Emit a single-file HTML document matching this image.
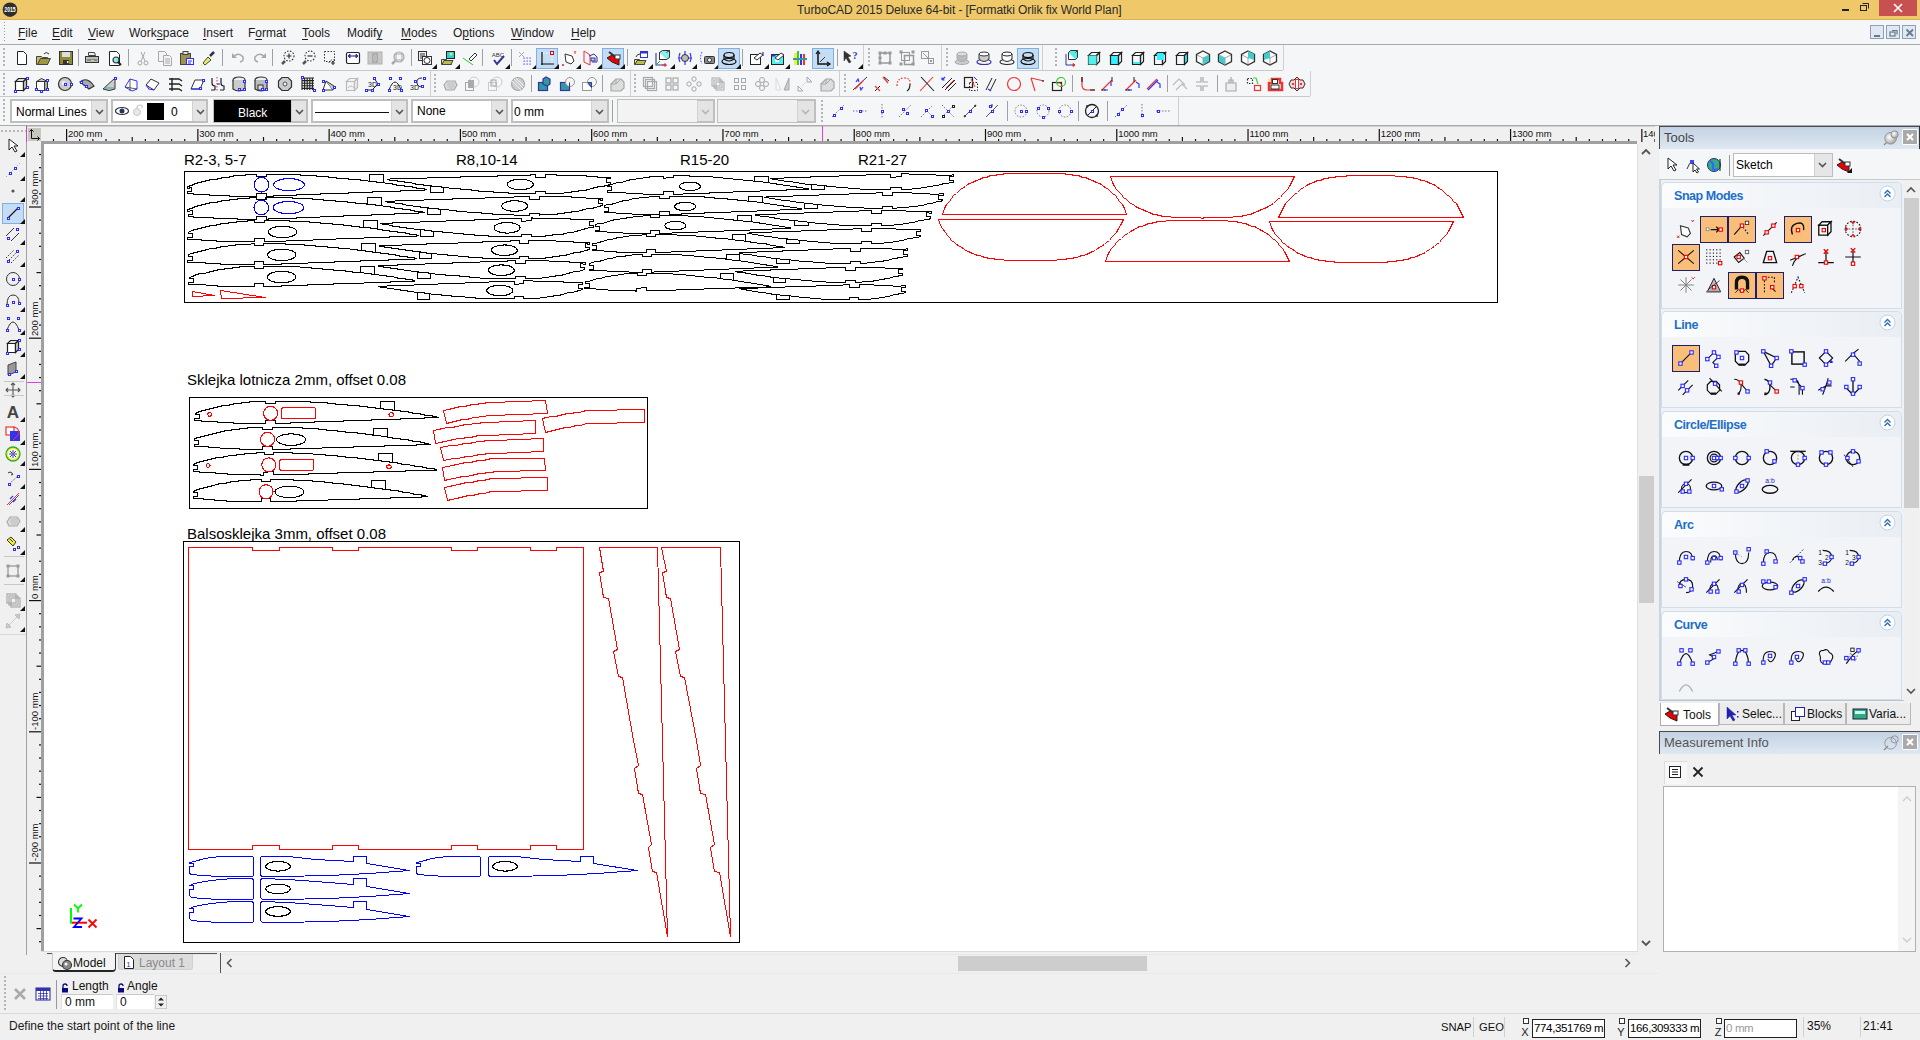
<!DOCTYPE html><html><head><meta charset="utf-8"><style>
html,body{margin:0;padding:0;width:1920px;height:1040px;overflow:hidden;background:#f0f0f0;font-family:"Liberation Sans",sans-serif;position:relative}
svg{overflow:visible}
</style></head><body><div style="position:absolute;left:0px;top:0px;width:1920px;height:19px;background:#efc86a"></div>
<div style="position:absolute;left:0px;top:19px;width:1920px;height:1px;background:#d9b25a"></div>
<svg style="position:absolute;left:2px;top:1px;" width="17" height="17" viewBox="0 0 17 17"><circle cx="8" cy="8.7" r="7.3" fill="#2d2d2d"/><text x="0" y="0" font-size="6.3" font-family="Liberation Sans" font-weight="bold" fill="#fff" text-anchor="middle" transform="translate(8 11) scale(0.82 1)">2015</text></svg>
<div style="position:absolute;left:797px;top:3.84px;font-size:12px;line-height:12px;color:#2a2a2a;white-space:nowrap;letter-spacing:-0.08px">TurboCAD 2015 Deluxe 64-bit - [Formatki Orlik fix World Plan]</div>
<div style="position:absolute;left:1842px;top:9px;width:7px;height:2px;background:#222"></div>
<svg style="position:absolute;left:1860px;top:2px;" width="10" height="10" viewBox="0 0 10 10"><rect x="0.5" y="3.5" width="6" height="5" fill="none" stroke="#222" stroke-width="1"/><path d="M2.5 1.5h6v5" fill="none" stroke="#222"/></svg>
<div style="position:absolute;left:1879px;top:0px;width:38px;height:16px;background:#c75050"></div>
<svg style="position:absolute;left:1891px;top:3px;" width="14" height="10" viewBox="0 0 14 10"><path d="M3 1 L11 9 M11 1 L3 9" stroke="#fff" stroke-width="1.6"/></svg>
<div style="position:absolute;left:0px;top:20px;width:1920px;height:24px;background:#f5f6f7"></div>
<div style="position:absolute;left:0px;top:44px;width:1920px;height:1px;background:#a9a9a9"></div>
<div style="position:absolute;left:4px;top:22px;width:1px;height:1px;background:#999"></div>
<div style="position:absolute;left:4px;top:25px;width:1px;height:1px;background:#999"></div>
<div style="position:absolute;left:4px;top:28px;width:1px;height:1px;background:#999"></div>
<div style="position:absolute;left:4px;top:31px;width:1px;height:1px;background:#999"></div>
<div style="position:absolute;left:4px;top:34px;width:1px;height:1px;background:#999"></div>
<div style="position:absolute;left:4px;top:37px;width:1px;height:1px;background:#999"></div>
<div style="position:absolute;left:4px;top:40px;width:1px;height:1px;background:#999"></div>
<div style="position:absolute;left:18px;top:26.84px;font-size:12px;line-height:12px;color:#1a1a1a;white-space:nowrap;text-decoration-thickness:1px;text-underline-offset:2px"><u>F</u>ile</div>
<div style="position:absolute;left:52px;top:26.84px;font-size:12px;line-height:12px;color:#1a1a1a;white-space:nowrap;text-decoration-thickness:1px;text-underline-offset:2px"><u>E</u>dit</div>
<div style="position:absolute;left:88px;top:26.84px;font-size:12px;line-height:12px;color:#1a1a1a;white-space:nowrap;text-decoration-thickness:1px;text-underline-offset:2px"><u>V</u>iew</div>
<div style="position:absolute;left:129px;top:26.84px;font-size:12px;line-height:12px;color:#1a1a1a;white-space:nowrap;text-decoration-thickness:1px;text-underline-offset:2px">Work<u>s</u>pace</div>
<div style="position:absolute;left:203px;top:26.84px;font-size:12px;line-height:12px;color:#1a1a1a;white-space:nowrap;text-decoration-thickness:1px;text-underline-offset:2px"><u>I</u>nsert</div>
<div style="position:absolute;left:248px;top:26.84px;font-size:12px;line-height:12px;color:#1a1a1a;white-space:nowrap;text-decoration-thickness:1px;text-underline-offset:2px">F<u>o</u>rmat</div>
<div style="position:absolute;left:302px;top:26.84px;font-size:12px;line-height:12px;color:#1a1a1a;white-space:nowrap;text-decoration-thickness:1px;text-underline-offset:2px"><u>T</u>ools</div>
<div style="position:absolute;left:347px;top:26.84px;font-size:12px;line-height:12px;color:#1a1a1a;white-space:nowrap;text-decoration-thickness:1px;text-underline-offset:2px">Modif<u>y</u></div>
<div style="position:absolute;left:401px;top:26.84px;font-size:12px;line-height:12px;color:#1a1a1a;white-space:nowrap;text-decoration-thickness:1px;text-underline-offset:2px"><u>M</u>odes</div>
<div style="position:absolute;left:453px;top:26.84px;font-size:12px;line-height:12px;color:#1a1a1a;white-space:nowrap;text-decoration-thickness:1px;text-underline-offset:2px">O<u>p</u>tions</div>
<div style="position:absolute;left:511px;top:26.84px;font-size:12px;line-height:12px;color:#1a1a1a;white-space:nowrap;text-decoration-thickness:1px;text-underline-offset:2px"><u>W</u>indow</div>
<div style="position:absolute;left:571px;top:26.84px;font-size:12px;line-height:12px;color:#1a1a1a;white-space:nowrap;text-decoration-thickness:1px;text-underline-offset:2px"><u>H</u>elp</div>
<div style="position:absolute;left:1870px;top:25px;width:14px;height:14px;background:#dde9f5;border:1px solid #8fa0b0;box-sizing:border-box"></div>
<div style="position:absolute;left:1886px;top:25px;width:14px;height:14px;background:#dde9f5;border:1px solid #8fa0b0;box-sizing:border-box"></div>
<div style="position:absolute;left:1902px;top:25px;width:14px;height:14px;background:#dde9f5;border:1px solid #8fa0b0;box-sizing:border-box"></div>
<div style="position:absolute;left:1874px;top:35px;width:6px;height:2px;background:#6b7a88"></div>
<svg style="position:absolute;left:1889px;top:28px;" width="10" height="10" viewBox="0 0 10 10"><rect x="1" y="4" width="5" height="4" fill="none" stroke="#6b7a88" stroke-width="1.2"/><path d="M3 2.5h5v4" fill="none" stroke="#6b7a88" stroke-width="1.2"/></svg>
<svg style="position:absolute;left:1905px;top:28px;" width="10" height="10" viewBox="0 0 10 10"><path d="M1.5 1.5 L8 8 M8 1.5 L1.5 8" stroke="#6b7a88" stroke-width="1.8"/></svg>
<div style="position:absolute;left:0px;top:45px;width:1920px;height:81px;background:#f5f6f7"></div>
<div style="position:absolute;left:0px;top:70px;width:1283px;height:1px;background:#c9c9c9"></div>
<div style="position:absolute;left:0px;top:96px;width:1310px;height:1px;background:#c9c9c9"></div>
<div style="position:absolute;left:0px;top:125px;width:1920px;height:1px;background:#a9a9a9"></div>
<div style="position:absolute;left:3px;top:48px;width:2px;height:2px;background:#b4b4b4"></div>
<div style="position:absolute;left:3px;top:52px;width:2px;height:2px;background:#b4b4b4"></div>
<div style="position:absolute;left:3px;top:56px;width:2px;height:2px;background:#b4b4b4"></div>
<div style="position:absolute;left:3px;top:60px;width:2px;height:2px;background:#b4b4b4"></div>
<div style="position:absolute;left:3px;top:64px;width:2px;height:2px;background:#b4b4b4"></div>
<div style="position:absolute;left:3px;top:73px;width:2px;height:2px;background:#b4b4b4"></div>
<div style="position:absolute;left:3px;top:77px;width:2px;height:2px;background:#b4b4b4"></div>
<div style="position:absolute;left:3px;top:81px;width:2px;height:2px;background:#b4b4b4"></div>
<div style="position:absolute;left:3px;top:85px;width:2px;height:2px;background:#b4b4b4"></div>
<div style="position:absolute;left:3px;top:89px;width:2px;height:2px;background:#b4b4b4"></div>
<div style="position:absolute;left:3px;top:93px;width:2px;height:2px;background:#b4b4b4"></div>
<div style="position:absolute;left:3px;top:99px;width:2px;height:2px;background:#b4b4b4"></div>
<div style="position:absolute;left:3px;top:103px;width:2px;height:2px;background:#b4b4b4"></div>
<div style="position:absolute;left:3px;top:107px;width:2px;height:2px;background:#b4b4b4"></div>
<div style="position:absolute;left:3px;top:111px;width:2px;height:2px;background:#b4b4b4"></div>
<div style="position:absolute;left:3px;top:115px;width:2px;height:2px;background:#b4b4b4"></div>
<div style="position:absolute;left:3px;top:119px;width:2px;height:2px;background:#b4b4b4"></div>
<svg style="position:absolute;left:14px;top:50px;" width="16" height="16" viewBox="0 0 16 16"><path d="M3.5 1.5h6l3 3v10h-9z" stroke="#222" stroke-width="1" fill="#fff" /></svg>
<svg style="position:absolute;left:35px;top:50px;" width="16" height="16" viewBox="0 0 16 16"><path d="M1.5 6.5h5l1 1h5v7h-11z" stroke="#444" stroke-width="1" fill="#c8c060" /><path d="M2.5 14.5l3-6h10l-3 6z" stroke="#444" stroke-width="1" fill="#9c9840" /><path d="M9 4q2-3 5 0" stroke="#333" stroke-width="1" fill="none" /></svg>
<svg style="position:absolute;left:58px;top:50px;" width="16" height="16" viewBox="0 0 16 16"><rect x="1.5" y="1.5" width="13" height="13" fill="#8e8a36" stroke="#333" stroke-width="1" /><rect x="4" y="2" width="8" height="5" fill="#ddd" stroke="none" stroke-width="0" /><rect x="5" y="10" width="6" height="4" fill="#333" stroke="none" stroke-width="0" /><rect x="9" y="11" width="1.5" height="2" fill="#eee" stroke="none" stroke-width="0" /></svg>
<div style="position:absolute;left:78px;top:49px;width:1px;height:17px;background:#a0a0a0"></div>
<svg style="position:absolute;left:84px;top:50px;" width="16" height="16" viewBox="0 0 16 16"><path d="M4.5 2.5h6l1 3h-7z" stroke="#444" stroke-width="1" fill="#eee" /><rect x="1.5" y="6.5" width="13" height="6" fill="#bbb" stroke="#333" stroke-width="1" /><rect x="3" y="9" width="10" height="2" fill="#888" stroke="none" stroke-width="0" /><rect x="7" y="10" width="3" height="1" fill="#dd3" stroke="none" stroke-width="0" /></svg>
<svg style="position:absolute;left:107px;top:50px;" width="16" height="16" viewBox="0 0 16 16"><path d="M2.5 1.5h7l3 3v11h-10z" stroke="#222" stroke-width="1" fill="#fff" /><circle cx="9" cy="10" r="3" fill="#8ee" stroke="#333" stroke-width="1.2" /><path d="M11 12l3 3" stroke="#222" stroke-width="2" fill="none" /></svg>
<div style="position:absolute;left:128px;top:49px;width:1px;height:17px;background:#a0a0a0"></div>
<svg style="position:absolute;left:135px;top:50px;" width="16" height="16" viewBox="0 0 16 16"><circle cx="5" cy="13" r="2" fill="none" stroke="#a8a8a8" stroke-width="1" /><circle cx="11" cy="13" r="2" fill="none" stroke="#a8a8a8" stroke-width="1" /><path d="M6 11L10 2M10 11L6 2" stroke="#a8a8a8" stroke-width="1" fill="none" /></svg>
<svg style="position:absolute;left:157px;top:50px;" width="16" height="16" viewBox="0 0 16 16"><path d="M1.5 1.5h6l2 2v8h-8z" stroke="#a8a8a8" stroke-width="1" fill="#f4f4f4" /><path d="M6.5 5.5h6l2 2v8h-8z" stroke="#a8a8a8" stroke-width="1" fill="#f4f4f4" /><path d="M8 9h5M8 11h5M8 13h5" stroke="#a8a8a8" stroke-width="1" fill="none" /></svg>
<svg style="position:absolute;left:179px;top:50px;" width="16" height="16" viewBox="0 0 16 16"><rect x="1.5" y="3.5" width="10" height="11" fill="#9a9450" stroke="#444" stroke-width="1" /><rect x="4" y="1.5" width="5" height="3" fill="#ddd" stroke="#444" stroke-width="1" /><rect x="7.5" y="8.5" width="7" height="6" fill="#fff" stroke="#2b2bff" stroke-width="1" /><path d="M9 11h4M9 13h3" stroke="#2b2bff" stroke-width="1" fill="none" /></svg>
<svg style="position:absolute;left:200px;top:50px;" width="16" height="16" viewBox="0 0 16 16"><path d="M3 13l5-6 3 3-6 5z" stroke="#444" stroke-width="1" fill="#ee6" /><path d="M10 6l4-4" stroke="#334" stroke-width="2.5" fill="none" /><path d="M1 15h3" stroke="#ee0" stroke-width="1" fill="none" stroke-dasharray="1.5 1.5"/></svg>
<div style="position:absolute;left:222px;top:49px;width:1px;height:17px;background:#a0a0a0"></div>
<svg style="position:absolute;left:230px;top:50px;" width="16" height="16" viewBox="0 0 16 16"><path d="M4 6q5-4 9 1q1 4-3 5" stroke="#a8a8a8" stroke-width="1.5" fill="none" /><path d="M2 3v5h5z" stroke="#a8a8a8" stroke-width="0" fill="#a8a8a8" /></svg>
<svg style="position:absolute;left:252px;top:50px;" width="16" height="16" viewBox="0 0 16 16"><path d="M12 6q-5-4-9 1q-1 4 3 5" stroke="#a8a8a8" stroke-width="1.5" fill="none" /><path d="M14 3v5h-5z" stroke="#a8a8a8" stroke-width="0" fill="#a8a8a8" /></svg>
<div style="position:absolute;left:272px;top:49px;width:1px;height:17px;background:#a0a0a0"></div>
<svg style="position:absolute;left:280px;top:50px;" width="16" height="16" viewBox="0 0 16 16"><circle cx="9" cy="6" r="5" fill="none" stroke="#333" stroke-width="1.1" stroke-dasharray="1.5 1.5"/><path d="M9 3.5v5M6.5 6h5" stroke="#333" stroke-width="1.2" fill="none" /><path d="M2 14l3-3" stroke="#555" stroke-width="2.5" fill="none" /></svg>
<svg style="position:absolute;left:301px;top:50px;" width="16" height="16" viewBox="0 0 16 16"><circle cx="9" cy="6" r="5" fill="none" stroke="#333" stroke-width="1.1" stroke-dasharray="1.5 1.5"/><path d="M6.5 6h5" stroke="#333" stroke-width="1.2" fill="none" /><path d="M2 14l3-3" stroke="#555" stroke-width="2.5" fill="none" /></svg>
<svg style="position:absolute;left:323px;top:50px;" width="16" height="16" viewBox="0 0 16 16"><rect x="1.5" y="1.5" width="10" height="10" fill="none" stroke="#333" stroke-width="1" stroke-dasharray="1.5 1.5"/><path d="M6 13q1-4 6-3" stroke="#333" stroke-width="1" fill="none" stroke-dasharray="1.5 1.5"/><path d="M10 11v4M8 13h4" stroke="#333" stroke-width="1.2" fill="none" /></svg>
<svg style="position:absolute;left:345px;top:50px;" width="16" height="16" viewBox="0 0 16 16"><rect x="1.5" y="2.5" width="13" height="11" fill="#fff" stroke="#222" stroke-width="1.2" rx="1.5"/><path d="M3 6h10" stroke="#33a" stroke-width="1.2" fill="none" /><path d="M3 6l2-2v4zM13 6l-2-2v4z" stroke="#33a" stroke-width="1" fill="#33a" /></svg>
<svg style="position:absolute;left:367px;top:50px;" width="16" height="16" viewBox="0 0 16 16"><rect x="1" y="2" width="14" height="12" fill="#c8c8c8" stroke="#b0b0b0" stroke-width="1" /><rect x="6" y="4" width="4" height="8" fill="#eee" stroke="#888" stroke-width="1" /><path d="M7 6h2M7 8h2M7 10h2" stroke="#888" stroke-width="1" fill="none" /></svg>
<svg style="position:absolute;left:390px;top:50px;" width="16" height="16" viewBox="0 0 16 16"><circle cx="9" cy="7" r="5" fill="none" stroke="#a8a8a8" stroke-width="1.2" /><rect x="6" y="4" width="6" height="6" fill="none" stroke="#a8a8a8" stroke-width="1" /><path d="M2 14l3-3" stroke="#a8a8a8" stroke-width="2.5" fill="none" /></svg>
<div style="position:absolute;left:411px;top:49px;width:1px;height:17px;background:#a0a0a0"></div>
<svg style="position:absolute;left:417px;top:50px;" width="16" height="16" viewBox="0 0 16 16"><rect x="1.5" y="1.5" width="8" height="9" fill="#eee" stroke="#333" stroke-width="1" /><path d="M3 4h5M3 6h5M3 8h5" stroke="#333" stroke-width="1" fill="none" /><rect x="5.5" y="6.5" width="9" height="8" fill="#fff" stroke="#333" stroke-width="1" /><circle cx="10" cy="10.5" r="3" fill="none" stroke="#333" stroke-width="1" /></svg>
<svg style="position:absolute;left:432px;top:64px;" width="5" height="5" viewBox="0 0 5 5"><path d="M5 0V5H0z" fill="#111"/></svg>
<svg style="position:absolute;left:440px;top:50px;" width="16" height="16" viewBox="0 0 16 16"><rect x="6.5" y="1.5" width="8" height="7" fill="#3cd" stroke="#222" stroke-width="1" /><circle cx="11" cy="4" r="1.5" fill="#ee3" stroke="none" stroke-width="0" /><path d="M1.5 9.5h5l1 1h4v4h-10z" stroke="#444" stroke-width="1" fill="#ee7" /><path d="M2 14.5l2-4h9l-2 4z" stroke="#444" stroke-width="1" fill="#bb5" /></svg>
<svg style="position:absolute;left:454.5px;top:64px;" width="5" height="5" viewBox="0 0 5 5"><path d="M5 0V5H0z" fill="#111"/></svg>
<svg style="position:absolute;left:461px;top:50px;" width="16" height="16" viewBox="0 0 16 16"><path d="M2 8l10 7" stroke="#2c2" stroke-width="1" fill="none" /><path d="M8 9l6-6 2 2-6 6z" stroke="#333" stroke-width="1" fill="#fff" /></svg>
<div style="position:absolute;left:482px;top:49px;width:1px;height:17px;background:#a0a0a0"></div>
<svg style="position:absolute;left:490px;top:50px;" width="16" height="16" viewBox="0 0 16 16"><text x="8" y="7" font-size="6" font-family="Liberation Sans" text-anchor="middle" fill="#333">ABC</text><path d="M4 10l3 4 7-8" stroke="#339" stroke-width="2" fill="none" /></svg>
<svg style="position:absolute;left:504.5px;top:64px;" width="5" height="5" viewBox="0 0 5 5"><path d="M5 0V5H0z" fill="#111"/></svg>
<div style="position:absolute;left:511px;top:49px;width:1px;height:17px;background:#a0a0a0"></div>
<svg style="position:absolute;left:517px;top:50px;" width="16" height="16" viewBox="0 0 16 16"><path d="M2 2l5 5M7 2L2 7" stroke="#aaa" stroke-width="1" fill="none" /><rect x="6.5" y="7.5" width="1.2" height="1.2" fill="#44f" stroke="none" stroke-width="0" /><rect x="6.5" y="10.5" width="1.2" height="1.2" fill="#44f" stroke="none" stroke-width="0" /><rect x="6.5" y="13.5" width="1.2" height="1.2" fill="#44f" stroke="none" stroke-width="0" /><rect x="9.5" y="7.5" width="1.2" height="1.2" fill="#44f" stroke="none" stroke-width="0" /><rect x="9.5" y="10.5" width="1.2" height="1.2" fill="#44f" stroke="none" stroke-width="0" /><rect x="9.5" y="13.5" width="1.2" height="1.2" fill="#44f" stroke="none" stroke-width="0" /><rect x="12.5" y="7.5" width="1.2" height="1.2" fill="#44f" stroke="none" stroke-width="0" /><rect x="12.5" y="10.5" width="1.2" height="1.2" fill="#44f" stroke="none" stroke-width="0" /><rect x="12.5" y="13.5" width="1.2" height="1.2" fill="#44f" stroke="none" stroke-width="0" /></svg>
<svg style="position:absolute;left:532px;top:64px;" width="5" height="5" viewBox="0 0 5 5"><path d="M5 0V5H0z" fill="#111"/></svg>
<div style="position:absolute;left:536px;top:47.5px;width:22px;height:21px;background:#c4dcf4;border:1px solid #7db1e6;box-sizing:border-box"></div>
<svg style="position:absolute;left:539px;top:50px;" width="16" height="16" viewBox="0 0 16 16"><path d="M3 2v13M2 14h13" stroke="#111" stroke-width="1.2" fill="none" /><path d="M4 3h9v10" stroke="#fff" stroke-width="1" fill="none" stroke-dasharray="1.5 1.5"/><rect x="11.5" y="1.5" width="3" height="3" fill="#fff" stroke="#e00" stroke-width="1" /></svg>
<svg style="position:absolute;left:554px;top:64px;" width="5" height="5" viewBox="0 0 5 5"><path d="M5 0V5H0z" fill="#111"/></svg>
<svg style="position:absolute;left:561px;top:50px;" width="16" height="16" viewBox="0 0 16 16"><path d="M4 4l7 2 2 5-3 3-5-2z" stroke="#333" stroke-width="1" fill="#fff" /><path d="M1 14l2 2M3 14l-2 2" stroke="#e22" stroke-width="0.8" fill="none" /><path d="M13 1l1 1.5 1-1.5M14 2.5v1.5" stroke="#e22" stroke-width="0.8" fill="none" /></svg>
<svg style="position:absolute;left:576px;top:64px;" width="5" height="5" viewBox="0 0 5 5"><path d="M5 0V5H0z" fill="#111"/></svg>
<svg style="position:absolute;left:582px;top:50px;" width="16" height="16" viewBox="0 0 16 16"><path d="M2 1v11l6 3V5z" stroke="#e33" stroke-width="1" fill="none" /><path d="M7 6l5-2 3 3v5h-5" stroke="#33a" stroke-width="1" fill="none" /><rect x="9" y="8" width="4" height="3" fill="#ccc" stroke="#33a" stroke-width="1" /></svg>
<svg style="position:absolute;left:597px;top:64px;" width="5" height="5" viewBox="0 0 5 5"><path d="M5 0V5H0z" fill="#111"/></svg>
<div style="position:absolute;left:602px;top:47.5px;width:22px;height:21px;background:#c4dcf4;border:1px solid #7db1e6;box-sizing:border-box"></div>
<svg style="position:absolute;left:605px;top:50px;" width="16" height="16" viewBox="0 0 16 16"><path d="M2 8l5-3 7 3v7l-7-3z" stroke="#222" stroke-width="1" fill="#e00" /><path d="M4 2l8 6" stroke="#333" stroke-width="2" fill="none" /><rect x="10" y="5" width="5" height="4" fill="#fff" stroke="#333" stroke-width="1" /></svg>
<svg style="position:absolute;left:620px;top:64px;" width="5" height="5" viewBox="0 0 5 5"><path d="M5 0V5H0z" fill="#111"/></svg>
<div style="position:absolute;left:627px;top:49px;width:1px;height:17px;background:#a0a0a0"></div>
<svg style="position:absolute;left:633px;top:50px;" width="16" height="16" viewBox="0 0 16 16"><path d="M1.5 9.5h5l1 1h4v4h-10z" stroke="#444" stroke-width="1" fill="#ee7" /><path d="M2 14.5l2-4h9l-2 4z" stroke="#444" stroke-width="1" fill="#bb5" /><rect x="7.5" y="1.5" width="7" height="6" fill="#fff" stroke="#33c" stroke-width="1" /><rect x="8" y="2" width="6" height="1.5" fill="#33c" stroke="none" stroke-width="0" /><path d="M3 7q1-3 4-3" stroke="#333" stroke-width="1" fill="none" /></svg>
<svg style="position:absolute;left:648px;top:64px;" width="5" height="5" viewBox="0 0 5 5"><path d="M5 0V5H0z" fill="#111"/></svg>
<svg style="position:absolute;left:654px;top:50px;" width="16" height="16" viewBox="0 0 16 16"><path d="M2 3v12h9" stroke="#33a" stroke-width="1.1" fill="none" /><path d="M2 15l4-4" stroke="#2a2" stroke-width="1" fill="none" /><rect x="5.5" y="2.5" width="7" height="7" fill="#fff" stroke="#333" stroke-width="1" /><path d="M5.5 2.5l3-2h7v7l-3 2M12.5 2.5l3-2" stroke="#333" stroke-width="1" fill="#8ee" /><path d="M8 15h4l-1.5-1.5M12 15l-1.5 1.5" stroke="#d33" stroke-width="1.2" fill="none" /></svg>
<svg style="position:absolute;left:669.5px;top:64px;" width="5" height="5" viewBox="0 0 5 5"><path d="M5 0V5H0z" fill="#111"/></svg>
<svg style="position:absolute;left:677px;top:50px;" width="16" height="16" viewBox="0 0 16 16"><path d="M8 1v4M8 11v4M1 8h4M11 8h4" stroke="#33f" stroke-width="1.2" fill="none" /><circle cx="8" cy="8" r="3.5" fill="#bbb" stroke="#333" stroke-width="1" /><path d="M3 3q-2 5 0 9M13 3q2 5 0 9" stroke="#33f" stroke-width="1.2" fill="none" /></svg>
<svg style="position:absolute;left:692px;top:64px;" width="5" height="5" viewBox="0 0 5 5"><path d="M5 0V5H0z" fill="#111"/></svg>
<svg style="position:absolute;left:699px;top:50px;" width="16" height="16" viewBox="0 0 16 16"><rect x="5.5" y="6.5" width="10" height="7" fill="#888" stroke="#333" stroke-width="1" rx="1"/><circle cx="10.5" cy="10" r="2" fill="#fff" stroke="#333" stroke-width="1" /><path d="M3 2q-3 6 0 12" stroke="#33f" stroke-width="1" fill="none" stroke-dasharray="1.5 1.5"/></svg>
<svg style="position:absolute;left:713.7px;top:64px;" width="5" height="5" viewBox="0 0 5 5"><path d="M5 0V5H0z" fill="#111"/></svg>
<div style="position:absolute;left:718px;top:47.5px;width:22px;height:21px;background:#c4dcf4;border:1px solid #7db1e6;box-sizing:border-box"></div>
<svg style="position:absolute;left:721px;top:50px;" width="16" height="16" viewBox="0 0 16 16"><ellipse cx="8" cy="11.5" rx="7" ry="3" fill="none" stroke="#111" stroke-width="1.2" /><ellipse cx="8" cy="5" rx="5" ry="2.5" fill="none" stroke="#111" stroke-width="1.2" /><path d="M3 5v4q5 4 10 0V5" stroke="#111" stroke-width="1.2" fill="none" /><path d="M4 8h8" stroke="#111" stroke-width="1" fill="none" /></svg>
<svg style="position:absolute;left:736px;top:64px;" width="5" height="5" viewBox="0 0 5 5"><path d="M5 0V5H0z" fill="#111"/></svg>
<div style="position:absolute;left:742px;top:49px;width:1px;height:17px;background:#a0a0a0"></div>
<svg style="position:absolute;left:749px;top:50px;" width="16" height="16" viewBox="0 0 16 16"><rect x="1.5" y="4.5" width="10" height="10" fill="#fff" stroke="#222" stroke-width="1" /><path d="M5 8l6-5 3 2-6 5z" stroke="#333" stroke-width="1" fill="#fff" /><path d="M14 2v4" stroke="#33a" stroke-width="1.2" fill="none" /></svg>
<svg style="position:absolute;left:763.7px;top:64px;" width="5" height="5" viewBox="0 0 5 5"><path d="M5 0V5H0z" fill="#111"/></svg>
<svg style="position:absolute;left:770px;top:50px;" width="16" height="16" viewBox="0 0 16 16"><rect x="1.5" y="4.5" width="12" height="10" fill="#5ee" stroke="#222" stroke-width="1" /><rect x="1.5" y="4.5" width="4" height="2" fill="#33c" stroke="none" stroke-width="0" /><rect x="5" y="8" width="4" height="4" fill="#fff" stroke="none" stroke-width="0" /><path d="M5 8l6-5 3 2-6 5z" stroke="#333" stroke-width="1" fill="#fff" /></svg>
<svg style="position:absolute;left:785px;top:64px;" width="5" height="5" viewBox="0 0 5 5"><path d="M5 0V5H0z" fill="#111"/></svg>
<svg style="position:absolute;left:792px;top:50px;" width="16" height="16" viewBox="0 0 16 16"><rect x="2" y="3" width="3" height="12" fill="#ee4" stroke="none" stroke-width="0" /><rect x="5" y="1" width="2" height="14" fill="#3c3" stroke="none" stroke-width="0" /><rect x="8" y="4" width="2" height="11" fill="#33e" stroke="none" stroke-width="0" /><rect x="11" y="4" width="2" height="11" fill="#e33" stroke="none" stroke-width="0" /><rect x="1" y="8" width="14" height="2" fill="#399" stroke="none" stroke-width="0" /></svg>
<div style="position:absolute;left:812px;top:47.5px;width:22px;height:21px;background:#c4dcf4;border:1px solid #7db1e6;box-sizing:border-box"></div>
<svg style="position:absolute;left:815px;top:50px;" width="16" height="16" viewBox="0 0 16 16"><path d="M3 2v12h11" stroke="#111" stroke-width="1.5" fill="none" /><path d="M1 4l2-3 2 3M12 12l3 2-3 2" stroke="#111" stroke-width="1.2" fill="none" /><path d="M5 12l5-5" stroke="#111" stroke-width="0.8" fill="none" /></svg>
<div style="position:absolute;left:837px;top:49px;width:1px;height:17px;background:#a0a0a0"></div>
<svg style="position:absolute;left:843px;top:50px;" width="16" height="16" viewBox="0 0 16 16"><path d="M1 1l7 5-3 1 3 5-2 1-3-5-2 3z" stroke="#333" stroke-width="0.5" fill="#333" /><text x="12" y="9" font-size="10" font-weight="bold" font-family="Liberation Serif" text-anchor="middle" fill="#33a">?</text></svg>
<svg style="position:absolute;left:858px;top:64px;" width="5" height="5" viewBox="0 0 5 5"><path d="M5 0V5H0z" fill="#111"/></svg>
<div style="position:absolute;left:863px;top:45px;width:1px;height:25px;background:#cfcfcf"></div>
<div style="position:absolute;left:868px;top:48px;width:2px;height:2px;background:#b4b4b4"></div>
<div style="position:absolute;left:868px;top:52px;width:2px;height:2px;background:#b4b4b4"></div>
<div style="position:absolute;left:868px;top:56px;width:2px;height:2px;background:#b4b4b4"></div>
<div style="position:absolute;left:868px;top:60px;width:2px;height:2px;background:#b4b4b4"></div>
<div style="position:absolute;left:868px;top:64px;width:2px;height:2px;background:#b4b4b4"></div>
<svg style="position:absolute;left:877px;top:50px;" width="16" height="16" viewBox="0 0 16 16"><rect x="3" y="3" width="10" height="10" fill="none" stroke="#999" stroke-width="1.5" /><rect x="1.5" y="1.5" width="3" height="3" fill="#999" stroke="none" stroke-width="0" /><rect x="11.5" y="1.5" width="3" height="3" fill="#999" stroke="none" stroke-width="0" /><rect x="1.5" y="11.5" width="3" height="3" fill="#999" stroke="none" stroke-width="0" /><rect x="11.5" y="11.5" width="3" height="3" fill="#999" stroke="none" stroke-width="0" /><rect x="6.5" y="1.5" width="3" height="3" fill="#999" stroke="none" stroke-width="0" /><rect x="1.5" y="6.5" width="3" height="3" fill="#999" stroke="none" stroke-width="0" /></svg>
<svg style="position:absolute;left:899px;top:50px;" width="16" height="16" viewBox="0 0 16 16"><rect x="2.5" y="2.5" width="8" height="8" fill="none" stroke="#999" stroke-width="1" /><rect x="5.5" y="5.5" width="9" height="9" fill="none" stroke="#999" stroke-width="1.5" /><rect x="0.5" y="0.5" width="3" height="3" fill="#999" stroke="none" stroke-width="0" /><rect x="12.5" y="0.5" width="3" height="3" fill="#999" stroke="none" stroke-width="0" /><rect x="0.5" y="12.5" width="3" height="3" fill="#999" stroke="none" stroke-width="0" /><rect x="12.5" y="12.5" width="3" height="3" fill="#999" stroke="none" stroke-width="0" /></svg>
<svg style="position:absolute;left:920px;top:50px;" width="16" height="16" viewBox="0 0 16 16"><rect x="1.5" y="1.5" width="7" height="7" fill="none" stroke="#999" stroke-width="1" /><rect x="8.5" y="8.5" width="5" height="5" fill="none" stroke="#999" stroke-width="1" /><path d="M3 3l5 5" stroke="#999" stroke-width="1" fill="none" /><rect x="10" y="10" width="2" height="2" fill="#999" stroke="none" stroke-width="0" /></svg>
<div style="position:absolute;left:941px;top:45px;width:1px;height:25px;background:#cfcfcf"></div>
<div style="position:absolute;left:946px;top:48px;width:2px;height:2px;background:#b4b4b4"></div>
<div style="position:absolute;left:946px;top:52px;width:2px;height:2px;background:#b4b4b4"></div>
<div style="position:absolute;left:946px;top:56px;width:2px;height:2px;background:#b4b4b4"></div>
<div style="position:absolute;left:946px;top:60px;width:2px;height:2px;background:#b4b4b4"></div>
<div style="position:absolute;left:946px;top:64px;width:2px;height:2px;background:#b4b4b4"></div>
<svg style="position:absolute;left:954px;top:50px;" width="16" height="16" viewBox="0 0 16 16"><ellipse cx="8" cy="12" rx="7" ry="2.5" fill="#ccc" stroke="#aaa" stroke-width="1" /><path d="M3 4q5 3 10 0v5q-5 5-10 0z" stroke="#aaa" stroke-width="1" fill="#bbb" /><ellipse cx="8" cy="4" rx="5" ry="2" fill="#ddd" stroke="#aaa" stroke-width="1" /></svg>
<svg style="position:absolute;left:976px;top:50px;" width="16" height="16" viewBox="0 0 16 16"><ellipse cx="8" cy="12" rx="7" ry="2.5" fill="none" stroke="#33a" stroke-width="1.2" /><path d="M3 4q5 3 10 0v5q-5 5-10 0z" stroke="#333" stroke-width="1" fill="#ccc" /><ellipse cx="8" cy="4" rx="5" ry="2" fill="#fff" stroke="#333" stroke-width="1" /></svg>
<svg style="position:absolute;left:999px;top:50px;" width="16" height="16" viewBox="0 0 16 16"><ellipse cx="8" cy="12" rx="7" ry="2.5" fill="none" stroke="#222" stroke-width="1.1" /><path d="M3 4q5 3 10 0v5q-5 5-10 0z" stroke="#222" stroke-width="1" fill="#fff" /><ellipse cx="8" cy="4" rx="5" ry="2" fill="#fff" stroke="#222" stroke-width="1" /></svg>
<div style="position:absolute;left:1017px;top:47.5px;width:22px;height:21px;background:#c4dcf4;border:1px solid #7db1e6;box-sizing:border-box"></div>
<svg style="position:absolute;left:1020px;top:50px;" width="16" height="16" viewBox="0 0 16 16"><ellipse cx="8" cy="11.5" rx="7" ry="3" fill="none" stroke="#111" stroke-width="1.2" /><ellipse cx="8" cy="5" rx="5" ry="2.5" fill="none" stroke="#111" stroke-width="1.2" /><path d="M3 5v4q5 4 10 0V5" stroke="#111" stroke-width="1.2" fill="none" /><path d="M4 8h8" stroke="#111" stroke-width="1" fill="none" /></svg>
<div style="position:absolute;left:1042px;top:45px;width:1px;height:25px;background:#cfcfcf"></div>
<div style="position:absolute;left:1055px;top:48px;width:2px;height:2px;background:#b4b4b4"></div>
<div style="position:absolute;left:1055px;top:52px;width:2px;height:2px;background:#b4b4b4"></div>
<div style="position:absolute;left:1055px;top:56px;width:2px;height:2px;background:#b4b4b4"></div>
<div style="position:absolute;left:1055px;top:60px;width:2px;height:2px;background:#b4b4b4"></div>
<div style="position:absolute;left:1055px;top:64px;width:2px;height:2px;background:#b4b4b4"></div>
<svg style="position:absolute;left:1063px;top:50px;" width="16" height="16" viewBox="0 0 16 16"><path d="M3 4v11h9" stroke="#33a" stroke-width="1" fill="none" /><path d="M12 15l-2-1.5v3z" stroke="#d33" stroke-width="1" fill="#d33" /><path d="M5.5 2.5h7v7h-7z" stroke="#333" stroke-width="1" fill="#fff" /><path d="M5.5 2.5l2-2h7v7l-2 2M12.5 2.5l2-2" stroke="#333" stroke-width="1" fill="#5ee" /></svg>
<svg style="position:absolute;left:1086px;top:50px;" width="16" height="16" viewBox="0 0 16 16"><path d="M2.5 5.5h8v9h-8z" stroke="#222" stroke-width="1.2" fill="none" /><path d="M2.5 5.5l3-3h8l-3 3z" stroke="#222" stroke-width="1.2" fill="none" /><path d="M10.5 5.5l3-3v9l-3 3z" stroke="#222" stroke-width="1.2" fill="none" /><path d="M2.5 5.5h8v9h-8z" stroke="#5ee" stroke-width="0" fill="#5ee" /></svg>
<svg style="position:absolute;left:1108px;top:50px;" width="16" height="16" viewBox="0 0 16 16"><path d="M2.5 5.5h8v9h-8z" stroke="#222" stroke-width="1.2" fill="#3ef" /><path d="M2.5 5.5l3-3h8l-3 3z" stroke="#222" stroke-width="1.2" fill="none" /><path d="M10.5 5.5l3-3v9l-3 3z" stroke="#222" stroke-width="1.2" fill="none" /></svg>
<svg style="position:absolute;left:1130px;top:50px;" width="16" height="16" viewBox="0 0 16 16"><path d="M2.5 5.5h8v9h-8z" stroke="#222" stroke-width="1.2" fill="none" /><path d="M2.5 5.5l3-3h8l-3 3z" stroke="#222" stroke-width="1.2" fill="none" /><path d="M10.5 5.5l3-3v9l-3 3z" stroke="#222" stroke-width="1.2" fill="none" /><path d="M3 12h7v2h-7z" stroke="#3ef" stroke-width="0" fill="#3ef" /></svg>
<svg style="position:absolute;left:1152px;top:50px;" width="16" height="16" viewBox="0 0 16 16"><path d="M2.5 5.5h8v9h-8z" stroke="#222" stroke-width="1.2" fill="none" /><path d="M2.5 5.5l3-3h8l-3 3z" stroke="#222" stroke-width="1.2" fill="#3ef" /><path d="M10.5 5.5l3-3v9l-3 3z" stroke="#222" stroke-width="1.2" fill="none" /><path d="M5 4h7v6H5z" stroke="#3ef" stroke-width="0" fill="#3ef" /></svg>
<svg style="position:absolute;left:1174px;top:50px;" width="16" height="16" viewBox="0 0 16 16"><path d="M2.5 5.5h8v9h-8z" stroke="#222" stroke-width="1.2" fill="none" /><path d="M2.5 5.5l3-3h8l-3 3z" stroke="#222" stroke-width="1.2" fill="none" /><path d="M10.5 5.5l3-3v9l-3 3z" stroke="#222" stroke-width="1.2" fill="#3ef" /></svg>
<svg style="position:absolute;left:1195px;top:50px;" width="16" height="16" viewBox="0 0 16 16"><path d="M8 1l6.5 3.5v7L8 15l-6.5-3.5v-7z" stroke="#333" stroke-width="1.3" fill="#fff" /><path d="M8 8v7M8 8l6-3M8 8L2 5" stroke="#666" stroke-width="0.6" fill="none" /><path d="M8 8l6-3v6l-6 4z" stroke="#333" stroke-width="0" fill="#4cc" /></svg>
<svg style="position:absolute;left:1217px;top:50px;" width="16" height="16" viewBox="0 0 16 16"><path d="M8 1l6.5 3.5v7L8 15l-6.5-3.5v-7z" stroke="#333" stroke-width="1.3" fill="#fff" /><path d="M8 8v7M8 8l6-3M8 8L2 5" stroke="#666" stroke-width="0.6" fill="none" /><path d="M8 8L2 5v6l6 4z" stroke="#333" stroke-width="0" fill="#4cc" /></svg>
<svg style="position:absolute;left:1240px;top:50px;" width="16" height="16" viewBox="0 0 16 16"><path d="M8 1l6.5 3.5v7L8 15l-6.5-3.5v-7z" stroke="#333" stroke-width="1.3" fill="#fff" /><path d="M8 8v7M8 8l6-3M8 8L2 5" stroke="#666" stroke-width="0.6" fill="none" /><path d="M8 1l6 3v6L8 8z" stroke="#333" stroke-width="0" fill="#4cc" /></svg>
<svg style="position:absolute;left:1262px;top:50px;" width="16" height="16" viewBox="0 0 16 16"><path d="M8 1l6.5 3.5v7L8 15l-6.5-3.5v-7z" stroke="#333" stroke-width="1.3" fill="#fff" /><path d="M8 8v7M8 8l6-3M8 8L2 5" stroke="#666" stroke-width="0.6" fill="none" /><path d="M8 1L2 4v6l6-2z" stroke="#333" stroke-width="0" fill="#4cc" /></svg>
<div style="position:absolute;left:1283px;top:45px;width:1px;height:25px;background:#cfcfcf"></div>
<svg style="position:absolute;left:13px;top:76px;" width="16" height="16" viewBox="0 0 16 16"><path d="M2.5 5.5h8v9h-8z" stroke="#222" stroke-width="1.2" fill="#fff" /><path d="M2.5 5.5l3-3h8l-3 3z" stroke="#222" stroke-width="1.2" fill="#ddd" /><path d="M10.5 5.5l3-3v9l-3 3z" stroke="#222" stroke-width="1.2" fill="#ccc" /><rect x="1.5" y="14.5" width="2" height="2" fill="#fff" stroke="#2b2bff" stroke-width="1"/><rect x="13.5" y="1.5" width="2" height="2" fill="#fff" stroke="#2b2bff" stroke-width="1"/><rect x="13.5" y="10.5" width="2" height="2" fill="#fff" stroke="#2b2bff" stroke-width="1"/></svg>
<svg style="position:absolute;left:34px;top:76px;" width="16" height="16" viewBox="0 0 16 16"><path d="M2.5 5.5h8v9h-8z" stroke="#333" stroke-width="1" fill="#fff" /><path d="M2.5 5.5l5-3 6 3-3 0z" stroke="#333" stroke-width="1" fill="#ccc" /><path d="M10.5 5.5l3 0v8l-3 1z" stroke="#333" stroke-width="1" fill="#aaa" /><rect x="1.5" y="12.5" width="2" height="2" fill="#fff" stroke="#2b2bff" stroke-width="1"/><rect x="6.5" y="14.5" width="2" height="2" fill="#fff" stroke="#2b2bff" stroke-width="1"/><rect x="12.5" y="12.5" width="2" height="2" fill="#fff" stroke="#2b2bff" stroke-width="1"/><rect x="12.5" y="3.5" width="2" height="2" fill="#fff" stroke="#2b2bff" stroke-width="1"/></svg>
<svg style="position:absolute;left:57px;top:76px;" width="16" height="16" viewBox="0 0 16 16"><circle cx="8" cy="8" r="6.5" fill="#ccc" stroke="#333" stroke-width="1.2" /><circle cx="6.5" cy="7" r="2" fill="#eee" stroke="none" stroke-width="0" /><rect x="7.5" y="7.5" width="2" height="2" fill="#fff" stroke="#2b2bff" stroke-width="1"/><rect x="13.5" y="7.5" width="2" height="2" fill="#fff" stroke="#2b2bff" stroke-width="1"/></svg>
<svg style="position:absolute;left:79px;top:76px;" width="16" height="16" viewBox="0 0 16 16"><path d="M1 6q7-6 14 4l-5 3z" stroke="#333" stroke-width="1.2" fill="#aaa" /><rect x="1.5" y="5.5" width="2" height="2" fill="#fff" stroke="#2b2bff" stroke-width="1"/><rect x="6.5" y="9.5" width="2" height="2" fill="#fff" stroke="#2b2bff" stroke-width="1"/></svg>
<svg style="position:absolute;left:101px;top:76px;" width="16" height="16" viewBox="0 0 16 16"><path d="M14 2L2 13q6 3 12 0z" stroke="#333" stroke-width="1" fill="#ccc" /><path d="M3 12h10" stroke="#3aa" stroke-width="1" fill="none" /><rect x="13.5" y="1.5" width="2" height="2" fill="#fff" stroke="#2b2bff" stroke-width="1"/></svg>
<svg style="position:absolute;left:123px;top:76px;" width="16" height="16" viewBox="0 0 16 16"><path d="M2 11l5-8 7 2v8l-5 2z" stroke="#33f" stroke-width="1" fill="#fff" /><path d="M7 3v12M2 11l12 2" stroke="#333" stroke-width="0.8" fill="none" /></svg>
<svg style="position:absolute;left:144px;top:76px;" width="16" height="16" viewBox="0 0 16 16"><path d="M2 9l5-6 8 4-5 7z" stroke="#333" stroke-width="1" fill="#fff" /><path d="M2 9l3 4 5 1" stroke="#33f" stroke-width="1.2" fill="none" /></svg>
<svg style="position:absolute;left:167px;top:76px;" width="16" height="16" viewBox="0 0 16 16"><path d="M2 3h10l3 2M2 8h10l3 2M2 13h10l3 2M5 2v13" stroke="#222" stroke-width="1.4" fill="none" /></svg>
<svg style="position:absolute;left:189px;top:76px;" width="16" height="16" viewBox="0 0 16 16"><path d="M2 13l4-9h9l-4 9z" stroke="#333" stroke-width="1" fill="#fff" /><path d="M2 13h9" stroke="#33f" stroke-width="1.2" fill="none" /><rect x="13.5" y="3.5" width="2" height="2" fill="#fff" stroke="#2b2bff" stroke-width="1"/><rect x="10.5" y="11.5" width="2" height="2" fill="#fff" stroke="#2b2bff" stroke-width="1"/></svg>
<svg style="position:absolute;left:210px;top:76px;" width="16" height="16" viewBox="0 0 16 16"><path d="M2 2v5q0 3 3 3v4M1 14h4M11 2v5q0 3 3 3v4M10 14h4" stroke="#222" stroke-width="1.2" fill="none" /><path d="M7 1v15" stroke="#e33" stroke-width="1" fill="none" stroke-dasharray="1.5 1.5"/><path d="M7 8h3" stroke="#33f" stroke-width="1.2" fill="none" /></svg>
<svg style="position:absolute;left:232px;top:76px;" width="16" height="16" viewBox="0 0 16 16"><ellipse cx="7" cy="4" rx="6" ry="3" fill="#eee" stroke="#333" stroke-width="1.2" /><path d="M1 4v9q6 4 12 0V4" stroke="#333" stroke-width="1.2" fill="#ccc" /><rect x="11.5" y="4.5" width="2" height="2" fill="#fff" stroke="#2b2bff" stroke-width="1"/><rect x="6.5" y="12.5" width="2" height="2" fill="#fff" stroke="#2b2bff" stroke-width="1"/><rect x="11.5" y="12.5" width="2" height="2" fill="#fff" stroke="#2b2bff" stroke-width="1"/></svg>
<svg style="position:absolute;left:254px;top:76px;" width="16" height="16" viewBox="0 0 16 16"><ellipse cx="7" cy="4" rx="6" ry="3" fill="#eee" stroke="#333" stroke-width="1.2" /><path d="M1 4v9q6 4 12 0V4" stroke="#333" stroke-width="1.2" fill="#bbb" /><rect x="4" y="9" width="5" height="5" fill="#ddd" stroke="#333" stroke-width="1" /><rect x="7.5" y="12.5" width="2" height="2" fill="#fff" stroke="#2b2bff" stroke-width="1"/><rect x="11.5" y="12.5" width="2" height="2" fill="#fff" stroke="#2b2bff" stroke-width="1"/><rect x="11.5" y="4.5" width="2" height="2" fill="#fff" stroke="#2b2bff" stroke-width="1"/></svg>
<svg style="position:absolute;left:277px;top:76px;" width="16" height="16" viewBox="0 0 16 16"><path d="M5 1.5h6l3.5 3.5v6l-3.5 3.5h-6l-3.5-3.5v-6z" stroke="#333" stroke-width="1.2" fill="#ccc" /><circle cx="8" cy="8" r="2" fill="#eee" stroke="#555" stroke-width="1" /></svg>
<svg style="position:absolute;left:300px;top:76px;" width="16" height="16" viewBox="0 0 16 16"><path d="M2.0 2v12M2 2.0h12" stroke="#222" stroke-width="1.1" fill="none" /><path d="M4.6 2v12M2 4.6h12" stroke="#222" stroke-width="1.1" fill="none" /><path d="M7.2 2v12M2 7.2h12" stroke="#222" stroke-width="1.1" fill="none" /><path d="M9.8 2v12M2 9.8h12" stroke="#222" stroke-width="1.1" fill="none" /><path d="M12.4 2v12M2 12.4h12" stroke="#222" stroke-width="1.1" fill="none" /><rect x="1.5" y="0.5" width="2" height="2" fill="#fff" stroke="#2b2bff" stroke-width="1"/><rect x="13.5" y="13.5" width="2" height="2" fill="#fff" stroke="#2b2bff" stroke-width="1"/></svg>
<svg style="position:absolute;left:321px;top:76px;" width="16" height="16" viewBox="0 0 16 16"><path d="M2 14h10L5 5z" stroke="#333" stroke-width="1" fill="#fff" /><path d="M5 5l8 5-1 4" stroke="#333" stroke-width="1" fill="#ccc" /><rect x="1.5" y="13.5" width="2" height="2" fill="#fff" stroke="#2b2bff" stroke-width="1"/><rect x="1.5" y="4.5" width="2" height="2" fill="#fff" stroke="#2b2bff" stroke-width="1"/><rect x="12.5" y="10.5" width="2" height="2" fill="#fff" stroke="#2b2bff" stroke-width="1"/></svg>
<svg style="position:absolute;left:344px;top:76px;" width="16" height="16" viewBox="0 0 16 16"><path d="M2.5 5.5h8v9h-8z" stroke="#bbb" stroke-width="1.2" fill="#f4f4f4" /><path d="M2.5 5.5l3-3h8l-3 3z" stroke="#bbb" stroke-width="1.2" fill="#f4f4f4" /><path d="M10.5 5.5l3-3v9l-3 3z" stroke="#bbb" stroke-width="1.2" fill="#eee" /><path d="M4 12q3-4 6 0" stroke="#bbb" stroke-width="1" fill="none" /></svg>
<svg style="position:absolute;left:364px;top:76px;" width="16" height="16" viewBox="0 0 16 16"><text x="4" y="11" font-size="7" font-family="Liberation Sans" fill="#222">3D</text><path d="M2 14h6l6-6-4-6" stroke="#222" stroke-width="1" fill="none" /><rect x="1.5" y="13.5" width="2" height="2" fill="#fff" stroke="#2b2bff" stroke-width="1"/><rect x="7.5" y="13.5" width="2" height="2" fill="#fff" stroke="#2b2bff" stroke-width="1"/><rect x="13.5" y="7.5" width="2" height="2" fill="#fff" stroke="#2b2bff" stroke-width="1"/><rect x="9.5" y="1.5" width="2" height="2" fill="#fff" stroke="#2b2bff" stroke-width="1"/></svg>
<svg style="position:absolute;left:387px;top:76px;" width="16" height="16" viewBox="0 0 16 16"><path d="M2 14q6-16 12 0" stroke="#222" stroke-width="1" fill="none" /><text x="6" y="14" font-size="7" font-family="Liberation Sans" fill="#222">3D</text><rect x="1.5" y="13.5" width="2" height="2" fill="#fff" stroke="#2b2bff" stroke-width="1"/><rect x="13.5" y="13.5" width="2" height="2" fill="#fff" stroke="#2b2bff" stroke-width="1"/><rect x="2.5" y="1.5" width="2" height="2" fill="#fff" stroke="#2b2bff" stroke-width="1"/><rect x="12.5" y="1.5" width="2" height="2" fill="#fff" stroke="#2b2bff" stroke-width="1"/></svg>
<svg style="position:absolute;left:410px;top:76px;" width="16" height="16" viewBox="0 0 16 16"><path d="M12 2q-6 0-5 5t6 3" stroke="#222" stroke-width="1" fill="none" /><text x="0" y="14" font-size="7" font-family="Liberation Sans" fill="#222">3D</text><rect x="13.5" y="1.5" width="2" height="2" fill="#fff" stroke="#2b2bff" stroke-width="1"/><rect x="4.5" y="4.5" width="2" height="2" fill="#fff" stroke="#2b2bff" stroke-width="1"/><rect x="11.5" y="9.5" width="2" height="2" fill="#fff" stroke="#2b2bff" stroke-width="1"/></svg>
<div style="position:absolute;left:430px;top:71px;width:1px;height:25px;background:#cfcfcf"></div>
<div style="position:absolute;left:434px;top:74px;width:2px;height:2px;background:#b4b4b4"></div>
<div style="position:absolute;left:434px;top:78px;width:2px;height:2px;background:#b4b4b4"></div>
<div style="position:absolute;left:434px;top:82px;width:2px;height:2px;background:#b4b4b4"></div>
<div style="position:absolute;left:434px;top:86px;width:2px;height:2px;background:#b4b4b4"></div>
<div style="position:absolute;left:434px;top:90px;width:2px;height:2px;background:#b4b4b4"></div>
<svg style="position:absolute;left:442px;top:76px;" width="16" height="16" viewBox="0 0 16 16"><path d="M2 9l3-4h8l2 4-3 5H4z" stroke="#a8a8a8" stroke-width="1.2" fill="#ddd" /><circle cx="9" cy="9" r="4" fill="#ccc" stroke="none" stroke-width="0" /></svg>
<svg style="position:absolute;left:464px;top:76px;" width="16" height="16" viewBox="0 0 16 16"><rect x="1.5" y="6.5" width="8" height="8" fill="none" stroke="#a8a8a8" stroke-width="1" /><circle cx="10" cy="6" r="5" fill="none" stroke="#ccc" stroke-width="1" /><rect x="4" y="4" width="6" height="8" fill="#aaa" stroke="none" stroke-width="0" /></svg>
<svg style="position:absolute;left:487px;top:76px;" width="16" height="16" viewBox="0 0 16 16"><rect x="1.5" y="6.5" width="8" height="8" fill="none" stroke="#c8c8c8" stroke-width="1" /><circle cx="10" cy="6" r="5" fill="none" stroke="#ccc" stroke-width="1" /><rect x="4" y="4" width="5" height="6" fill="none" stroke="#a8a8a8" stroke-width="1" /></svg>
<svg style="position:absolute;left:510px;top:76px;" width="16" height="16" viewBox="0 0 16 16"><circle cx="8" cy="8" r="6.5" fill="#ccc" stroke="#a8a8a8" stroke-width="1.2" /><path d="M4 3l10 10M2 5l9 9M6 2l8 8" stroke="#eee" stroke-width="1" fill="none" /></svg>
<div style="position:absolute;left:531px;top:75px;width:1px;height:17px;background:#a0a0a0"></div>
<svg style="position:absolute;left:537px;top:76px;" width="16" height="16" viewBox="0 0 16 16"><rect x="1.5" y="6.5" width="9" height="8" fill="#399" stroke="#33a" stroke-width="1.2" /><path d="M6 3l3-2 4 2v5l-3 2-4-2z" stroke="#33a" stroke-width="1.2" fill="#399" /></svg>
<svg style="position:absolute;left:559px;top:76px;" width="16" height="16" viewBox="0 0 16 16"><rect x="1.5" y="6.5" width="9" height="8" fill="#399" stroke="#33a" stroke-width="1.2" /><circle cx="11" cy="6" r="4.5" fill="#f4f4f4" stroke="#999" stroke-width="1" /><path d="M10.5 6.5v8" stroke="#33a" stroke-width="1" fill="none" /></svg>
<svg style="position:absolute;left:581px;top:76px;" width="16" height="16" viewBox="0 0 16 16"><rect x="1.5" y="6.5" width="9" height="8" fill="#fff" stroke="#999" stroke-width="1" /><circle cx="11" cy="6" r="4.5" fill="none" stroke="#999" stroke-width="1" /><path d="M7 6.5h3.5v5z" stroke="#33a" stroke-width="1" fill="#399" /></svg>
<div style="position:absolute;left:602px;top:75px;width:1px;height:17px;background:#a0a0a0"></div>
<svg style="position:absolute;left:609px;top:76px;" width="16" height="16" viewBox="0 0 16 16"><path d="M2 8l5-5h5l3 3v6l-3 3H2z" stroke="#a8a8a8" stroke-width="1.2" fill="#ddd" /><path d="M7 3v5H2M7 8l5-5" stroke="#a8a8a8" stroke-width="1" fill="none" /></svg>
<div style="position:absolute;left:630px;top:71px;width:1px;height:25px;background:#cfcfcf"></div>
<div style="position:absolute;left:634px;top:74px;width:2px;height:2px;background:#b4b4b4"></div>
<div style="position:absolute;left:634px;top:78px;width:2px;height:2px;background:#b4b4b4"></div>
<div style="position:absolute;left:634px;top:82px;width:2px;height:2px;background:#b4b4b4"></div>
<div style="position:absolute;left:634px;top:86px;width:2px;height:2px;background:#b4b4b4"></div>
<div style="position:absolute;left:634px;top:90px;width:2px;height:2px;background:#b4b4b4"></div>
<svg style="position:absolute;left:642px;top:76px;" width="16" height="16" viewBox="0 0 16 16"><rect x="1.5" y="1.5" width="9" height="9" fill="none" stroke="#a8a8a8" stroke-width="1.2" /><rect x="3.5" y="3.5" width="9" height="9" fill="none" stroke="#a8a8a8" stroke-width="1.2" /><rect x="5.5" y="5.5" width="9" height="9" fill="none" stroke="#a8a8a8" stroke-width="1.2" /></svg>
<svg style="position:absolute;left:664px;top:76px;" width="16" height="16" viewBox="0 0 16 16"><rect x="2" y="2" width="5" height="5" fill="none" stroke="#a8a8a8" stroke-width="1.2" /><rect x="9" y="2" width="5" height="5" fill="none" stroke="#a8a8a8" stroke-width="1.2" /><rect x="2" y="9" width="5" height="5" fill="none" stroke="#a8a8a8" stroke-width="1.2" /><rect x="9" y="9" width="5" height="5" fill="none" stroke="#a8a8a8" stroke-width="1.2" /></svg>
<svg style="position:absolute;left:686px;top:76px;" width="16" height="16" viewBox="0 0 16 16"><circle cx="8" cy="3" r="2.2" fill="none" stroke="#a8a8a8" stroke-width="1" /><circle cx="3" cy="8" r="2.2" fill="none" stroke="#a8a8a8" stroke-width="1" /><circle cx="13" cy="8" r="2.2" fill="none" stroke="#a8a8a8" stroke-width="1" /><circle cx="8" cy="13" r="2.2" fill="none" stroke="#a8a8a8" stroke-width="1" /></svg>
<svg style="position:absolute;left:710px;top:76px;" width="16" height="16" viewBox="0 0 16 16"><rect x="2" y="2" width="8" height="8" fill="none" stroke="#a8a8a8" stroke-width="1" /><rect x="4" y="4" width="8" height="8" fill="none" stroke="#a8a8a8" stroke-width="1" /><rect x="6" y="6" width="8" height="8" fill="none" stroke="#a8a8a8" stroke-width="1" /></svg>
<svg style="position:absolute;left:732px;top:76px;" width="16" height="16" viewBox="0 0 16 16"><rect x="2.5" y="2.5" width="4" height="4" fill="none" stroke="#a8a8a8" stroke-width="1" /><rect x="9.5" y="2.5" width="4" height="4" fill="none" stroke="#a8a8a8" stroke-width="1" /><rect x="2.5" y="9.5" width="4" height="4" fill="none" stroke="#a8a8a8" stroke-width="1" /><rect x="9.5" y="9.5" width="4" height="4" fill="none" stroke="#a8a8a8" stroke-width="1" /></svg>
<svg style="position:absolute;left:754px;top:76px;" width="16" height="16" viewBox="0 0 16 16"><circle cx="8" cy="4" r="2.5" fill="none" stroke="#a8a8a8" stroke-width="1" /><circle cx="4" cy="8" r="2.5" fill="none" stroke="#a8a8a8" stroke-width="1" /><circle cx="12" cy="8" r="2.5" fill="none" stroke="#a8a8a8" stroke-width="1" /><circle cx="8" cy="12" r="2.5" fill="none" stroke="#a8a8a8" stroke-width="1" /></svg>
<svg style="position:absolute;left:775px;top:76px;" width="16" height="16" viewBox="0 0 16 16"><path d="M1 14V2l5 12z" stroke="#ddd" stroke-width="1" fill="none" /><path d="M9 14l5-12v12z" stroke="#a8a8a8" stroke-width="1" fill="#ccc" /></svg>
<svg style="position:absolute;left:797px;top:76px;" width="16" height="16" viewBox="0 0 16 16"><path d="M1 15V10l5 5z" stroke="#a8a8a8" stroke-width="1" fill="none" /><path d="M10 1l5 5h-5z" stroke="#a8a8a8" stroke-width="1" fill="none" /><path d="M4 11l6-6" stroke="#ddd" stroke-width="1" fill="none" /></svg>
<svg style="position:absolute;left:819px;top:76px;" width="16" height="16" viewBox="0 0 16 16"><path d="M2 8l5-5h5l3 3v6l-3 3H2z" stroke="#a8a8a8" stroke-width="1.2" fill="#ddd" /><path d="M7 3v5H2M7 8l5-5" stroke="#a8a8a8" stroke-width="1" fill="none" /></svg>
<div style="position:absolute;left:839px;top:71px;width:1px;height:25px;background:#cfcfcf"></div>
<div style="position:absolute;left:844px;top:74px;width:2px;height:2px;background:#b4b4b4"></div>
<div style="position:absolute;left:844px;top:78px;width:2px;height:2px;background:#b4b4b4"></div>
<div style="position:absolute;left:844px;top:82px;width:2px;height:2px;background:#b4b4b4"></div>
<div style="position:absolute;left:844px;top:86px;width:2px;height:2px;background:#b4b4b4"></div>
<div style="position:absolute;left:844px;top:90px;width:2px;height:2px;background:#b4b4b4"></div>
<svg style="position:absolute;left:852px;top:76px;" width="16" height="16" viewBox="0 0 16 16"><path d="M1 14L15 1" stroke="#222" stroke-width="0.9" fill="none" /><path d="M3 13l8-8" stroke="#e33" stroke-width="1.2" fill="none" /><path d="M4 6l2-3 1 3M11 11l-2 3-1-3" stroke="#33f" stroke-width="1.2" fill="none" /></svg>
<svg style="position:absolute;left:874px;top:76px;" width="16" height="16" viewBox="0 0 16 16"><path d="M1 15l5-5M10 1l5 4" stroke="#222" stroke-width="1" fill="none" /><path d="M1 10l5 5M9 1l5 6" stroke="#e33" stroke-width="1.2" fill="none" /></svg>
<svg style="position:absolute;left:896px;top:76px;" width="16" height="16" viewBox="0 0 16 16"><path d="M1 10q0-8 7-8t6 6" stroke="#e33" stroke-width="1.2" fill="none" stroke-dasharray="1.5 1.5"/><path d="M14 8q0 5-3 7" stroke="#222" stroke-width="1.2" fill="none" /></svg>
<svg style="position:absolute;left:919px;top:76px;" width="16" height="16" viewBox="0 0 16 16"><path d="M1 15L14 1" stroke="#e33" stroke-width="1.1" fill="none" /><path d="M2 1l13 14" stroke="#222" stroke-width="1.1" fill="none" /></svg>
<svg style="position:absolute;left:941px;top:76px;" width="16" height="16" viewBox="0 0 16 16"><path d="M4 14l10-10M7 15l8-8M1 12l10-10" stroke="#222" stroke-width="1" fill="none" /><path d="M5 12l8-8" stroke="#e33" stroke-width="1" fill="none" /><path d="M1 4l3-3M1 4h2.5M1 4v-2.5" stroke="#33f" stroke-width="1.2" fill="none" /></svg>
<svg style="position:absolute;left:963px;top:76px;" width="16" height="16" viewBox="0 0 16 16"><rect x="1.5" y="1.5" width="8" height="10" fill="none" stroke="#222" stroke-width="1.2" /><rect x="6.5" y="6.5" width="8" height="8" fill="none" stroke="#222" stroke-width="1" stroke-dasharray="1.5 1.5"/><path d="M8 3l4 8" stroke="#e33" stroke-width="1" fill="none" /><path d="M11 1l3 3" stroke="#33f" stroke-width="1" fill="none" /></svg>
<svg style="position:absolute;left:984px;top:76px;" width="16" height="16" viewBox="0 0 16 16"><path d="M2 14l6-12M6 15l6-12" stroke="#222" stroke-width="1" fill="none" /><path d="M4 13l3 2" stroke="#33f" stroke-width="1.2" fill="none" /></svg>
<svg style="position:absolute;left:1006px;top:76px;" width="16" height="16" viewBox="0 0 16 16"><circle cx="8" cy="8" r="6.5" fill="none" stroke="#e33" stroke-width="1.2" /></svg>
<svg style="position:absolute;left:1029px;top:76px;" width="16" height="16" viewBox="0 0 16 16"><path d="M2 2l4 13M2 2l13 3" stroke="#e33" stroke-width="1.1" fill="none" /><path d="M15 5l-2 0" stroke="#222" stroke-width="1" fill="none" /></svg>
<svg style="position:absolute;left:1051px;top:76px;" width="16" height="16" viewBox="0 0 16 16"><rect x="1.5" y="6.5" width="9" height="8" fill="none" stroke="#222" stroke-width="1.2" /><circle cx="10" cy="6" r="4.5" fill="none" stroke="#2c2" stroke-width="1.1" /><path d="M6 7q5-1 5 4" stroke="#e33" stroke-width="1" fill="none" /></svg>
<div style="position:absolute;left:1072px;top:75px;width:1px;height:17px;background:#a0a0a0"></div>
<svg style="position:absolute;left:1080px;top:76px;" width="16" height="16" viewBox="0 0 16 16"><path d="M2 1v8q0 5 5 5h8" stroke="#e33" stroke-width="1.2" fill="none" /><path d="M2 1v5M10 14h5" stroke="#222" stroke-width="1.2" fill="none" /></svg>
<svg style="position:absolute;left:1100px;top:76px;" width="16" height="16" viewBox="0 0 16 16"><path d="M2 14l10-10" stroke="#e33" stroke-width="1.2" fill="none" /><path d="M1 14h5M12 1v5" stroke="#222" stroke-width="1" fill="none" /><path d="M4 14h4M11 6v4" stroke="#33f" stroke-width="1.2" fill="none" /></svg>
<svg style="position:absolute;left:1124px;top:76px;" width="16" height="16" viewBox="0 0 16 16"><path d="M2 14l10-10" stroke="#e33" stroke-width="1.2" fill="none" /><path d="M1 14h5M10 1v5" stroke="#222" stroke-width="1" fill="none" /><path d="M4 14h4" stroke="#33f" stroke-width="1.2" fill="none" /><path d="M12 6l3 2v4" stroke="#33f" stroke-width="1.2" fill="none" /></svg>
<svg style="position:absolute;left:1145px;top:76px;" width="16" height="16" viewBox="0 0 16 16"><path d="M2 13l10-10" stroke="#e33" stroke-width="1.2" fill="none" /><path d="M3 14l10-10" stroke="#33f" stroke-width="1.2" fill="none" /><path d="M12 6l3 2v4" stroke="#33f" stroke-width="1.2" fill="none" /></svg>
<div style="position:absolute;left:1167px;top:75px;width:1px;height:17px;background:#a0a0a0"></div>
<svg style="position:absolute;left:1172px;top:76px;" width="16" height="16" viewBox="0 0 16 16"><path d="M1 9l6-6 6 6M4 14l6-6 5 5" stroke="#bbb" stroke-width="1.2" fill="none" /></svg>
<svg style="position:absolute;left:1194px;top:76px;" width="16" height="16" viewBox="0 0 16 16"><path d="M2 6h5V1M9 1v5h5M2 10h5v5M9 15v-5h5" stroke="#aaa" stroke-width="1.2" fill="none" /></svg>
<div style="position:absolute;left:1217px;top:75px;width:1px;height:17px;background:#a0a0a0"></div>
<svg style="position:absolute;left:1223px;top:76px;" width="16" height="16" viewBox="0 0 16 16"><path d="M3 15V7h10v8z" stroke="#a8a8a8" stroke-width="1.1" fill="#eee" /><path d="M6 7V4h4v3M8 1v6" stroke="#aaa" stroke-width="1.2" fill="none" /></svg>
<svg style="position:absolute;left:1246px;top:76px;" width="16" height="16" viewBox="0 0 16 16"><rect x="1.5" y="2.5" width="5" height="5" fill="none" stroke="#333" stroke-width="1.2" stroke-dasharray="1.5 1.5"/><rect x="8.5" y="9.5" width="6" height="5" fill="none" stroke="#e33" stroke-width="1.2" /><path d="M7 2h3l2 6" stroke="#3d3" stroke-width="1.2" fill="none" /></svg>
<svg style="position:absolute;left:1267px;top:76px;" width="16" height="16" viewBox="0 0 16 16"><path d="M2 14V7h3V3h8v4h2v7z" stroke="#e33" stroke-width="2.5" fill="none" /><rect x="5.5" y="3.5" width="5" height="4" fill="#fff" stroke="#333" stroke-width="1" /><path d="M4 9h8v4H4z" stroke="#333" stroke-width="1" fill="#fff" /><path d="M1 3l3 3" stroke="#ee3" stroke-width="1.2" fill="none" /></svg>
<svg style="position:absolute;left:1289px;top:76px;" width="16" height="16" viewBox="0 0 16 16"><path d="M8 1l3 3h3l2 4-2 4h-3l-3 3-3-3H2l-2-4 2-4h3z" stroke="#333" stroke-width="1" fill="#f6d6d6" /><rect x="6.5" y="3.5" width="3" height="9" fill="#fff" stroke="#e33" stroke-width="1" /><rect x="3" y="7" width="2" height="2" fill="#e33" stroke="none" stroke-width="0" /><rect x="11" y="7" width="2" height="2" fill="#e33" stroke="none" stroke-width="0" /></svg>
<div style="position:absolute;left:1310px;top:71px;width:1px;height:25px;background:#cfcfcf"></div>
<div style="position:absolute;left:10px;top:99px;width:98px;height:24px;background:#fff;border:2px solid #bfbfbf;box-sizing:border-box"></div>
<div style="position:absolute;left:91px;top:101px;width:15px;height:20px;background:#e4e4e4;border-left:1px solid #d2d2d2;box-sizing:border-box"></div>
<svg style="position:absolute;left:95px;top:108.5px;" width="9" height="6" viewBox="0 0 9 6"><path d="M1 1l3.5 3.5L8 1" stroke="#555" stroke-width="1.6" fill="none"/></svg>
<div style="position:absolute;left:16px;top:105.84px;font-size:12px;line-height:12px;color:#000;white-space:nowrap;">Normal Lines</div>
<div style="position:absolute;left:111px;top:99px;width:97px;height:24px;background:#fff;border:2px solid #bfbfbf;box-sizing:border-box"></div>
<div style="position:absolute;left:192px;top:101px;width:14px;height:20px;background:#e4e4e4;border-left:1px solid #d2d2d2;box-sizing:border-box"></div>
<svg style="position:absolute;left:196px;top:108.5px;" width="9" height="6" viewBox="0 0 9 6"><path d="M1 1l3.5 3.5L8 1" stroke="#555" stroke-width="1.6" fill="none"/></svg>
<svg style="position:absolute;left:114px;top:104px;" width="16" height="14" viewBox="0 0 16 14"><ellipse cx="8" cy="7" rx="6.5" ry="3.5" fill="#fff" stroke="#333" stroke-width="1.2" /><circle cx="8" cy="7" r="2.5" fill="#236" stroke="none" stroke-width="0" /></svg>
<svg style="position:absolute;left:131px;top:103px;" width="12" height="14" viewBox="0 0 12 14"><circle cx="6" cy="9" r="3.5" fill="#e8e8e8" stroke="#c8c8c8" stroke-width="1" /><path d="M6 5q0-3 3-3t2 3" stroke="#c8c8c8" stroke-width="1.2" fill="none" /></svg>
<div style="position:absolute;left:147px;top:103px;width:17px;height:17px;background:#000"></div>
<div style="position:absolute;left:171px;top:105.84px;font-size:12px;line-height:12px;color:#000;white-space:nowrap;">0</div>
<div style="position:absolute;left:213px;top:99px;width:95px;height:24px;background:#fff;border:2px solid #bfbfbf;box-sizing:border-box"></div>
<div style="position:absolute;left:291px;top:101px;width:15px;height:20px;background:#e4e4e4;border-left:1px solid #d2d2d2;box-sizing:border-box"></div>
<svg style="position:absolute;left:295px;top:108.5px;" width="9" height="6" viewBox="0 0 9 6"><path d="M1 1l3.5 3.5L8 1" stroke="#555" stroke-width="1.6" fill="none"/></svg>
<div style="position:absolute;left:214px;top:100px;width:77px;height:22px;background:#000"></div>
<div style="position:absolute;left:238px;top:106.84px;font-size:12px;line-height:12px;color:#fff;white-space:nowrap;">Black</div>
<div style="position:absolute;left:311px;top:99px;width:97px;height:24px;background:#fff;border:2px solid #bfbfbf;box-sizing:border-box"></div>
<div style="position:absolute;left:391px;top:101px;width:15px;height:20px;background:#e4e4e4;border-left:1px solid #d2d2d2;box-sizing:border-box"></div>
<svg style="position:absolute;left:395px;top:108.5px;" width="9" height="6" viewBox="0 0 9 6"><path d="M1 1l3.5 3.5L8 1" stroke="#555" stroke-width="1.6" fill="none"/></svg>
<div style="position:absolute;left:315px;top:111.5px;width:74px;height:1.2px;background:#111"></div>
<div style="position:absolute;left:411px;top:99px;width:97px;height:24px;background:#fff;border:2px solid #bfbfbf;box-sizing:border-box"></div>
<div style="position:absolute;left:491px;top:101px;width:15px;height:20px;background:#e4e4e4;border-left:1px solid #d2d2d2;box-sizing:border-box"></div>
<svg style="position:absolute;left:495px;top:108.5px;" width="9" height="6" viewBox="0 0 9 6"><path d="M1 1l3.5 3.5L8 1" stroke="#555" stroke-width="1.6" fill="none"/></svg>
<div style="position:absolute;left:417px;top:104.84px;font-size:12px;line-height:12px;color:#000;white-space:nowrap;">None</div>
<div style="position:absolute;left:511px;top:99px;width:98px;height:24px;background:#fff;border:2px solid #bfbfbf;box-sizing:border-box"></div>
<div style="position:absolute;left:591px;top:101px;width:16px;height:20px;background:#e4e4e4;border-left:1px solid #d2d2d2;box-sizing:border-box"></div>
<svg style="position:absolute;left:595px;top:108.5px;" width="9" height="6" viewBox="0 0 9 6"><path d="M1 1l3.5 3.5L8 1" stroke="#555" stroke-width="1.6" fill="none"/></svg>
<div style="position:absolute;left:514px;top:105.84px;font-size:12px;line-height:12px;color:#000;white-space:nowrap;">0 mm</div>
<div style="position:absolute;left:612px;top:100px;width:1px;height:22px;background:#a0a0a0"></div>
<div style="position:absolute;left:617px;top:99px;width:98px;height:24px;background:#f0f0f0;border:2px solid #bfbfbf;box-sizing:border-box"></div>
<div style="position:absolute;left:697px;top:101px;width:16px;height:20px;background:#e4e4e4;border-left:1px solid #d2d2d2;box-sizing:border-box"></div>
<svg style="position:absolute;left:701px;top:108.5px;" width="9" height="6" viewBox="0 0 9 6"><path d="M1 1l3.5 3.5L8 1" stroke="#b5b5b5" stroke-width="1.6" fill="none"/></svg>
<div style="position:absolute;left:717px;top:99px;width:99px;height:24px;background:#f0f0f0;border:2px solid #bfbfbf;box-sizing:border-box"></div>
<div style="position:absolute;left:797px;top:101px;width:17px;height:20px;background:#e4e4e4;border-left:1px solid #d2d2d2;box-sizing:border-box"></div>
<svg style="position:absolute;left:801px;top:108.5px;" width="9" height="6" viewBox="0 0 9 6"><path d="M1 1l3.5 3.5L8 1" stroke="#b5b5b5" stroke-width="1.6" fill="none"/></svg>
<div style="position:absolute;left:618px;top:100px;width:79px;height:22px;background:#f3f3f3"></div>
<div style="position:absolute;left:718px;top:100px;width:79px;height:22px;background:#f0f0f0"></div>
<div style="position:absolute;left:821px;top:100px;width:2px;height:2px;background:#b4b4b4"></div>
<div style="position:absolute;left:821px;top:104px;width:2px;height:2px;background:#b4b4b4"></div>
<div style="position:absolute;left:821px;top:108px;width:2px;height:2px;background:#b4b4b4"></div>
<div style="position:absolute;left:821px;top:112px;width:2px;height:2px;background:#b4b4b4"></div>
<div style="position:absolute;left:821px;top:116px;width:2px;height:2px;background:#b4b4b4"></div>
<div style="position:absolute;left:821px;top:120px;width:2px;height:2px;background:#b4b4b4"></div>
<svg style="position:absolute;left:830px;top:103px;" width="16" height="16" viewBox="0 0 16 16"><path d="M2 14L14 2" stroke="#777" stroke-width="1" fill="none" stroke-dasharray="1.5 1.5"/><rect x="3.5" y="11.5" width="2" height="2" fill="#fff" stroke="#2b2bff" stroke-width="1"/><rect x="10.5" y="4.5" width="2" height="2" fill="#fff" stroke="#2b2bff" stroke-width="1"/></svg>
<svg style="position:absolute;left:852px;top:103px;" width="16" height="16" viewBox="0 0 16 16"><path d="M1 8h14" stroke="#777" stroke-width="1" fill="none" stroke-dasharray="1.5 1.5"/><rect x="7.5" y="7.5" width="2" height="2" fill="#fff" stroke="#2b2bff" stroke-width="1"/></svg>
<svg style="position:absolute;left:874px;top:103px;" width="16" height="16" viewBox="0 0 16 16"><path d="M8 1v14" stroke="#777" stroke-width="1" fill="none" stroke-dasharray="1.5 1.5"/><rect x="7.5" y="7.5" width="2" height="2" fill="#fff" stroke="#2b2bff" stroke-width="1"/></svg>
<svg style="position:absolute;left:897px;top:103px;" width="16" height="16" viewBox="0 0 16 16"><path d="M2 14L14 2" stroke="#777" stroke-width="1" fill="none" stroke-dasharray="1.5 1.5"/><rect x="5.5" y="5.5" width="2" height="2" fill="#fff" stroke="#2b2bff" stroke-width="1"/><rect x="9.5" y="9.5" width="2" height="2" fill="#fff" stroke="#2b2bff" stroke-width="1"/></svg>
<svg style="position:absolute;left:919px;top:103px;" width="16" height="16" viewBox="0 0 16 16"><path d="M2 14l6-6 6 6M8 8l5-5" stroke="#777" stroke-width="1" fill="none" stroke-dasharray="1.5 1.5"/><rect x="6.5" y="6.5" width="2" height="2" fill="#fff" stroke="#2b2bff" stroke-width="1"/><rect x="12.5" y="12.5" width="2" height="2" fill="#fff" stroke="#2b2bff" stroke-width="1"/></svg>
<svg style="position:absolute;left:940px;top:103px;" width="16" height="16" viewBox="0 0 16 16"><path d="M2 2l12 12M2 14L14 2" stroke="#777" stroke-width="1" fill="none" stroke-dasharray="1.5 1.5"/><rect x="7.5" y="7.5" width="2" height="2" fill="#fff" stroke="#2b2bff" stroke-width="1"/><rect x="12.5" y="2.5" width="2" height="2" fill="#fff" stroke="#222" stroke-width="1"/><rect x="2.5" y="12.5" width="2" height="2" fill="#fff" stroke="#222" stroke-width="1"/></svg>
<svg style="position:absolute;left:962px;top:103px;" width="16" height="16" viewBox="0 0 16 16"><path d="M2 14L14 2" stroke="#333" stroke-width="0.8" fill="none" /><path d="M2 14l2-1-1-1zM14 2l-2 1 1 1z" stroke="#333" stroke-width="1" fill="#333" /><rect x="7.5" y="7.5" width="2" height="2" fill="#fff" stroke="#2b2bff" stroke-width="1"/></svg>
<svg style="position:absolute;left:984px;top:103px;" width="16" height="16" viewBox="0 0 16 16"><path d="M2 14L14 2" stroke="#333" stroke-width="0.8" fill="none" /><rect x="7.5" y="7.5" width="2" height="2" fill="#fff" stroke="#2b2bff" stroke-width="1"/><rect x="5.5" y="2.5" width="2" height="2" fill="#fff" stroke="#2b2bff" stroke-width="1"/><path d="M8 1v3" stroke="#333" stroke-width="1" fill="none" /></svg>
<div style="position:absolute;left:1007px;top:101px;width:1px;height:20px;background:#a0a0a0"></div>
<svg style="position:absolute;left:1013px;top:103px;" width="16" height="16" viewBox="0 0 16 16"><circle cx="8" cy="8" r="6" fill="none" stroke="#777" stroke-width="1" stroke-dasharray="1.5 1.5"/><rect x="7.5" y="7.5" width="2" height="2" fill="#fff" stroke="#2b2bff" stroke-width="1"/><rect x="12.5" y="7.5" width="2" height="2" fill="#fff" stroke="#2b2bff" stroke-width="1"/></svg>
<svg style="position:absolute;left:1035px;top:103px;" width="16" height="16" viewBox="0 0 16 16"><circle cx="8" cy="8" r="6" fill="none" stroke="#777" stroke-width="1" stroke-dasharray="1.5 1.5"/><rect x="2.5" y="4.5" width="2" height="2" fill="#fff" stroke="#2b2bff" stroke-width="1"/><rect x="12.5" y="4.5" width="2" height="2" fill="#fff" stroke="#2b2bff" stroke-width="1"/><rect x="7.5" y="13.5" width="2" height="2" fill="#fff" stroke="#2b2bff" stroke-width="1"/></svg>
<svg style="position:absolute;left:1057px;top:103px;" width="16" height="16" viewBox="0 0 16 16"><circle cx="8" cy="8" r="6" fill="none" stroke="#777" stroke-width="1" stroke-dasharray="1.5 1.5"/><rect x="1.5" y="7.5" width="2" height="2" fill="#fff" stroke="#2b2bff" stroke-width="1"/><rect x="13.5" y="7.5" width="2" height="2" fill="#fff" stroke="#2b2bff" stroke-width="1"/></svg>
<div style="position:absolute;left:1078px;top:101px;width:1px;height:20px;background:#a0a0a0"></div>
<svg style="position:absolute;left:1084px;top:103px;" width="16" height="16" viewBox="0 0 16 16"><circle cx="8" cy="8" r="6.5" fill="none" stroke="#222" stroke-width="1.3" /><path d="M3 13L13 3" stroke="#222" stroke-width="1" fill="none" /><rect x="7.5" y="7.5" width="2" height="2" fill="#fff" stroke="#2b2bff" stroke-width="1"/><path d="M2 3h3M3 2v3M11 13h3M13 11v3" stroke="#222" stroke-width="0.8" fill="none" /></svg>
<div style="position:absolute;left:1107px;top:101px;width:1px;height:20px;background:#a0a0a0"></div>
<svg style="position:absolute;left:1113px;top:103px;" width="16" height="16" viewBox="0 0 16 16"><path d="M2 14L14 2" stroke="#777" stroke-width="1" fill="none" stroke-dasharray="1.5 1.5"/><rect x="4.5" y="10.5" width="2" height="2" fill="#fff" stroke="#2b2bff" stroke-width="1"/><rect x="8.5" y="5.5" width="2" height="2" fill="#fff" stroke="#2b2bff" stroke-width="1"/></svg>
<svg style="position:absolute;left:1134px;top:103px;" width="16" height="16" viewBox="0 0 16 16"><path d="M8 1v14" stroke="#777" stroke-width="1" fill="none" stroke-dasharray="1.5 1.5"/><rect x="7.5" y="11.5" width="2" height="2" fill="#fff" stroke="#2b2bff" stroke-width="1"/></svg>
<svg style="position:absolute;left:1155px;top:103px;" width="16" height="16" viewBox="0 0 16 16"><path d="M1 8h14" stroke="#777" stroke-width="1" fill="none" stroke-dasharray="1.5 1.5"/><rect x="2.5" y="7.5" width="2" height="2" fill="#fff" stroke="#2b2bff" stroke-width="1"/></svg>
<div style="position:absolute;left:1178px;top:97px;width:1px;height:28px;background:#cfcfcf"></div>
<div style="position:absolute;left:0px;top:126px;width:1920px;height:914px;background:#f0f0f0"></div>
<div style="position:absolute;left:26px;top:126px;width:1px;height:827px;background:#a0a0a0"></div>
<div style="position:absolute;left:1px;top:130px;width:2px;height:2px;background:#b8b8b8"></div>
<div style="position:absolute;left:5px;top:130px;width:2px;height:2px;background:#b8b8b8"></div>
<div style="position:absolute;left:9px;top:130px;width:2px;height:2px;background:#b8b8b8"></div>
<div style="position:absolute;left:13px;top:130px;width:2px;height:2px;background:#b8b8b8"></div>
<div style="position:absolute;left:17px;top:130px;width:2px;height:2px;background:#b8b8b8"></div>
<div style="position:absolute;left:21px;top:130px;width:2px;height:2px;background:#b8b8b8"></div>
<div style="position:absolute;left:25px;top:130px;width:2px;height:2px;background:#b8b8b8"></div>
<svg style="position:absolute;left:5px;top:138px;" width="16" height="16" viewBox="0 0 16 16"><path d="M4 1v11l3-3 3 5 2-1-3-5h4z" stroke="#222" stroke-width="1" fill="#fff" /></svg>
<svg style="position:absolute;left:20px;top:152px;" width="5" height="5" viewBox="0 0 5 5"><path d="M5 0V5H0z" fill="#111"/></svg>
<svg style="position:absolute;left:5px;top:162px;" width="16" height="16" viewBox="0 0 16 16"><path d="M1 15L15 1" stroke="#999" stroke-width="0.8" fill="none" stroke-dasharray="1.5 1.5"/><rect x="4.5" y="10.5" width="2" height="2" fill="#fff" stroke="#2b2bff" stroke-width="1"/><rect x="9.5" y="5.5" width="2" height="2" fill="#fff" stroke="#2b2bff" stroke-width="1"/></svg>
<svg style="position:absolute;left:20px;top:176px;" width="5" height="5" viewBox="0 0 5 5"><path d="M5 0V5H0z" fill="#111"/></svg>
<svg style="position:absolute;left:5px;top:183px;" width="16" height="16" viewBox="0 0 16 16"><circle cx="8" cy="8" r="1.6" fill="#555" stroke="none" stroke-width="0" /></svg>
<svg style="position:absolute;left:20px;top:197px;" width="5" height="5" viewBox="0 0 5 5"><path d="M5 0V5H0z" fill="#111"/></svg>
<div style="position:absolute;left:2px;top:202.5px;width:22px;height:21px;background:#c4dcf4;border:1px solid #7db1e6;box-sizing:border-box"></div>
<svg style="position:absolute;left:5px;top:205px;" width="16" height="16" viewBox="0 0 16 16"><path d="M3 13L13 3" stroke="#111" stroke-width="1.1" fill="none" /><rect x="2.5" y="12.5" width="2" height="2" fill="#fff" stroke="#2b2bff" stroke-width="1"/><rect x="12.5" y="2.5" width="2" height="2" fill="#fff" stroke="#2b2bff" stroke-width="1"/></svg>
<svg style="position:absolute;left:20px;top:219px;" width="5" height="5" viewBox="0 0 5 5"><path d="M5 0V5H0z" fill="#111"/></svg>
<svg style="position:absolute;left:5px;top:226px;" width="16" height="16" viewBox="0 0 16 16"><path d="M1 10l8-8M6 15l8-8" stroke="#333" stroke-width="1" fill="none" /><rect x="2.5" y="11.5" width="2" height="2" fill="#fff" stroke="#2b2bff" stroke-width="1"/><rect x="11.5" y="2.5" width="2" height="2" fill="#fff" stroke="#2b2bff" stroke-width="1"/></svg>
<svg style="position:absolute;left:20px;top:239.75px;" width="5" height="5" viewBox="0 0 5 5"><path d="M5 0V5H0z" fill="#111"/></svg>
<svg style="position:absolute;left:5px;top:248px;" width="16" height="16" viewBox="0 0 16 16"><path d="M1 10l8-8M6 15l8-8" stroke="#333" stroke-width="1" fill="none" stroke-dasharray="1.5 1.5"/><path d="M4 12l8-8" stroke="#333" stroke-width="1" fill="none" stroke-dasharray="1.5 1.5"/><rect x="2.5" y="12.5" width="2" height="2" fill="#fff" stroke="#2b2bff" stroke-width="1"/><rect x="11.5" y="2.5" width="2" height="2" fill="#fff" stroke="#2b2bff" stroke-width="1"/></svg>
<svg style="position:absolute;left:20px;top:262px;" width="5" height="5" viewBox="0 0 5 5"><path d="M5 0V5H0z" fill="#111"/></svg>
<svg style="position:absolute;left:5px;top:271px;" width="16" height="16" viewBox="0 0 16 16"><circle cx="8" cy="8" r="6.5" fill="none" stroke="#333" stroke-width="1" /><rect x="7.5" y="7.5" width="2" height="2" fill="#fff" stroke="#2b2bff" stroke-width="1"/><rect x="13.5" y="7.5" width="2" height="2" fill="#fff" stroke="#2b2bff" stroke-width="1"/></svg>
<svg style="position:absolute;left:20px;top:284.75px;" width="5" height="5" viewBox="0 0 5 5"><path d="M5 0V5H0z" fill="#111"/></svg>
<svg style="position:absolute;left:5px;top:293px;" width="16" height="16" viewBox="0 0 16 16"><path d="M2 12q0-10 6-10t6 8" stroke="#333" stroke-width="1" fill="none" /><rect x="1.5" y="11.5" width="2" height="2" fill="#fff" stroke="#2b2bff" stroke-width="1"/><rect x="7.5" y="8.5" width="2" height="2" fill="#fff" stroke="#2b2bff" stroke-width="1"/><rect x="13.5" y="9.5" width="2" height="2" fill="#fff" stroke="#2b2bff" stroke-width="1"/></svg>
<svg style="position:absolute;left:20px;top:307px;" width="5" height="5" viewBox="0 0 5 5"><path d="M5 0V5H0z" fill="#111"/></svg>
<svg style="position:absolute;left:5px;top:316px;" width="16" height="16" viewBox="0 0 16 16"><path d="M2 14q6-16 12 0" stroke="#333" stroke-width="1" fill="none" /><rect x="1.5" y="13.5" width="2" height="2" fill="#fff" stroke="#2b2bff" stroke-width="1"/><rect x="13.5" y="13.5" width="2" height="2" fill="#fff" stroke="#2b2bff" stroke-width="1"/><rect x="2.5" y="1.5" width="2" height="2" fill="#fff" stroke="#2b2bff" stroke-width="1"/><rect x="12.5" y="1.5" width="2" height="2" fill="#fff" stroke="#2b2bff" stroke-width="1"/></svg>
<svg style="position:absolute;left:20px;top:329.75px;" width="5" height="5" viewBox="0 0 5 5"><path d="M5 0V5H0z" fill="#111"/></svg>
<svg style="position:absolute;left:5px;top:338px;" width="16" height="16" viewBox="0 0 16 16"><path d="M2.5 5.5h8v9h-8z" stroke="#222" stroke-width="1.2" fill="#fff" /><path d="M2.5 5.5l3-3h8l-3 3z" stroke="#222" stroke-width="1.2" fill="#ddd" /><path d="M10.5 5.5l3-3v9l-3 3z" stroke="#222" stroke-width="1.2" fill="#ccc" /><rect x="1.5" y="14.5" width="2" height="2" fill="#fff" stroke="#2b2bff" stroke-width="1"/><rect x="13.5" y="1.5" width="2" height="2" fill="#fff" stroke="#2b2bff" stroke-width="1"/><rect x="13.5" y="10.5" width="2" height="2" fill="#fff" stroke="#2b2bff" stroke-width="1"/></svg>
<svg style="position:absolute;left:20px;top:352px;" width="5" height="5" viewBox="0 0 5 5"><path d="M5 0V5H0z" fill="#111"/></svg>
<svg style="position:absolute;left:5px;top:360px;" width="16" height="16" viewBox="0 0 16 16"><path d="M3 5l8-3v10l-8 3z" stroke="#444" stroke-width="1" fill="#999" /><rect x="3.5" y="13.5" width="2" height="2" fill="#fff" stroke="#2b2bff" stroke-width="1"/><rect x="10.5" y="10.5" width="2" height="2" fill="#fff" stroke="#2b2bff" stroke-width="1"/></svg>
<svg style="position:absolute;left:20px;top:373.5px;" width="5" height="5" viewBox="0 0 5 5"><path d="M5 0V5H0z" fill="#111"/></svg>
<svg style="position:absolute;left:5px;top:382px;" width="16" height="16" viewBox="0 0 16 16"><path d="M8 1v14M1 8h14M6 3l2-2 2 2M6 13l2 2 2-2M3 6l-2 2 2 2M13 6l2 2-2 2" stroke="#555" stroke-width="1.1" fill="none" /></svg>
<svg style="position:absolute;left:5px;top:403px;" width="16" height="16" viewBox="0 0 16 16"><text x="8" y="15" font-size="17" font-family="Liberation Sans" font-weight="bold" text-anchor="middle" fill="#444">A</text></svg>
<svg style="position:absolute;left:20px;top:417px;" width="5" height="5" viewBox="0 0 5 5"><path d="M5 0V5H0z" fill="#111"/></svg>
<svg style="position:absolute;left:5px;top:426px;" width="16" height="16" viewBox="0 0 16 16"><rect x="1" y="1" width="8" height="8" fill="#fff" stroke="#e33" stroke-width="1.2" /><rect x="5" y="5" width="10" height="10" fill="#33e" stroke="none" stroke-width="0" /><path d="M8 1q6 0 6 7" stroke="#e33" stroke-width="1.2" fill="none" /><path d="M8 14l6-6" stroke="#e33" stroke-width="1" fill="none" /></svg>
<svg style="position:absolute;left:20px;top:439.75px;" width="5" height="5" viewBox="0 0 5 5"><path d="M5 0V5H0z" fill="#111"/></svg>
<svg style="position:absolute;left:5px;top:446px;" width="16" height="16" viewBox="0 0 16 16"><circle cx="8" cy="8" r="7" fill="#ee3" stroke="#3a3" stroke-width="1.3" /><circle cx="8" cy="8" r="5" fill="#fff" stroke="none" stroke-width="0" /><path d="M5 5l2 2M11 5l-2 2M5 11l2-2M11 11l-2-2M8 4v8M4 8h8" stroke="#33a" stroke-width="1" fill="none" /></svg>
<svg style="position:absolute;left:20px;top:460.5px;" width="5" height="5" viewBox="0 0 5 5"><path d="M5 0V5H0z" fill="#111"/></svg>
<svg style="position:absolute;left:5px;top:470px;" width="16" height="16" viewBox="0 0 16 16"><path d="M3 3q2-2 4 0q2 2-1 2" stroke="#333" stroke-width="1" fill="none" /><path d="M4 14l9-8" stroke="#333" stroke-width="0.8" fill="none" stroke-dasharray="1.5 1.5"/><rect x="3.5" y="13.5" width="2" height="2" fill="#fff" stroke="#2b2bff" stroke-width="1"/><rect x="12.5" y="5.5" width="2" height="2" fill="#fff" stroke="#2b2bff" stroke-width="1"/></svg>
<svg style="position:absolute;left:20px;top:483.5px;" width="5" height="5" viewBox="0 0 5 5"><path d="M5 0V5H0z" fill="#111"/></svg>
<svg style="position:absolute;left:5px;top:491px;" width="16" height="16" viewBox="0 0 16 16"><path d="M2 14L14 2" stroke="#e33" stroke-width="1" fill="none" /><path d="M4 14L14 4" stroke="#333" stroke-width="0.8" fill="none" /><path d="M5 8l3-3M8 11l3-3" stroke="#33f" stroke-width="1.2" fill="none" /></svg>
<svg style="position:absolute;left:20px;top:504.75px;" width="5" height="5" viewBox="0 0 5 5"><path d="M5 0V5H0z" fill="#111"/></svg>
<svg style="position:absolute;left:5px;top:513px;" width="16" height="16" viewBox="0 0 16 16"><path d="M2 9l3-5h7l3 4-3 5H4z" stroke="#aaa" stroke-width="1.2" fill="#ddd" /><circle cx="9" cy="8" r="4" fill="#ccc" stroke="none" stroke-width="0" /></svg>
<svg style="position:absolute;left:20px;top:527.25px;" width="5" height="5" viewBox="0 0 5 5"><path d="M5 0V5H0z" fill="#111"/></svg>
<svg style="position:absolute;left:5px;top:536px;" width="16" height="16" viewBox="0 0 16 16"><path d="M2 4l4-3 5 5-3 4z" stroke="#333" stroke-width="1" fill="#ee3" /><rect x="8.5" y="12.5" width="2" height="2" fill="#fff" stroke="#33a" stroke-width="1"/><rect x="12.5" y="10.5" width="2" height="2" fill="#fff" stroke="#33a" stroke-width="1"/><path d="M5 3l3 3" stroke="#333" stroke-width="1" fill="none" /></svg>
<svg style="position:absolute;left:20px;top:549.75px;" width="5" height="5" viewBox="0 0 5 5"><path d="M5 0V5H0z" fill="#111"/></svg>
<svg style="position:absolute;left:5px;top:563px;" width="16" height="16" viewBox="0 0 16 16"><rect x="3" y="3" width="10" height="10" fill="none" stroke="#999" stroke-width="1.3" /><rect x="1.5" y="1.5" width="3" height="3" fill="#999" stroke="none" stroke-width="0" /><rect x="11.5" y="1.5" width="3" height="3" fill="#999" stroke="none" stroke-width="0" /><rect x="1.5" y="11.5" width="3" height="3" fill="#999" stroke="none" stroke-width="0" /><rect x="11.5" y="11.5" width="3" height="3" fill="#999" stroke="none" stroke-width="0" /></svg>
<svg style="position:absolute;left:20px;top:577.25px;" width="5" height="5" viewBox="0 0 5 5"><path d="M5 0V5H0z" fill="#111"/></svg>
<svg style="position:absolute;left:5px;top:592px;" width="16" height="16" viewBox="0 0 16 16"><rect x="2" y="2" width="9" height="9" fill="none" stroke="#aaa" stroke-width="1.2" /><rect x="4" y="4" width="9" height="9" fill="none" stroke="#aaa" stroke-width="1.2" /><rect x="6" y="6" width="9" height="9" fill="none" stroke="#aaa" stroke-width="1.2" /></svg>
<svg style="position:absolute;left:20px;top:606px;" width="5" height="5" viewBox="0 0 5 5"><path d="M5 0V5H0z" fill="#111"/></svg>
<svg style="position:absolute;left:5px;top:613px;" width="16" height="16" viewBox="0 0 16 16"><path d="M1 15l5-1-4-4zM15 1l-5 1 4 4z" stroke="#bbb" stroke-width="1" fill="#ccc" /><path d="M4 12l8-8" stroke="#ccc" stroke-width="1" fill="none" /></svg>
<svg style="position:absolute;left:20px;top:627.25px;" width="5" height="5" viewBox="0 0 5 5"><path d="M5 0V5H0z" fill="#111"/></svg>
<div style="position:absolute;left:4px;top:381px;width:20px;height:1px;background:#c8c8c8"></div>
<div style="position:absolute;left:4px;top:395px;width:20px;height:1px;background:#c8c8c8"></div>
<div style="position:absolute;left:4px;top:556px;width:20px;height:1px;background:#c8c8c8"></div>
<div style="position:absolute;left:4px;top:584px;width:20px;height:1px;background:#c8c8c8"></div>
<div style="position:absolute;left:0px;top:634px;width:26px;height:1px;background:#d8d8d8"></div>
<div style="position:absolute;left:27px;top:126px;width:1629px;height:15px;background:#f0f0f0"></div>
<div style="position:absolute;left:27px;top:126px;width:1629px;height:1px;background:#d0d0d0"></div>
<div style="position:absolute;left:28px;top:128px;width:13px;height:13px;background:#c7c7bd"></div>
<svg style="position:absolute;left:28px;top:128px;" width="13" height="13" viewBox="0 0 13 13"><path d="M3.5 10.5V1.5M1.5 3.5l2-2 2 2M3.5 10.5h8M9.5 8.5l2 2-2 2" stroke="#111" stroke-width="1" fill="none" /></svg>
<svg style="position:absolute;left:27px;top:126px;overflow:hidden" width="1629" height="16" viewBox="0 0 1629 16"><rect x="25.87" y="13" width="1.2" height="3" fill="#111"/><rect x="39.00" y="3" width="1.2" height="13" fill="#111"/><rect x="52.13" y="13" width="1.2" height="3" fill="#111"/><rect x="65.25" y="13" width="1.2" height="3" fill="#111"/><rect x="78.38" y="13" width="1.2" height="3" fill="#111"/><rect x="91.51" y="13" width="1.2" height="3" fill="#111"/><rect x="104.63" y="11" width="1.2" height="5" fill="#111"/><rect x="117.76" y="13" width="1.2" height="3" fill="#111"/><rect x="130.89" y="13" width="1.2" height="3" fill="#111"/><rect x="144.02" y="13" width="1.2" height="3" fill="#111"/><rect x="157.14" y="13" width="1.2" height="3" fill="#111"/><rect x="170.27" y="3" width="1.2" height="13" fill="#111"/><rect x="183.40" y="13" width="1.2" height="3" fill="#111"/><rect x="196.52" y="13" width="1.2" height="3" fill="#111"/><rect x="209.65" y="13" width="1.2" height="3" fill="#111"/><rect x="222.78" y="13" width="1.2" height="3" fill="#111"/><rect x="235.90" y="11" width="1.2" height="5" fill="#111"/><rect x="249.03" y="13" width="1.2" height="3" fill="#111"/><rect x="262.16" y="13" width="1.2" height="3" fill="#111"/><rect x="275.29" y="13" width="1.2" height="3" fill="#111"/><rect x="288.41" y="13" width="1.2" height="3" fill="#111"/><rect x="301.54" y="3" width="1.2" height="13" fill="#111"/><rect x="314.67" y="13" width="1.2" height="3" fill="#111"/><rect x="327.79" y="13" width="1.2" height="3" fill="#111"/><rect x="340.92" y="13" width="1.2" height="3" fill="#111"/><rect x="354.05" y="13" width="1.2" height="3" fill="#111"/><rect x="367.18" y="11" width="1.2" height="5" fill="#111"/><rect x="380.30" y="13" width="1.2" height="3" fill="#111"/><rect x="393.43" y="13" width="1.2" height="3" fill="#111"/><rect x="406.56" y="13" width="1.2" height="3" fill="#111"/><rect x="419.68" y="13" width="1.2" height="3" fill="#111"/><rect x="432.81" y="3" width="1.2" height="13" fill="#111"/><rect x="445.94" y="13" width="1.2" height="3" fill="#111"/><rect x="459.06" y="13" width="1.2" height="3" fill="#111"/><rect x="472.19" y="13" width="1.2" height="3" fill="#111"/><rect x="485.32" y="13" width="1.2" height="3" fill="#111"/><rect x="498.45" y="11" width="1.2" height="5" fill="#111"/><rect x="511.57" y="13" width="1.2" height="3" fill="#111"/><rect x="524.70" y="13" width="1.2" height="3" fill="#111"/><rect x="537.83" y="13" width="1.2" height="3" fill="#111"/><rect x="550.95" y="13" width="1.2" height="3" fill="#111"/><rect x="564.08" y="3" width="1.2" height="13" fill="#111"/><rect x="577.21" y="13" width="1.2" height="3" fill="#111"/><rect x="590.33" y="13" width="1.2" height="3" fill="#111"/><rect x="603.46" y="13" width="1.2" height="3" fill="#111"/><rect x="616.59" y="13" width="1.2" height="3" fill="#111"/><rect x="629.72" y="11" width="1.2" height="5" fill="#111"/><rect x="642.84" y="13" width="1.2" height="3" fill="#111"/><rect x="655.97" y="13" width="1.2" height="3" fill="#111"/><rect x="669.10" y="13" width="1.2" height="3" fill="#111"/><rect x="682.22" y="13" width="1.2" height="3" fill="#111"/><rect x="695.35" y="3" width="1.2" height="13" fill="#111"/><rect x="708.48" y="13" width="1.2" height="3" fill="#111"/><rect x="721.60" y="13" width="1.2" height="3" fill="#111"/><rect x="734.73" y="13" width="1.2" height="3" fill="#111"/><rect x="747.86" y="13" width="1.2" height="3" fill="#111"/><rect x="760.99" y="11" width="1.2" height="5" fill="#111"/><rect x="774.11" y="13" width="1.2" height="3" fill="#111"/><rect x="787.24" y="13" width="1.2" height="3" fill="#111"/><rect x="800.37" y="13" width="1.2" height="3" fill="#111"/><rect x="813.49" y="13" width="1.2" height="3" fill="#111"/><rect x="826.62" y="3" width="1.2" height="13" fill="#111"/><rect x="839.75" y="13" width="1.2" height="3" fill="#111"/><rect x="852.87" y="13" width="1.2" height="3" fill="#111"/><rect x="866.00" y="13" width="1.2" height="3" fill="#111"/><rect x="879.13" y="13" width="1.2" height="3" fill="#111"/><rect x="892.25" y="11" width="1.2" height="5" fill="#111"/><rect x="905.38" y="13" width="1.2" height="3" fill="#111"/><rect x="918.51" y="13" width="1.2" height="3" fill="#111"/><rect x="931.64" y="13" width="1.2" height="3" fill="#111"/><rect x="944.76" y="13" width="1.2" height="3" fill="#111"/><rect x="957.89" y="3" width="1.2" height="13" fill="#111"/><rect x="971.02" y="13" width="1.2" height="3" fill="#111"/><rect x="984.14" y="13" width="1.2" height="3" fill="#111"/><rect x="997.27" y="13" width="1.2" height="3" fill="#111"/><rect x="1010.40" y="13" width="1.2" height="3" fill="#111"/><rect x="1023.53" y="11" width="1.2" height="5" fill="#111"/><rect x="1036.65" y="13" width="1.2" height="3" fill="#111"/><rect x="1049.78" y="13" width="1.2" height="3" fill="#111"/><rect x="1062.91" y="13" width="1.2" height="3" fill="#111"/><rect x="1076.03" y="13" width="1.2" height="3" fill="#111"/><rect x="1089.16" y="3" width="1.2" height="13" fill="#111"/><rect x="1102.29" y="13" width="1.2" height="3" fill="#111"/><rect x="1115.41" y="13" width="1.2" height="3" fill="#111"/><rect x="1128.54" y="13" width="1.2" height="3" fill="#111"/><rect x="1141.67" y="13" width="1.2" height="3" fill="#111"/><rect x="1154.80" y="11" width="1.2" height="5" fill="#111"/><rect x="1167.92" y="13" width="1.2" height="3" fill="#111"/><rect x="1181.05" y="13" width="1.2" height="3" fill="#111"/><rect x="1194.18" y="13" width="1.2" height="3" fill="#111"/><rect x="1207.30" y="13" width="1.2" height="3" fill="#111"/><rect x="1220.43" y="3" width="1.2" height="13" fill="#111"/><rect x="1233.56" y="13" width="1.2" height="3" fill="#111"/><rect x="1246.68" y="13" width="1.2" height="3" fill="#111"/><rect x="1259.81" y="13" width="1.2" height="3" fill="#111"/><rect x="1272.94" y="13" width="1.2" height="3" fill="#111"/><rect x="1286.07" y="11" width="1.2" height="5" fill="#111"/><rect x="1299.19" y="13" width="1.2" height="3" fill="#111"/><rect x="1312.32" y="13" width="1.2" height="3" fill="#111"/><rect x="1325.45" y="13" width="1.2" height="3" fill="#111"/><rect x="1338.57" y="13" width="1.2" height="3" fill="#111"/><rect x="1351.70" y="3" width="1.2" height="13" fill="#111"/><rect x="1364.83" y="13" width="1.2" height="3" fill="#111"/><rect x="1377.95" y="13" width="1.2" height="3" fill="#111"/><rect x="1391.08" y="13" width="1.2" height="3" fill="#111"/><rect x="1404.21" y="13" width="1.2" height="3" fill="#111"/><rect x="1417.34" y="11" width="1.2" height="5" fill="#111"/><rect x="1430.46" y="13" width="1.2" height="3" fill="#111"/><rect x="1443.59" y="13" width="1.2" height="3" fill="#111"/><rect x="1456.72" y="13" width="1.2" height="3" fill="#111"/><rect x="1469.84" y="13" width="1.2" height="3" fill="#111"/><rect x="1482.97" y="3" width="1.2" height="13" fill="#111"/><rect x="1496.10" y="13" width="1.2" height="3" fill="#111"/><rect x="1509.22" y="13" width="1.2" height="3" fill="#111"/><rect x="1522.35" y="13" width="1.2" height="3" fill="#111"/><rect x="1535.48" y="13" width="1.2" height="3" fill="#111"/><rect x="1548.61" y="11" width="1.2" height="5" fill="#111"/><rect x="1561.73" y="13" width="1.2" height="3" fill="#111"/><rect x="1574.86" y="13" width="1.2" height="3" fill="#111"/><rect x="1587.99" y="13" width="1.2" height="3" fill="#111"/><rect x="1601.11" y="13" width="1.2" height="3" fill="#111"/><rect x="1614.24" y="3" width="1.2" height="13" fill="#111"/><rect x="1627.37" y="13" width="1.2" height="3" fill="#111"/></svg>
<div style="position:absolute;left:68.0px;top:129.16px;font-size:9.5px;line-height:9.5px;color:#111;white-space:nowrap;">200 mm</div>
<div style="position:absolute;left:199.27px;top:129.16px;font-size:9.5px;line-height:9.5px;color:#111;white-space:nowrap;">300 mm</div>
<div style="position:absolute;left:330.54px;top:129.16px;font-size:9.5px;line-height:9.5px;color:#111;white-space:nowrap;">400 mm</div>
<div style="position:absolute;left:461.81000000000006px;top:129.16px;font-size:9.5px;line-height:9.5px;color:#111;white-space:nowrap;">500 mm</div>
<div style="position:absolute;left:593.08px;top:129.16px;font-size:9.5px;line-height:9.5px;color:#111;white-space:nowrap;">600 mm</div>
<div style="position:absolute;left:724.35px;top:129.16px;font-size:9.5px;line-height:9.5px;color:#111;white-space:nowrap;">700 mm</div>
<div style="position:absolute;left:855.6200000000001px;top:129.16px;font-size:9.5px;line-height:9.5px;color:#111;white-space:nowrap;">800 mm</div>
<div style="position:absolute;left:986.8900000000001px;top:129.16px;font-size:9.5px;line-height:9.5px;color:#111;white-space:nowrap;">900 mm</div>
<div style="position:absolute;left:1118.16px;top:129.16px;font-size:9.5px;line-height:9.5px;color:#111;white-space:nowrap;">1000 mm</div>
<div style="position:absolute;left:1249.43px;top:129.16px;font-size:9.5px;line-height:9.5px;color:#111;white-space:nowrap;">1100 mm</div>
<div style="position:absolute;left:1380.7px;top:129.16px;font-size:9.5px;line-height:9.5px;color:#111;white-space:nowrap;">1200 mm</div>
<div style="position:absolute;left:1511.97px;top:129.16px;font-size:9.5px;line-height:9.5px;color:#111;white-space:nowrap;">1300 mm</div>
<div style="position:absolute;left:1643px;top:129px;width:12px;height:12px;overflow:hidden"><div style="position:absolute;left:0;top:0.2px;font-size:9.5px;line-height:9.5px;white-space:nowrap;color:#111">1400 mm</div></div>
<div style="position:absolute;left:1655px;top:126px;width:4px;height:20px;background:#f0f0f0"></div>
<div style="position:absolute;left:27px;top:141px;width:14px;height:811px;background:#f0f0f0"></div>
<svg style="position:absolute;left:27px;top:141px;overflow:hidden" width="14" height="811" viewBox="0 0 14 811"><rect x="12" y="12.92" width="2" height="1.2" fill="#111"/><rect x="12" y="26.04" width="2" height="1.2" fill="#111"/><rect x="12" y="39.16" width="2" height="1.2" fill="#111"/><rect x="12" y="52.28" width="2" height="1.2" fill="#111"/><rect x="2" y="65.40" width="12" height="1.2" fill="#111"/><rect x="12" y="78.52" width="2" height="1.2" fill="#111"/><rect x="12" y="91.64" width="2" height="1.2" fill="#111"/><rect x="12" y="104.76" width="2" height="1.2" fill="#111"/><rect x="12" y="117.88" width="2" height="1.2" fill="#111"/><rect x="9.5" y="131.00" width="4.5" height="1.2" fill="#111"/><rect x="12" y="144.12" width="2" height="1.2" fill="#111"/><rect x="12" y="157.24" width="2" height="1.2" fill="#111"/><rect x="12" y="170.36" width="2" height="1.2" fill="#111"/><rect x="12" y="183.48" width="2" height="1.2" fill="#111"/><rect x="2" y="196.60" width="12" height="1.2" fill="#111"/><rect x="12" y="209.72" width="2" height="1.2" fill="#111"/><rect x="12" y="222.84" width="2" height="1.2" fill="#111"/><rect x="12" y="235.96" width="2" height="1.2" fill="#111"/><rect x="12" y="249.08" width="2" height="1.2" fill="#111"/><rect x="9.5" y="262.20" width="4.5" height="1.2" fill="#111"/><rect x="12" y="275.32" width="2" height="1.2" fill="#111"/><rect x="12" y="288.44" width="2" height="1.2" fill="#111"/><rect x="12" y="301.56" width="2" height="1.2" fill="#111"/><rect x="12" y="314.68" width="2" height="1.2" fill="#111"/><rect x="2" y="327.80" width="12" height="1.2" fill="#111"/><rect x="12" y="340.92" width="2" height="1.2" fill="#111"/><rect x="12" y="354.04" width="2" height="1.2" fill="#111"/><rect x="12" y="367.16" width="2" height="1.2" fill="#111"/><rect x="12" y="380.28" width="2" height="1.2" fill="#111"/><rect x="9.5" y="393.40" width="4.5" height="1.2" fill="#111"/><rect x="12" y="406.52" width="2" height="1.2" fill="#111"/><rect x="12" y="419.64" width="2" height="1.2" fill="#111"/><rect x="12" y="432.76" width="2" height="1.2" fill="#111"/><rect x="12" y="445.88" width="2" height="1.2" fill="#111"/><rect x="2" y="459.00" width="12" height="1.2" fill="#111"/><rect x="12" y="472.12" width="2" height="1.2" fill="#111"/><rect x="12" y="485.24" width="2" height="1.2" fill="#111"/><rect x="12" y="498.36" width="2" height="1.2" fill="#111"/><rect x="12" y="511.48" width="2" height="1.2" fill="#111"/><rect x="9.5" y="524.60" width="4.5" height="1.2" fill="#111"/><rect x="12" y="537.72" width="2" height="1.2" fill="#111"/><rect x="12" y="550.84" width="2" height="1.2" fill="#111"/><rect x="12" y="563.96" width="2" height="1.2" fill="#111"/><rect x="12" y="577.08" width="2" height="1.2" fill="#111"/><rect x="2" y="590.20" width="12" height="1.2" fill="#111"/><rect x="12" y="603.32" width="2" height="1.2" fill="#111"/><rect x="12" y="616.44" width="2" height="1.2" fill="#111"/><rect x="12" y="629.56" width="2" height="1.2" fill="#111"/><rect x="12" y="642.68" width="2" height="1.2" fill="#111"/><rect x="9.5" y="655.80" width="4.5" height="1.2" fill="#111"/><rect x="12" y="668.92" width="2" height="1.2" fill="#111"/><rect x="12" y="682.04" width="2" height="1.2" fill="#111"/><rect x="12" y="695.16" width="2" height="1.2" fill="#111"/><rect x="12" y="708.28" width="2" height="1.2" fill="#111"/><rect x="2" y="721.40" width="12" height="1.2" fill="#111"/><rect x="12" y="734.52" width="2" height="1.2" fill="#111"/><rect x="12" y="747.64" width="2" height="1.2" fill="#111"/><rect x="12" y="760.76" width="2" height="1.2" fill="#111"/><rect x="12" y="773.88" width="2" height="1.2" fill="#111"/><rect x="9.5" y="787.00" width="4.5" height="1.2" fill="#111"/><rect x="12" y="800.12" width="2" height="1.2" fill="#111"/></svg>
<div style="position:absolute;left:30px;top:205.0px;width:0;height:0"><div style="position:absolute;left:0;top:0;transform-origin:0 0;transform:rotate(-90deg);font-size:9.5px;line-height:9.5px;white-space:nowrap;color:#111">300 mm</div></div>
<div style="position:absolute;left:30px;top:336.2px;width:0;height:0"><div style="position:absolute;left:0;top:0;transform-origin:0 0;transform:rotate(-90deg);font-size:9.5px;line-height:9.5px;white-space:nowrap;color:#111">200 mm</div></div>
<div style="position:absolute;left:30px;top:467.4px;width:0;height:0"><div style="position:absolute;left:0;top:0;transform-origin:0 0;transform:rotate(-90deg);font-size:9.5px;line-height:9.5px;white-space:nowrap;color:#111">100 mm</div></div>
<div style="position:absolute;left:30px;top:598.5999999999999px;width:0;height:0"><div style="position:absolute;left:0;top:0;transform-origin:0 0;transform:rotate(-90deg);font-size:9.5px;line-height:9.5px;white-space:nowrap;color:#111">0 mm</div></div>
<div style="position:absolute;left:30px;top:729.8px;width:0;height:0"><div style="position:absolute;left:0;top:0;transform-origin:0 0;transform:rotate(-90deg);font-size:9.5px;line-height:9.5px;white-space:nowrap;color:#111">-100 mm</div></div>
<div style="position:absolute;left:30px;top:861.0px;width:0;height:0"><div style="position:absolute;left:0;top:0;transform-origin:0 0;transform:rotate(-90deg);font-size:9.5px;line-height:9.5px;white-space:nowrap;color:#111">-200 mm</div></div>
<div style="position:absolute;left:27px;top:381.5px;width:14px;height:1px;background:#e040e0"></div>
<div style="position:absolute;left:26px;top:126px;width:1px;height:16px;background:#d040d0"></div>
<div style="position:absolute;left:821.5px;top:126px;width:1px;height:15px;background:#e040e0"></div>
<div style="position:absolute;left:41px;top:141px;width:1596px;height:3px;background:#a0a0a0"></div>
<div style="position:absolute;left:41px;top:141px;width:3px;height:811px;background:#a0a0a0"></div>
<div style="position:absolute;left:44px;top:144px;width:1593px;height:807px;background:#fff"></div>
<svg style="position:absolute;left:44px;top:144px;overflow:hidden" width="1593" height="807" viewBox="0 0 1593 807"><g transform="translate(-44,-144)" shape-rendering="crispEdges" stroke-width="1"><text x="184" y="164.7" font-size="15" font-family="Liberation Sans" fill="#000">R2-3, 5-7</text><text x="456" y="164.7" font-size="15" font-family="Liberation Sans" fill="#000">R8,10-14</text><text x="680" y="164.7" font-size="15" font-family="Liberation Sans" fill="#000">R15-20</text><text x="858" y="164.7" font-size="15" font-family="Liberation Sans" fill="#000">R21-27</text><rect x="184.5" y="171.5" width="1313" height="131" stroke="#000" stroke-width="1" fill="none"/><path d="M187.5 191.5 L191.5 191.5 L191.5 187.5 L187.5 188.5 L187.5 186.5 L187.5 186.5 L191.5 185.5 L195.5 183.5 L199.5 182.5 L203.5 181.5 L207.5 180.5 L211.5 179.5 L215.5 179.5 L219.5 178.5 L223.5 177.5 L227.5 177.5 L231.5 176.5 L235.5 175.5 L239.5 175.5 L243.5 175.5 L247.5 174.5 L251.5 174.5 L255.5 174.5 L256.5 174.5 L256.5 176.5 L259.5 176.5 L263.5 176.5 L266.5 176.5 L266.5 174.5 L267.5 174.5 L271.5 174.5 L275.5 174.5 L279.5 174.5 L282.5 174.5 L286.5 174.5 L290.5 174.5 L294.5 174.5 L298.5 174.5 L302.5 175.5 L306.5 175.5 L310.5 175.5 L314.5 175.5 L318.5 176.5 L322.5 176.5 L326.5 176.5 L330.5 177.5 L334.5 177.5 L338.5 178.5 L342.5 178.5 L346.5 178.5 L350.5 179.5 L354.5 179.5 L358.5 179.5 L362.5 180.5 L366.5 180.5 L369.5 181.5 L369.5 174.5 L383.5 174.5 L383.5 182.5 L386.5 183.5 L390.5 183.5 L394.5 184.5 L398.5 185.5 L402.5 185.5 L406.5 186.5 L410.5 186.5 L414.5 187.5 L418.5 188.5 L422.5 188.5 L426.5 189.5 L426.5 189.5 L422.5 190.5 L418.5 190.5 L414.5 190.5 L410.5 190.5 L406.5 190.5 L402.5 190.5 L398.5 191.5 L394.5 191.5 L390.5 191.5 L386.5 191.5 L383.5 191.5 L382.5 191.5 L378.5 191.5 L374.5 191.5 L370.5 192.5 L369.5 192.5 L366.5 192.5 L362.5 192.5 L358.5 192.5 L354.5 192.5 L350.5 192.5 L346.5 193.5 L342.5 193.5 L338.5 193.5 L334.5 193.5 L330.5 193.5 L326.5 193.5 L322.5 193.5 L318.5 194.5 L314.5 194.5 L310.5 194.5 L306.5 194.5 L302.5 194.5 L298.5 194.5 L294.5 195.5 L290.5 195.5 L286.5 195.5 L283.5 195.5 L279.5 195.5 L275.5 195.5 L271.5 196.5 L267.5 196.5 L266.5 196.5 L266.5 193.5 L256.5 193.5 L256.5 196.5 L255.5 196.5 L251.5 196.5 L247.5 196.5 L243.5 196.5 L239.5 196.5 L235.5 196.5 L231.5 196.5 L227.5 195.5 L223.5 195.5 L219.5 195.5 L215.5 195.5 L211.5 195.5 L207.5 194.5 L203.5 194.5 L199.5 194.5 L195.5 194.5 L191.5 193.5 L187.5 193.5 L187.5 193.5Z M369.5 181.5 L370.5 181.5 L374.5 181.5 L378.5 182.5 L382.5 182.5 L383.5 182.5" stroke="#000" stroke-width="1.0" fill="none"/><ellipse cx="261.49" cy="184.67" rx="7.3" ry="7.3" stroke="#0000ff" stroke-width="1.1" fill="none"/><ellipse cx="288.97" cy="184.66" rx="15.3" ry="6.1" stroke="#0000ff" stroke-width="1.1" fill="none"/><path d="M188.5 214.5 L192.5 214.5 L192.5 210.5 L187.5 211.5 L187.5 209.5 L187.5 209.5 L191.5 208.5 L195.5 206.5 L199.5 205.5 L203.5 204.5 L207.5 203.5 L211.5 202.5 L215.5 202.5 L219.5 201.5 L223.5 200.5 L227.5 200.5 L231.5 199.5 L235.5 199.5 L239.5 198.5 L243.5 198.5 L247.5 198.5 L251.5 197.5 L254.5 197.5 L256.5 197.5 L256.5 199.5 L258.5 199.5 L262.5 199.5 L266.5 199.5 L265.5 197.5 L266.5 197.5 L270.5 197.5 L274.5 197.5 L278.5 197.5 L282.5 197.5 L286.5 197.5 L290.5 197.5 L294.5 198.5 L298.5 198.5 L302.5 198.5 L306.5 198.5 L310.5 198.5 L314.5 199.5 L318.5 199.5 L321.5 199.5 L325.5 200.5 L329.5 200.5 L333.5 200.5 L337.5 201.5 L341.5 201.5 L345.5 201.5 L349.5 202.5 L353.5 202.5 L357.5 203.5 L361.5 203.5 L365.5 203.5 L367.5 204.5 L367.5 197.5 L381.5 197.5 L381.5 205.5 L384.5 206.5 L388.5 206.5 L392.5 207.5 L396.5 208.5 L400.5 208.5 L404.5 209.5 L408.5 209.5 L412.5 210.5 L416.5 211.5 L420.5 211.5 L424.5 212.5 L424.5 212.5 L420.5 212.5 L416.5 213.5 L412.5 213.5 L408.5 213.5 L404.5 213.5 L400.5 213.5 L396.5 213.5 L392.5 214.5 L388.5 214.5 L385.5 214.5 L381.5 214.5 L381.5 214.5 L377.5 214.5 L373.5 214.5 L369.5 215.5 L367.5 215.5 L365.5 215.5 L361.5 215.5 L357.5 215.5 L353.5 215.5 L349.5 215.5 L345.5 215.5 L341.5 216.5 L337.5 216.5 L333.5 216.5 L329.5 216.5 L325.5 216.5 L321.5 216.5 L318.5 217.5 L314.5 217.5 L310.5 217.5 L306.5 217.5 L302.5 217.5 L298.5 217.5 L294.5 218.5 L290.5 218.5 L286.5 218.5 L282.5 218.5 L278.5 218.5 L274.5 218.5 L270.5 218.5 L266.5 219.5 L266.5 219.5 L266.5 216.5 L256.5 216.5 L256.5 219.5 L254.5 219.5 L251.5 219.5 L247.5 219.5 L243.5 219.5 L239.5 219.5 L235.5 218.5 L231.5 218.5 L227.5 218.5 L223.5 218.5 L219.5 218.5 L215.5 218.5 L211.5 217.5 L207.5 217.5 L203.5 217.5 L199.5 217.5 L195.5 217.5 L191.5 216.5 L188.5 216.5 L188.5 216.5Z M367.5 204.5 L369.5 204.5 L373.5 204.5 L377.5 205.5 L381.5 205.5 L381.5 205.5" stroke="#000" stroke-width="1.0" fill="none"/><ellipse cx="261.28" cy="207.64" rx="7.3" ry="7.3" stroke="#0000ff" stroke-width="1.1" fill="none"/><ellipse cx="288.47" cy="207.62" rx="15.3" ry="6.1" stroke="#0000ff" stroke-width="1.1" fill="none"/><path d="M187.5 237.5 L192.5 237.5 L192.5 233.5 L188.5 233.5 L188.5 232.5 L188.5 232.5 L191.5 230.5 L195.5 229.5 L199.5 228.5 L203.5 227.5 L207.5 226.5 L211.5 225.5 L214.5 225.5 L218.5 224.5 L222.5 223.5 L226.5 223.5 L230.5 222.5 L234.5 222.5 L238.5 221.5 L241.5 221.5 L245.5 221.5 L249.5 220.5 L253.5 220.5 L254.5 220.5 L254.5 222.5 L257.5 222.5 L261.5 222.5 L264.5 222.5 L264.5 220.5 L264.5 220.5 L268.5 220.5 L272.5 220.5 L276.5 220.5 L280.5 220.5 L284.5 220.5 L287.5 220.5 L291.5 221.5 L295.5 221.5 L299.5 221.5 L303.5 221.5 L307.5 221.5 L311.5 222.5 L314.5 222.5 L318.5 222.5 L322.5 223.5 L326.5 223.5 L330.5 223.5 L334.5 224.5 L337.5 224.5 L341.5 224.5 L345.5 225.5 L349.5 225.5 L353.5 226.5 L357.5 226.5 L361.5 227.5 L363.5 227.5 L363.5 220.5 L377.5 220.5 L377.5 229.5 L380.5 229.5 L384.5 230.5 L387.5 230.5 L391.5 231.5 L395.5 231.5 L399.5 232.5 L403.5 232.5 L407.5 233.5 L411.5 234.5 L414.5 234.5 L418.5 235.5 L418.5 235.5 L414.5 236.5 L411.5 236.5 L407.5 236.5 L403.5 236.5 L399.5 236.5 L395.5 236.5 L391.5 236.5 L387.5 237.5 L384.5 237.5 L380.5 237.5 L377.5 237.5 L376.5 237.5 L372.5 237.5 L368.5 237.5 L364.5 237.5 L363.5 238.5 L361.5 238.5 L357.5 238.5 L353.5 238.5 L349.5 238.5 L345.5 238.5 L341.5 238.5 L337.5 238.5 L334.5 239.5 L330.5 239.5 L326.5 239.5 L322.5 239.5 L318.5 239.5 L314.5 239.5 L311.5 240.5 L307.5 240.5 L303.5 240.5 L299.5 240.5 L295.5 240.5 L291.5 240.5 L287.5 240.5 L284.5 241.5 L280.5 241.5 L276.5 241.5 L272.5 241.5 L268.5 241.5 L264.5 241.5 L264.5 241.5 L264.5 238.5 L254.5 238.5 L254.5 241.5 L253.5 241.5 L249.5 241.5 L245.5 241.5 L241.5 241.5 L237.5 241.5 L234.5 241.5 L230.5 241.5 L226.5 241.5 L222.5 241.5 L218.5 241.5 L214.5 240.5 L211.5 240.5 L207.5 240.5 L203.5 240.5 L199.5 239.5 L195.5 239.5 L191.5 239.5 L187.5 239.5 L187.5 239.5Z M363.5 227.5 L364.5 227.5 L368.5 227.5 L372.5 228.5 L376.5 228.5 L377.5 229.5" stroke="#000" stroke-width="1.0" fill="none"/><ellipse cx="282.59" cy="231.92" rx="14.2" ry="5.8" stroke="#000" stroke-width="1.1" fill="none"/><path d="M187.5 260.5 L192.5 260.5 L192.5 256.5 L188.5 256.5 L188.5 254.5 L188.5 254.5 L191.5 253.5 L195.5 252.5 L199.5 251.5 L203.5 250.5 L207.5 249.5 L210.5 248.5 L214.5 248.5 L218.5 247.5 L222.5 246.5 L226.5 246.5 L229.5 245.5 L233.5 245.5 L237.5 244.5 L241.5 244.5 L245.5 244.5 L249.5 244.5 L252.5 243.5 L254.5 243.5 L254.5 245.5 L256.5 245.5 L260.5 245.5 L263.5 245.5 L263.5 243.5 L264.5 243.5 L268.5 243.5 L271.5 243.5 L275.5 243.5 L279.5 243.5 L283.5 243.5 L287.5 244.5 L290.5 244.5 L294.5 244.5 L298.5 244.5 L302.5 244.5 L306.5 245.5 L309.5 245.5 L313.5 245.5 L317.5 246.5 L321.5 246.5 L325.5 246.5 L329.5 247.5 L332.5 247.5 L336.5 247.5 L340.5 248.5 L344.5 248.5 L348.5 248.5 L351.5 249.5 L355.5 249.5 L359.5 250.5 L361.5 250.5 L361.5 243.5 L375.5 243.5 L375.5 252.5 L378.5 252.5 L382.5 253.5 L386.5 253.5 L390.5 254.5 L393.5 254.5 L397.5 255.5 L401.5 256.5 L405.5 256.5 L409.5 257.5 L412.5 257.5 L416.5 258.5 L416.5 258.5 L412.5 259.5 L409.5 259.5 L405.5 259.5 L401.5 259.5 L397.5 259.5 L393.5 259.5 L390.5 259.5 L386.5 260.5 L382.5 260.5 L378.5 260.5 L375.5 260.5 L374.5 260.5 L370.5 260.5 L367.5 260.5 L363.5 260.5 L361.5 260.5 L359.5 261.5 L355.5 261.5 L351.5 261.5 L348.5 261.5 L344.5 261.5 L340.5 261.5 L336.5 261.5 L332.5 262.5 L329.5 262.5 L325.5 262.5 L321.5 262.5 L317.5 262.5 L313.5 262.5 L309.5 262.5 L306.5 263.5 L302.5 263.5 L298.5 263.5 L294.5 263.5 L290.5 263.5 L287.5 263.5 L283.5 263.5 L279.5 264.5 L275.5 264.5 L271.5 264.5 L268.5 264.5 L264.5 264.5 L263.5 264.5 L263.5 261.5 L254.5 261.5 L254.5 264.5 L252.5 264.5 L248.5 264.5 L245.5 264.5 L241.5 264.5 L237.5 264.5 L233.5 264.5 L229.5 264.5 L226.5 264.5 L222.5 264.5 L218.5 263.5 L214.5 263.5 L210.5 263.5 L207.5 263.5 L203.5 262.5 L199.5 262.5 L195.5 262.5 L191.5 262.5 L187.5 262.5 L187.5 262.5Z M361.5 250.5 L363.5 250.5 L367.5 251.5 L370.5 251.5 L374.5 252.5 L375.5 252.5" stroke="#000" stroke-width="1.0" fill="none"/><ellipse cx="281.77" cy="254.86" rx="14.2" ry="5.8" stroke="#000" stroke-width="1.1" fill="none"/><path d="M188.5 282.5 L193.5 282.5 L193.5 278.5 L189.5 278.5 L189.5 277.5 L189.5 277.5 L192.5 276.5 L196.5 274.5 L200.5 273.5 L204.5 273.5 L207.5 272.5 L211.5 271.5 L215.5 270.5 L219.5 269.5 L222.5 269.5 L226.5 268.5 L230.5 268.5 L234.5 267.5 L237.5 267.5 L241.5 266.5 L245.5 266.5 L249.5 266.5 L252.5 266.5 L254.5 266.5 L254.5 268.5 L256.5 268.5 L260.5 268.5 L263.5 268.5 L263.5 266.5 L264.5 266.5 L268.5 266.5 L271.5 266.5 L275.5 266.5 L279.5 266.5 L283.5 266.5 L286.5 266.5 L290.5 266.5 L294.5 266.5 L298.5 266.5 L301.5 267.5 L305.5 267.5 L309.5 267.5 L313.5 268.5 L316.5 268.5 L320.5 268.5 L324.5 269.5 L328.5 269.5 L331.5 269.5 L335.5 270.5 L339.5 270.5 L343.5 270.5 L347.5 271.5 L350.5 271.5 L354.5 272.5 L358.5 272.5 L360.5 272.5 L360.5 266.5 L374.5 266.5 L374.5 274.5 L377.5 274.5 L380.5 275.5 L384.5 275.5 L388.5 276.5 L392.5 276.5 L395.5 277.5 L399.5 278.5 L403.5 278.5 L407.5 279.5 L410.5 279.5 L414.5 280.5 L414.5 281.5 L410.5 281.5 L407.5 281.5 L403.5 281.5 L399.5 281.5 L395.5 281.5 L392.5 281.5 L388.5 282.5 L384.5 282.5 L380.5 282.5 L377.5 282.5 L374.5 282.5 L373.5 282.5 L369.5 282.5 L365.5 282.5 L362.5 283.5 L360.5 283.5 L358.5 283.5 L354.5 283.5 L350.5 283.5 L346.5 283.5 L343.5 283.5 L339.5 283.5 L335.5 283.5 L331.5 284.5 L328.5 284.5 L324.5 284.5 L320.5 284.5 L316.5 284.5 L313.5 284.5 L309.5 284.5 L305.5 285.5 L301.5 285.5 L298.5 285.5 L294.5 285.5 L290.5 285.5 L286.5 285.5 L283.5 285.5 L279.5 286.5 L275.5 286.5 L271.5 286.5 L267.5 286.5 L264.5 286.5 L263.5 286.5 L263.5 283.5 L254.5 283.5 L254.5 286.5 L252.5 286.5 L249.5 286.5 L245.5 286.5 L241.5 286.5 L237.5 286.5 L234.5 286.5 L230.5 286.5 L226.5 286.5 L222.5 286.5 L219.5 286.5 L215.5 285.5 L211.5 285.5 L207.5 285.5 L204.5 284.5 L200.5 284.5 L196.5 284.5 L192.5 284.5 L188.5 284.5 L188.5 284.5Z M360.5 272.5 L362.5 272.5 L365.5 273.5 L369.5 273.5 L373.5 274.5 L374.5 274.5" stroke="#000" stroke-width="1.0" fill="none"/><ellipse cx="281.54" cy="277.02" rx="14.2" ry="5.8" stroke="#000" stroke-width="1.1" fill="none"/><path d="M192.5 291.5 L192.5 296.5 L214.5 295.5 Z" stroke="#f00" stroke-width="1.0" fill="none"/><path d="M220.5 290.5 L221.5 298.5 L265.5 297.5 Z" stroke="#f00" stroke-width="1.0" fill="none"/><path d="M610.5 178.5 L606.5 178.5 L606.5 182.5 L610.5 182.5 L610.5 184.5 L610.5 184.5 L606.5 185.5 L602.5 186.5 L599.5 186.5 L595.5 187.5 L591.5 188.5 L588.5 189.5 L584.5 190.5 L580.5 190.5 L576.5 191.5 L573.5 191.5 L569.5 192.5 L565.5 192.5 L562.5 193.5 L558.5 193.5 L554.5 193.5 L550.5 193.5 L547.5 193.5 L545.5 193.5 L545.5 191.5 L543.5 191.5 L539.5 191.5 L536.5 191.5 L535.5 191.5 L535.5 193.5 L532.5 193.5 L528.5 193.5 L525.5 193.5 L521.5 193.5 L517.5 193.5 L513.5 193.5 L510.5 193.5 L506.5 192.5 L502.5 192.5 L499.5 192.5 L495.5 192.5 L491.5 191.5 L487.5 191.5 L484.5 191.5 L480.5 191.5 L476.5 190.5 L473.5 190.5 L469.5 189.5 L465.5 189.5 L462.5 189.5 L458.5 188.5 L454.5 188.5 L450.5 188.5 L447.5 187.5 L443.5 187.5 L443.5 192.5 L430.5 192.5 L430.5 185.5 L428.5 185.5 L425.5 185.5 L421.5 184.5 L417.5 184.5 L413.5 183.5 L410.5 182.5 L406.5 182.5 L402.5 181.5 L399.5 181.5 L395.5 180.5 L391.5 180.5 L387.5 179.5 L388.5 179.5 L391.5 178.5 L395.5 178.5 L399.5 178.5 L402.5 178.5 L406.5 178.5 L410.5 178.5 L413.5 178.5 L417.5 178.5 L421.5 178.5 L425.5 178.5 L428.5 177.5 L430.5 177.5 L432.5 177.5 L436.5 177.5 L439.5 177.5 L443.5 177.5 L447.5 177.5 L451.5 177.5 L454.5 177.5 L458.5 177.5 L462.5 176.5 L465.5 176.5 L469.5 176.5 L473.5 176.5 L476.5 176.5 L480.5 176.5 L484.5 176.5 L488.5 176.5 L491.5 176.5 L495.5 176.5 L499.5 175.5 L502.5 175.5 L506.5 175.5 L510.5 175.5 L514.5 175.5 L517.5 175.5 L521.5 175.5 L525.5 175.5 L528.5 175.5 L532.5 174.5 L535.5 174.5 L535.5 177.5 L545.5 177.5 L545.5 174.5 L547.5 174.5 L551.5 174.5 L554.5 174.5 L558.5 175.5 L562.5 175.5 L565.5 175.5 L569.5 175.5 L573.5 175.5 L577.5 175.5 L580.5 175.5 L584.5 175.5 L588.5 176.5 L591.5 176.5 L595.5 176.5 L599.5 177.5 L603.5 177.5 L606.5 177.5 L610.5 177.5 L610.5 177.5Z M443.5 187.5 L439.5 186.5 L436.5 186.5 L432.5 186.5 L430.5 185.5" stroke="#000" stroke-width="1.0" fill="none"/><ellipse cx="520.30" cy="184.41" rx="13" ry="5.3" stroke="#000" stroke-width="1.1" fill="none"/><path d="M602.5 200.5 L598.5 199.5 L598.5 203.5 L602.5 203.5 L602.5 205.5 L602.5 205.5 L598.5 206.5 L595.5 207.5 L591.5 208.5 L587.5 208.5 L584.5 209.5 L580.5 210.5 L577.5 211.5 L573.5 211.5 L569.5 212.5 L566.5 212.5 L562.5 213.5 L559.5 213.5 L555.5 214.5 L551.5 214.5 L548.5 214.5 L544.5 214.5 L540.5 214.5 L539.5 215.5 L539.5 213.5 L537.5 213.5 L533.5 213.5 L530.5 213.5 L529.5 213.5 L529.5 215.5 L526.5 215.5 L522.5 215.5 L519.5 215.5 L515.5 215.5 L512.5 214.5 L508.5 214.5 L504.5 214.5 L501.5 214.5 L497.5 214.5 L494.5 214.5 L490.5 213.5 L486.5 213.5 L483.5 213.5 L479.5 212.5 L476.5 212.5 L472.5 212.5 L468.5 212.5 L465.5 211.5 L461.5 211.5 L458.5 211.5 L454.5 210.5 L450.5 210.5 L447.5 209.5 L443.5 209.5 L440.5 209.5 L440.5 214.5 L427.5 214.5 L427.5 207.5 L425.5 207.5 L422.5 207.5 L418.5 206.5 L414.5 206.5 L411.5 205.5 L407.5 205.5 L404.5 204.5 L400.5 203.5 L396.5 203.5 L393.5 202.5 L389.5 202.5 L385.5 201.5 L386.5 201.5 L389.5 201.5 L393.5 201.5 L396.5 200.5 L400.5 200.5 L404.5 200.5 L407.5 200.5 L411.5 200.5 L414.5 200.5 L418.5 200.5 L422.5 200.5 L425.5 199.5 L427.5 199.5 L429.5 199.5 L432.5 199.5 L436.5 199.5 L440.5 199.5 L443.5 199.5 L447.5 199.5 L450.5 199.5 L454.5 198.5 L458.5 198.5 L461.5 198.5 L465.5 198.5 L468.5 198.5 L472.5 198.5 L476.5 198.5 L479.5 198.5 L483.5 198.5 L486.5 197.5 L490.5 197.5 L494.5 197.5 L497.5 197.5 L501.5 197.5 L504.5 197.5 L508.5 197.5 L512.5 197.5 L515.5 196.5 L519.5 196.5 L523.5 196.5 L526.5 196.5 L529.5 196.5 L529.5 199.5 L539.5 199.5 L539.5 196.5 L541.5 196.5 L544.5 196.5 L548.5 196.5 L551.5 196.5 L555.5 196.5 L559.5 196.5 L562.5 196.5 L566.5 196.5 L569.5 196.5 L573.5 197.5 L577.5 197.5 L580.5 197.5 L584.5 197.5 L587.5 198.5 L591.5 198.5 L595.5 198.5 L598.5 198.5 L602.5 198.5 L602.5 198.5Z M440.5 209.5 L436.5 208.5 L432.5 208.5 L429.5 208.5 L427.5 207.5" stroke="#000" stroke-width="1.0" fill="none"/><ellipse cx="514.68" cy="206.02" rx="13" ry="5.3" stroke="#000" stroke-width="1.1" fill="none"/><path d="M593.5 221.5 L589.5 221.5 L589.5 225.5 L593.5 225.5 L593.5 227.5 L593.5 227.5 L589.5 227.5 L586.5 228.5 L582.5 229.5 L579.5 230.5 L575.5 231.5 L572.5 232.5 L568.5 232.5 L565.5 233.5 L561.5 234.5 L557.5 234.5 L554.5 234.5 L550.5 235.5 L547.5 235.5 L543.5 236.5 L540.5 236.5 L536.5 236.5 L533.5 236.5 L531.5 236.5 L531.5 234.5 L529.5 234.5 L525.5 234.5 L522.5 234.5 L521.5 234.5 L521.5 236.5 L518.5 236.5 L515.5 236.5 L511.5 236.5 L508.5 236.5 L504.5 236.5 L500.5 236.5 L497.5 236.5 L493.5 236.5 L490.5 236.5 L486.5 235.5 L483.5 235.5 L479.5 235.5 L476.5 235.5 L472.5 234.5 L468.5 234.5 L465.5 234.5 L461.5 233.5 L458.5 233.5 L454.5 233.5 L451.5 232.5 L447.5 232.5 L444.5 232.5 L440.5 231.5 L436.5 231.5 L433.5 231.5 L433.5 236.5 L420.5 236.5 L420.5 229.5 L419.5 229.5 L415.5 229.5 L412.5 228.5 L408.5 228.5 L404.5 227.5 L401.5 227.5 L397.5 226.5 L394.5 226.5 L390.5 225.5 L387.5 224.5 L383.5 224.5 L380.5 223.5 L380.5 223.5 L383.5 223.5 L387.5 223.5 L390.5 223.5 L394.5 222.5 L397.5 222.5 L401.5 222.5 L404.5 222.5 L408.5 222.5 L412.5 222.5 L415.5 222.5 L419.5 222.5 L420.5 221.5 L422.5 221.5 L426.5 221.5 L429.5 221.5 L433.5 221.5 L436.5 221.5 L440.5 221.5 L444.5 221.5 L447.5 220.5 L451.5 220.5 L454.5 220.5 L458.5 220.5 L461.5 220.5 L465.5 220.5 L468.5 220.5 L472.5 220.5 L476.5 219.5 L479.5 219.5 L483.5 219.5 L486.5 219.5 L490.5 219.5 L493.5 219.5 L497.5 219.5 L500.5 218.5 L504.5 218.5 L508.5 218.5 L511.5 218.5 L515.5 218.5 L518.5 218.5 L521.5 218.5 L521.5 221.5 L531.5 220.5 L531.5 217.5 L533.5 218.5 L536.5 218.5 L540.5 218.5 L543.5 218.5 L547.5 218.5 L550.5 218.5 L554.5 218.5 L557.5 218.5 L561.5 218.5 L565.5 218.5 L568.5 218.5 L572.5 219.5 L575.5 219.5 L579.5 219.5 L582.5 219.5 L586.5 219.5 L589.5 219.5 L593.5 219.5 L593.5 219.5Z M433.5 231.5 L429.5 230.5 L426.5 230.5 L422.5 229.5 L420.5 229.5" stroke="#000" stroke-width="1.0" fill="none"/><ellipse cx="507.03" cy="227.80" rx="13" ry="5.3" stroke="#000" stroke-width="1.1" fill="none"/><path d="M589.5 244.5 L585.5 243.5 L585.5 247.5 L589.5 247.5 L589.5 249.5 L589.5 249.5 L585.5 250.5 L582.5 251.5 L578.5 252.5 L575.5 252.5 L571.5 253.5 L568.5 254.5 L564.5 255.5 L561.5 255.5 L557.5 256.5 L554.5 256.5 L550.5 257.5 L547.5 257.5 L543.5 258.5 L540.5 258.5 L536.5 258.5 L533.5 258.5 L529.5 258.5 L528.5 258.5 L528.5 256.5 L526.5 256.5 L522.5 256.5 L519.5 256.5 L519.5 256.5 L519.5 258.5 L515.5 258.5 L512.5 258.5 L508.5 258.5 L505.5 258.5 L501.5 258.5 L498.5 258.5 L494.5 258.5 L491.5 258.5 L487.5 258.5 L484.5 258.5 L480.5 257.5 L477.5 257.5 L473.5 257.5 L470.5 257.5 L466.5 256.5 L463.5 256.5 L459.5 256.5 L456.5 255.5 L452.5 255.5 L449.5 255.5 L445.5 254.5 L442.5 254.5 L438.5 254.5 L435.5 253.5 L431.5 253.5 L431.5 258.5 L419.5 258.5 L419.5 251.5 L417.5 251.5 L414.5 251.5 L410.5 250.5 L407.5 250.5 L403.5 249.5 L400.5 249.5 L396.5 248.5 L393.5 248.5 L389.5 247.5 L386.5 247.5 L382.5 246.5 L379.5 246.5 L379.5 245.5 L382.5 245.5 L386.5 245.5 L389.5 245.5 L393.5 245.5 L396.5 245.5 L400.5 245.5 L403.5 244.5 L407.5 244.5 L410.5 244.5 L414.5 244.5 L417.5 244.5 L419.5 244.5 L421.5 244.5 L424.5 244.5 L428.5 243.5 L431.5 243.5 L435.5 243.5 L438.5 243.5 L442.5 243.5 L445.5 243.5 L449.5 243.5 L452.5 243.5 L456.5 243.5 L459.5 242.5 L463.5 242.5 L466.5 242.5 L470.5 242.5 L473.5 242.5 L477.5 242.5 L480.5 242.5 L484.5 241.5 L487.5 241.5 L491.5 241.5 L494.5 241.5 L498.5 241.5 L501.5 241.5 L505.5 241.5 L508.5 241.5 L512.5 240.5 L515.5 240.5 L519.5 240.5 L519.5 243.5 L528.5 243.5 L528.5 240.5 L529.5 240.5 L533.5 240.5 L536.5 240.5 L540.5 240.5 L543.5 240.5 L547.5 240.5 L550.5 240.5 L554.5 240.5 L557.5 241.5 L561.5 241.5 L564.5 241.5 L568.5 241.5 L571.5 241.5 L575.5 242.5 L578.5 242.5 L582.5 242.5 L586.5 242.5 L589.5 242.5 L589.5 242.5Z M431.5 253.5 L428.5 253.5 L424.5 252.5 L421.5 252.5 L419.5 251.5" stroke="#000" stroke-width="1.0" fill="none"/><ellipse cx="504.36" cy="250.22" rx="13" ry="5.3" stroke="#000" stroke-width="1.1" fill="none"/><path d="M585.5 264.5 L580.5 263.5 L580.5 267.5 L584.5 267.5 L584.5 269.5 L584.5 269.5 L581.5 270.5 L578.5 271.5 L574.5 271.5 L571.5 272.5 L567.5 273.5 L564.5 274.5 L560.5 275.5 L557.5 275.5 L553.5 276.5 L550.5 276.5 L547.5 277.5 L543.5 277.5 L540.5 278.5 L536.5 278.5 L533.5 278.5 L529.5 278.5 L526.5 278.5 L525.5 278.5 L525.5 276.5 L523.5 276.5 L519.5 276.5 L516.5 276.5 L515.5 276.5 L515.5 278.5 L512.5 278.5 L509.5 278.5 L505.5 278.5 L502.5 278.5 L498.5 278.5 L495.5 278.5 L492.5 278.5 L488.5 278.5 L485.5 278.5 L481.5 278.5 L478.5 277.5 L474.5 277.5 L471.5 277.5 L467.5 276.5 L464.5 276.5 L461.5 276.5 L457.5 275.5 L454.5 275.5 L450.5 275.5 L447.5 275.5 L443.5 274.5 L440.5 274.5 L436.5 274.5 L433.5 273.5 L430.5 273.5 L430.5 278.5 L417.5 278.5 L417.5 271.5 L416.5 271.5 L412.5 271.5 L409.5 270.5 L405.5 270.5 L402.5 269.5 L399.5 269.5 L395.5 268.5 L392.5 268.5 L388.5 267.5 L385.5 267.5 L381.5 266.5 L378.5 266.5 L378.5 265.5 L381.5 265.5 L385.5 265.5 L388.5 265.5 L392.5 265.5 L395.5 265.5 L399.5 264.5 L402.5 264.5 L405.5 264.5 L409.5 264.5 L412.5 264.5 L416.5 264.5 L417.5 264.5 L419.5 264.5 L423.5 264.5 L426.5 263.5 L430.5 263.5 L433.5 263.5 L436.5 263.5 L440.5 263.5 L443.5 263.5 L447.5 263.5 L450.5 263.5 L454.5 262.5 L457.5 262.5 L461.5 262.5 L464.5 262.5 L467.5 262.5 L471.5 262.5 L474.5 262.5 L478.5 262.5 L481.5 261.5 L485.5 261.5 L488.5 261.5 L492.5 261.5 L495.5 261.5 L498.5 261.5 L502.5 261.5 L505.5 261.5 L509.5 260.5 L512.5 260.5 L515.5 260.5 L515.5 263.5 L525.5 263.5 L525.5 260.5 L526.5 260.5 L529.5 260.5 L533.5 260.5 L536.5 260.5 L540.5 260.5 L543.5 260.5 L547.5 260.5 L550.5 261.5 L554.5 261.5 L557.5 261.5 L560.5 261.5 L564.5 261.5 L567.5 261.5 L571.5 262.5 L574.5 262.5 L578.5 262.5 L581.5 262.5 L585.5 262.5 L585.5 262.5Z M430.5 273.5 L426.5 272.5 L423.5 272.5 L419.5 272.5 L417.5 271.5" stroke="#000" stroke-width="1.0" fill="none"/><ellipse cx="501.32" cy="270.18" rx="13" ry="5.3" stroke="#000" stroke-width="1.1" fill="none"/><path d="M582.5 284.5 L578.5 284.5 L578.5 288.5 L582.5 288.5 L582.5 289.5 L582.5 289.5 L579.5 290.5 L575.5 291.5 L572.5 292.5 L568.5 292.5 L565.5 293.5 L562.5 294.5 L558.5 295.5 L555.5 295.5 L551.5 296.5 L548.5 296.5 L545.5 297.5 L541.5 297.5 L538.5 298.5 L534.5 298.5 L531.5 298.5 L528.5 298.5 L524.5 298.5 L523.5 298.5 L523.5 296.5 L521.5 296.5 L517.5 296.5 L514.5 296.5 L514.5 296.5 L514.5 298.5 L511.5 298.5 L507.5 298.5 L504.5 298.5 L500.5 298.5 L497.5 298.5 L494.5 298.5 L490.5 298.5 L487.5 298.5 L483.5 298.5 L480.5 298.5 L477.5 298.5 L473.5 297.5 L470.5 297.5 L466.5 297.5 L463.5 296.5 L460.5 296.5 L456.5 296.5 L453.5 296.5 L449.5 295.5 L446.5 295.5 L443.5 295.5 L439.5 294.5 L436.5 294.5 L432.5 294.5 L429.5 293.5 L429.5 299.5 L417.5 299.5 L417.5 292.5 L415.5 292.5 L412.5 291.5 L409.5 291.5 L405.5 290.5 L402.5 290.5 L398.5 289.5 L395.5 289.5 L392.5 288.5 L388.5 288.5 L385.5 287.5 L381.5 287.5 L378.5 286.5 L378.5 286.5 L381.5 286.5 L385.5 286.5 L388.5 285.5 L391.5 285.5 L395.5 285.5 L398.5 285.5 L402.5 285.5 L405.5 285.5 L408.5 285.5 L412.5 285.5 L415.5 284.5 L417.5 284.5 L419.5 284.5 L422.5 284.5 L425.5 284.5 L429.5 284.5 L432.5 284.5 L436.5 284.5 L439.5 283.5 L442.5 283.5 L446.5 283.5 L449.5 283.5 L453.5 283.5 L456.5 283.5 L459.5 283.5 L463.5 283.5 L466.5 282.5 L470.5 282.5 L473.5 282.5 L476.5 282.5 L480.5 282.5 L483.5 282.5 L487.5 282.5 L490.5 281.5 L493.5 281.5 L497.5 281.5 L500.5 281.5 L504.5 281.5 L507.5 281.5 L510.5 281.5 L514.5 281.5 L514.5 284.5 L523.5 283.5 L523.5 280.5 L524.5 280.5 L527.5 280.5 L531.5 280.5 L534.5 281.5 L538.5 281.5 L541.5 281.5 L544.5 281.5 L548.5 281.5 L551.5 281.5 L555.5 281.5 L558.5 281.5 L561.5 281.5 L565.5 282.5 L568.5 282.5 L572.5 282.5 L575.5 282.5 L578.5 282.5 L582.5 282.5 L582.5 282.5Z M429.5 293.5 L426.5 293.5 L422.5 292.5 L419.5 292.5 L417.5 292.5" stroke="#000" stroke-width="1.0" fill="none"/><ellipse cx="499.79" cy="290.52" rx="13" ry="5.3" stroke="#000" stroke-width="1.1" fill="none"/><path d="M607.5 190.5 L611.5 190.5 L611.5 186.5 L607.5 186.5 L607.5 185.5 L607.5 185.5 L611.5 184.5 L614.5 183.5 L617.5 182.5 L621.5 182.5 L624.5 181.5 L627.5 180.5 L631.5 179.5 L634.5 179.5 L637.5 178.5 L641.5 178.5 L644.5 177.5 L647.5 177.5 L651.5 176.5 L654.5 176.5 L657.5 176.5 L661.5 176.5 L663.5 176.5 L663.5 178.5 L664.5 178.5 L667.5 177.5 L671.5 177.5 L673.5 177.5 L673.5 175.5 L674.5 175.5 L677.5 175.5 L681.5 175.5 L684.5 175.5 L687.5 175.5 L691.5 176.5 L694.5 176.5 L697.5 176.5 L701.5 176.5 L704.5 176.5 L708.5 176.5 L711.5 176.5 L714.5 177.5 L718.5 177.5 L721.5 177.5 L724.5 178.5 L728.5 178.5 L731.5 178.5 L734.5 179.5 L738.5 179.5 L741.5 179.5 L744.5 180.5 L748.5 180.5 L751.5 180.5 L754.5 181.5 L754.5 176.5 L768.5 176.5 L768.5 182.5 L771.5 183.5 L774.5 183.5 L778.5 184.5 L781.5 184.5 L784.5 185.5 L788.5 185.5 L791.5 186.5 L794.5 186.5 L798.5 187.5 L801.5 187.5 L804.5 188.5 L808.5 188.5 L808.5 189.5 L804.5 189.5 L801.5 189.5 L798.5 189.5 L794.5 189.5 L791.5 189.5 L788.5 189.5 L784.5 190.5 L781.5 190.5 L778.5 190.5 L774.5 190.5 L771.5 190.5 L768.5 190.5 L764.5 190.5 L761.5 190.5 L758.5 191.5 L754.5 191.5 L754.5 191.5 L751.5 191.5 L748.5 191.5 L744.5 191.5 L741.5 191.5 L738.5 191.5 L734.5 191.5 L731.5 192.5 L728.5 192.5 L724.5 192.5 L721.5 192.5 L718.5 192.5 L714.5 192.5 L711.5 192.5 L707.5 193.5 L704.5 193.5 L701.5 193.5 L697.5 193.5 L694.5 193.5 L691.5 193.5 L687.5 193.5 L684.5 193.5 L681.5 194.5 L677.5 194.5 L674.5 194.5 L673.5 194.5 L673.5 191.5 L663.5 191.5 L663.5 194.5 L661.5 194.5 L657.5 194.5 L654.5 194.5 L651.5 194.5 L647.5 194.5 L644.5 194.5 L641.5 193.5 L637.5 193.5 L634.5 193.5 L631.5 193.5 L627.5 193.5 L624.5 192.5 L621.5 192.5 L617.5 192.5 L614.5 192.5 L611.5 192.5 L607.5 192.5 L607.5 192.5Z M754.5 181.5 L754.5 181.5 L758.5 181.5 L761.5 181.5 L764.5 182.5 L768.5 182.5" stroke="#000" stroke-width="1.0" fill="none"/><ellipse cx="689.95" cy="186.32" rx="10.5" ry="4.3" stroke="#000" stroke-width="1.1" fill="none"/><path d="M604.5 211.5 L608.5 211.5 L608.5 207.5 L604.5 207.5 L604.5 205.5 L604.5 205.5 L607.5 204.5 L610.5 204.5 L614.5 203.5 L617.5 202.5 L620.5 201.5 L624.5 200.5 L627.5 200.5 L630.5 199.5 L633.5 198.5 L637.5 198.5 L640.5 197.5 L643.5 197.5 L647.5 197.5 L650.5 196.5 L653.5 196.5 L656.5 196.5 L659.5 196.5 L659.5 198.5 L660.5 198.5 L663.5 198.5 L666.5 198.5 L669.5 198.5 L669.5 196.5 L670.5 196.5 L673.5 196.5 L676.5 196.5 L679.5 196.5 L683.5 196.5 L686.5 196.5 L689.5 196.5 L693.5 196.5 L696.5 196.5 L699.5 196.5 L702.5 196.5 L706.5 197.5 L709.5 197.5 L712.5 197.5 L716.5 198.5 L719.5 198.5 L722.5 198.5 L725.5 198.5 L729.5 199.5 L732.5 199.5 L735.5 199.5 L739.5 200.5 L742.5 200.5 L745.5 200.5 L748.5 201.5 L748.5 196.5 L762.5 196.5 L762.5 202.5 L765.5 203.5 L768.5 203.5 L771.5 204.5 L775.5 204.5 L778.5 205.5 L781.5 205.5 L785.5 206.5 L788.5 206.5 L791.5 207.5 L795.5 207.5 L798.5 208.5 L801.5 208.5 L801.5 209.5 L798.5 209.5 L795.5 209.5 L791.5 209.5 L788.5 209.5 L785.5 209.5 L781.5 209.5 L778.5 210.5 L775.5 210.5 L772.5 210.5 L768.5 210.5 L765.5 210.5 L762.5 210.5 L758.5 210.5 L755.5 211.5 L752.5 211.5 L748.5 211.5 L748.5 211.5 L745.5 211.5 L742.5 211.5 L739.5 211.5 L735.5 211.5 L732.5 211.5 L729.5 212.5 L725.5 212.5 L722.5 212.5 L719.5 212.5 L716.5 212.5 L712.5 212.5 L709.5 212.5 L706.5 212.5 L702.5 213.5 L699.5 213.5 L696.5 213.5 L693.5 213.5 L689.5 213.5 L686.5 213.5 L683.5 213.5 L679.5 214.5 L676.5 214.5 L673.5 214.5 L670.5 214.5 L669.5 214.5 L669.5 211.5 L659.5 211.5 L659.5 214.5 L656.5 214.5 L653.5 214.5 L650.5 214.5 L647.5 214.5 L643.5 214.5 L640.5 214.5 L637.5 214.5 L633.5 214.5 L630.5 213.5 L627.5 213.5 L624.5 213.5 L620.5 213.5 L617.5 213.5 L614.5 212.5 L610.5 212.5 L607.5 212.5 L604.5 212.5 L604.5 212.5Z M748.5 201.5 L748.5 201.5 L752.5 201.5 L755.5 201.5 L758.5 202.5 L762.5 202.5" stroke="#000" stroke-width="1.0" fill="none"/><ellipse cx="685.19" cy="206.52" rx="10.5" ry="4.3" stroke="#000" stroke-width="1.1" fill="none"/><path d="M595.5 230.5 L599.5 230.5 L599.5 226.5 L595.5 226.5 L595.5 224.5 L595.5 224.5 L598.5 223.5 L602.5 223.5 L605.5 222.5 L608.5 221.5 L611.5 220.5 L615.5 219.5 L618.5 219.5 L621.5 218.5 L624.5 218.5 L628.5 217.5 L631.5 217.5 L634.5 216.5 L637.5 216.5 L641.5 216.5 L644.5 215.5 L647.5 215.5 L650.5 215.5 L650.5 217.5 L650.5 217.5 L653.5 217.5 L657.5 217.5 L659.5 217.5 L659.5 215.5 L660.5 215.5 L663.5 215.5 L666.5 215.5 L670.5 215.5 L673.5 215.5 L676.5 215.5 L679.5 215.5 L683.5 215.5 L686.5 215.5 L689.5 216.5 L692.5 216.5 L696.5 216.5 L699.5 216.5 L702.5 216.5 L705.5 217.5 L709.5 217.5 L712.5 217.5 L715.5 218.5 L718.5 218.5 L722.5 218.5 L725.5 219.5 L728.5 219.5 L731.5 219.5 L735.5 220.5 L737.5 220.5 L737.5 215.5 L751.5 215.5 L751.5 221.5 L754.5 222.5 L757.5 222.5 L761.5 223.5 L764.5 223.5 L767.5 224.5 L770.5 224.5 L773.5 225.5 L777.5 225.5 L780.5 226.5 L783.5 226.5 L786.5 227.5 L790.5 227.5 L790.5 228.5 L786.5 228.5 L783.5 228.5 L780.5 228.5 L777.5 228.5 L773.5 228.5 L770.5 229.5 L767.5 229.5 L764.5 229.5 L761.5 229.5 L757.5 229.5 L754.5 229.5 L751.5 229.5 L748.5 230.5 L744.5 230.5 L741.5 230.5 L738.5 230.5 L737.5 230.5 L735.5 230.5 L731.5 230.5 L728.5 230.5 L725.5 230.5 L722.5 231.5 L718.5 231.5 L715.5 231.5 L712.5 231.5 L709.5 231.5 L705.5 231.5 L702.5 231.5 L699.5 231.5 L696.5 232.5 L692.5 232.5 L689.5 232.5 L686.5 232.5 L683.5 232.5 L679.5 232.5 L676.5 232.5 L673.5 232.5 L670.5 233.5 L666.5 233.5 L663.5 233.5 L660.5 233.5 L659.5 233.5 L659.5 230.5 L650.5 230.5 L650.5 233.5 L647.5 233.5 L644.5 233.5 L641.5 233.5 L637.5 233.5 L634.5 233.5 L631.5 233.5 L628.5 233.5 L624.5 233.5 L621.5 232.5 L618.5 232.5 L615.5 232.5 L611.5 232.5 L608.5 232.5 L605.5 231.5 L602.5 231.5 L598.5 231.5 L595.5 231.5 L595.5 231.5Z M737.5 220.5 L738.5 220.5 L741.5 220.5 L744.5 221.5 L748.5 221.5 L751.5 221.5" stroke="#000" stroke-width="1.0" fill="none"/><ellipse cx="675.39" cy="225.60" rx="10.5" ry="4.3" stroke="#000" stroke-width="1.1" fill="none"/><path d="M592.5 249.5 L596.5 249.5 L596.5 245.5 L592.5 245.5 L592.5 243.5 L592.5 243.5 L595.5 243.5 L598.5 242.5 L602.5 241.5 L605.5 240.5 L608.5 239.5 L611.5 239.5 L614.5 238.5 L618.5 237.5 L621.5 237.5 L624.5 236.5 L627.5 236.5 L630.5 235.5 L634.5 235.5 L637.5 235.5 L640.5 235.5 L643.5 234.5 L646.5 234.5 L646.5 236.5 L646.5 236.5 L650.5 236.5 L653.5 236.5 L655.5 236.5 L655.5 234.5 L656.5 234.5 L659.5 234.5 L662.5 234.5 L666.5 234.5 L669.5 234.5 L672.5 234.5 L675.5 234.5 L678.5 235.5 L681.5 235.5 L685.5 235.5 L688.5 235.5 L691.5 235.5 L694.5 235.5 L697.5 236.5 L701.5 236.5 L704.5 236.5 L707.5 237.5 L710.5 237.5 L713.5 237.5 L717.5 238.5 L720.5 238.5 L723.5 238.5 L726.5 238.5 L729.5 239.5 L732.5 239.5 L732.5 234.5 L745.5 234.5 L745.5 241.5 L748.5 241.5 L752.5 242.5 L755.5 242.5 L758.5 243.5 L761.5 243.5 L764.5 243.5 L768.5 244.5 L771.5 245.5 L774.5 245.5 L777.5 246.5 L780.5 246.5 L784.5 247.5 L784.5 247.5 L780.5 247.5 L777.5 247.5 L774.5 247.5 L771.5 248.5 L768.5 248.5 L764.5 248.5 L761.5 248.5 L758.5 248.5 L755.5 248.5 L752.5 248.5 L748.5 248.5 L745.5 249.5 L742.5 249.5 L739.5 249.5 L736.5 249.5 L733.5 249.5 L732.5 249.5 L729.5 249.5 L726.5 249.5 L723.5 249.5 L720.5 250.5 L717.5 250.5 L713.5 250.5 L710.5 250.5 L707.5 250.5 L704.5 250.5 L701.5 250.5 L697.5 250.5 L694.5 251.5 L691.5 251.5 L688.5 251.5 L685.5 251.5 L681.5 251.5 L678.5 251.5 L675.5 251.5 L672.5 251.5 L669.5 252.5 L666.5 252.5 L662.5 252.5 L659.5 252.5 L656.5 252.5 L655.5 252.5 L655.5 249.5 L646.5 249.5 L646.5 252.5 L643.5 252.5 L640.5 252.5 L637.5 252.5 L634.5 252.5 L630.5 252.5 L627.5 252.5 L624.5 252.5 L621.5 252.5 L618.5 252.5 L614.5 251.5 L611.5 251.5 L608.5 251.5 L605.5 251.5 L602.5 250.5 L598.5 250.5 L595.5 250.5 L592.5 250.5 L592.5 250.5Z M732.5 239.5 L733.5 239.5 L736.5 240.5 L739.5 240.5 L742.5 240.5 L745.5 241.5" stroke="#000" stroke-width="1.0" fill="none"/><path d="M589.5 269.5 L593.5 269.5 L593.5 265.5 L589.5 265.5 L589.5 263.5 L589.5 263.5 L592.5 262.5 L595.5 261.5 L598.5 261.5 L602.5 260.5 L605.5 259.5 L608.5 258.5 L611.5 258.5 L614.5 257.5 L617.5 256.5 L620.5 256.5 L623.5 256.5 L627.5 255.5 L630.5 255.5 L633.5 254.5 L636.5 254.5 L639.5 254.5 L642.5 254.5 L642.5 256.5 L642.5 256.5 L645.5 256.5 L649.5 256.5 L651.5 256.5 L651.5 254.5 L652.5 254.5 L655.5 254.5 L658.5 254.5 L661.5 254.5 L664.5 254.5 L667.5 254.5 L670.5 254.5 L674.5 254.5 L677.5 254.5 L680.5 254.5 L683.5 255.5 L686.5 255.5 L689.5 255.5 L692.5 255.5 L695.5 256.5 L699.5 256.5 L702.5 256.5 L705.5 257.5 L708.5 257.5 L711.5 257.5 L714.5 257.5 L717.5 258.5 L721.5 258.5 L724.5 258.5 L726.5 259.5 L726.5 254.5 L739.5 254.5 L739.5 260.5 L742.5 261.5 L746.5 261.5 L749.5 262.5 L752.5 262.5 L755.5 263.5 L758.5 263.5 L761.5 264.5 L764.5 264.5 L768.5 265.5 L771.5 265.5 L774.5 266.5 L777.5 266.5 L777.5 267.5 L774.5 267.5 L771.5 267.5 L768.5 267.5 L764.5 267.5 L761.5 267.5 L758.5 267.5 L755.5 267.5 L752.5 268.5 L749.5 268.5 L746.5 268.5 L742.5 268.5 L739.5 268.5 L736.5 268.5 L733.5 268.5 L730.5 268.5 L727.5 269.5 L726.5 269.5 L724.5 269.5 L721.5 269.5 L717.5 269.5 L714.5 269.5 L711.5 269.5 L708.5 269.5 L705.5 269.5 L702.5 270.5 L699.5 270.5 L695.5 270.5 L692.5 270.5 L689.5 270.5 L686.5 270.5 L683.5 270.5 L680.5 270.5 L677.5 271.5 L674.5 271.5 L670.5 271.5 L667.5 271.5 L664.5 271.5 L661.5 271.5 L658.5 271.5 L655.5 271.5 L652.5 272.5 L651.5 272.5 L651.5 269.5 L642.5 269.5 L642.5 272.5 L639.5 272.5 L636.5 272.5 L633.5 272.5 L630.5 272.5 L627.5 271.5 L623.5 271.5 L620.5 271.5 L617.5 271.5 L614.5 271.5 L611.5 271.5 L608.5 271.5 L605.5 270.5 L602.5 270.5 L598.5 270.5 L595.5 270.5 L592.5 270.5 L589.5 270.5 L589.5 270.5Z M726.5 259.5 L727.5 259.5 L730.5 259.5 L733.5 260.5 L736.5 260.5 L739.5 260.5" stroke="#000" stroke-width="1.0" fill="none"/><path d="M584.5 287.5 L589.5 287.5 L589.5 283.5 L585.5 283.5 L585.5 281.5 L585.5 281.5 L588.5 281.5 L591.5 280.5 L594.5 279.5 L597.5 278.5 L600.5 278.5 L603.5 277.5 L606.5 276.5 L609.5 276.5 L612.5 275.5 L616.5 275.5 L619.5 274.5 L622.5 274.5 L625.5 273.5 L628.5 273.5 L631.5 273.5 L634.5 273.5 L637.5 273.5 L637.5 275.5 L637.5 275.5 L640.5 275.5 L643.5 275.5 L646.5 275.5 L646.5 273.5 L646.5 273.5 L650.5 273.5 L653.5 273.5 L656.5 273.5 L659.5 273.5 L662.5 273.5 L665.5 273.5 L668.5 273.5 L671.5 273.5 L674.5 274.5 L677.5 274.5 L681.5 274.5 L684.5 274.5 L687.5 275.5 L690.5 275.5 L693.5 275.5 L696.5 276.5 L699.5 276.5 L702.5 276.5 L705.5 277.5 L708.5 277.5 L711.5 277.5 L715.5 277.5 L718.5 278.5 L720.5 278.5 L720.5 273.5 L733.5 273.5 L733.5 280.5 L736.5 280.5 L739.5 281.5 L742.5 281.5 L745.5 282.5 L749.5 282.5 L752.5 283.5 L755.5 283.5 L758.5 284.5 L761.5 284.5 L764.5 285.5 L767.5 285.5 L770.5 286.5 L770.5 286.5 L767.5 286.5 L764.5 287.5 L761.5 287.5 L758.5 287.5 L755.5 287.5 L752.5 287.5 L749.5 287.5 L745.5 287.5 L742.5 287.5 L739.5 287.5 L736.5 287.5 L733.5 288.5 L730.5 288.5 L727.5 288.5 L724.5 288.5 L721.5 288.5 L720.5 288.5 L718.5 288.5 L714.5 288.5 L711.5 288.5 L708.5 288.5 L705.5 288.5 L702.5 289.5 L699.5 289.5 L696.5 289.5 L693.5 289.5 L690.5 289.5 L687.5 289.5 L684.5 289.5 L680.5 289.5 L677.5 289.5 L674.5 290.5 L671.5 290.5 L668.5 290.5 L665.5 290.5 L662.5 290.5 L659.5 290.5 L656.5 290.5 L653.5 290.5 L649.5 290.5 L646.5 290.5 L646.5 290.5 L646.5 287.5 L636.5 288.5 L636.5 291.5 L634.5 290.5 L631.5 290.5 L628.5 290.5 L625.5 290.5 L622.5 290.5 L619.5 290.5 L615.5 290.5 L612.5 290.5 L609.5 290.5 L606.5 289.5 L603.5 289.5 L600.5 289.5 L597.5 289.5 L594.5 288.5 L591.5 288.5 L588.5 288.5 L584.5 288.5 L584.5 288.5Z M720.5 278.5 L721.5 278.5 L724.5 279.5 L727.5 279.5 L730.5 279.5 L733.5 280.5" stroke="#000" stroke-width="1.0" fill="none"/><path d="M953.5 176.5 L949.5 176.5 L949.5 180.5 L953.5 180.5 L953.5 182.5 L953.5 182.5 L950.5 182.5 L947.5 183.5 L944.5 183.5 L940.5 184.5 L937.5 185.5 L934.5 185.5 L931.5 186.5 L928.5 186.5 L925.5 187.5 L922.5 187.5 L919.5 188.5 L916.5 188.5 L913.5 188.5 L910.5 189.5 L907.5 189.5 L904.5 189.5 L901.5 189.5 L901.5 187.5 L901.5 187.5 L898.5 187.5 L895.5 187.5 L892.5 187.5 L890.5 187.5 L890.5 189.5 L889.5 189.5 L886.5 189.5 L882.5 189.5 L879.5 189.5 L876.5 189.5 L873.5 189.5 L870.5 189.5 L867.5 189.5 L864.5 189.5 L861.5 189.5 L858.5 188.5 L855.5 188.5 L852.5 188.5 L849.5 188.5 L846.5 187.5 L843.5 187.5 L840.5 187.5 L837.5 187.5 L834.5 186.5 L831.5 186.5 L828.5 186.5 L824.5 185.5 L824.5 189.5 L811.5 189.5 L811.5 184.5 L809.5 184.5 L806.5 184.5 L803.5 183.5 L800.5 183.5 L797.5 182.5 L794.5 182.5 L791.5 181.5 L788.5 181.5 L785.5 181.5 L782.5 180.5 L779.5 180.5 L776.5 179.5 L773.5 179.5 L770.5 178.5 L770.5 178.5 L773.5 178.5 L776.5 178.5 L779.5 178.5 L782.5 178.5 L785.5 177.5 L788.5 177.5 L791.5 177.5 L794.5 177.5 L797.5 177.5 L800.5 177.5 L803.5 177.5 L806.5 177.5 L809.5 177.5 L811.5 176.5 L812.5 176.5 L815.5 176.5 L818.5 176.5 L821.5 176.5 L824.5 176.5 L828.5 176.5 L831.5 176.5 L834.5 176.5 L837.5 176.5 L840.5 175.5 L843.5 175.5 L846.5 175.5 L849.5 175.5 L852.5 175.5 L855.5 175.5 L858.5 175.5 L861.5 175.5 L864.5 175.5 L867.5 174.5 L870.5 174.5 L873.5 174.5 L876.5 174.5 L879.5 174.5 L882.5 174.5 L886.5 174.5 L889.5 174.5 L890.5 174.5 L890.5 177.5 L901.5 176.5 L901.5 173.5 L904.5 173.5 L907.5 173.5 L910.5 174.5 L913.5 174.5 L916.5 174.5 L919.5 174.5 L922.5 174.5 L925.5 174.5 L928.5 174.5 L931.5 174.5 L934.5 174.5 L937.5 175.5 L940.5 175.5 L944.5 175.5 L947.5 175.5 L950.5 175.5 L953.5 174.5 L953.5 174.5Z M824.5 185.5 L821.5 185.5 L818.5 185.5 L815.5 184.5 L812.5 184.5 L811.5 184.5" stroke="#000" stroke-width="1.0" fill="none"/><path d="M943.5 195.5 L938.5 195.5 L938.5 199.5 L942.5 199.5 L942.5 200.5 L942.5 200.5 L940.5 201.5 L937.5 201.5 L934.5 202.5 L931.5 203.5 L928.5 203.5 L925.5 204.5 L922.5 205.5 L919.5 205.5 L916.5 206.5 L913.5 206.5 L910.5 206.5 L907.5 207.5 L904.5 207.5 L901.5 207.5 L898.5 207.5 L895.5 208.5 L892.5 208.5 L892.5 206.5 L892.5 206.5 L889.5 206.5 L886.5 206.5 L883.5 206.5 L882.5 206.5 L882.5 208.5 L880.5 208.5 L877.5 208.5 L874.5 208.5 L871.5 208.5 L868.5 208.5 L865.5 208.5 L862.5 207.5 L859.5 207.5 L856.5 207.5 L853.5 207.5 L850.5 207.5 L847.5 207.5 L844.5 206.5 L841.5 206.5 L838.5 206.5 L835.5 206.5 L832.5 205.5 L829.5 205.5 L826.5 205.5 L823.5 205.5 L820.5 204.5 L817.5 204.5 L817.5 208.5 L804.5 208.5 L804.5 203.5 L803.5 202.5 L800.5 202.5 L797.5 202.5 L794.5 201.5 L791.5 201.5 L788.5 200.5 L785.5 200.5 L782.5 200.5 L779.5 199.5 L776.5 199.5 L773.5 198.5 L770.5 198.5 L767.5 197.5 L764.5 197.5 L764.5 197.5 L767.5 196.5 L770.5 196.5 L773.5 196.5 L776.5 196.5 L779.5 196.5 L782.5 196.5 L785.5 196.5 L788.5 196.5 L791.5 196.5 L794.5 195.5 L797.5 195.5 L800.5 195.5 L803.5 195.5 L804.5 195.5 L805.5 195.5 L808.5 195.5 L811.5 195.5 L814.5 195.5 L817.5 195.5 L820.5 194.5 L823.5 194.5 L826.5 194.5 L829.5 194.5 L832.5 194.5 L835.5 194.5 L838.5 194.5 L841.5 194.5 L844.5 194.5 L847.5 194.5 L850.5 193.5 L853.5 193.5 L856.5 193.5 L859.5 193.5 L862.5 193.5 L865.5 193.5 L868.5 193.5 L871.5 193.5 L874.5 193.5 L877.5 192.5 L880.5 192.5 L882.5 192.5 L882.5 195.5 L892.5 195.5 L892.5 192.5 L895.5 192.5 L898.5 192.5 L901.5 192.5 L904.5 192.5 L907.5 192.5 L910.5 192.5 L913.5 193.5 L916.5 193.5 L919.5 193.5 L922.5 193.5 L925.5 193.5 L928.5 193.5 L931.5 194.5 L934.5 194.5 L937.5 194.5 L940.5 193.5 L943.5 193.5 L943.5 193.5Z M817.5 204.5 L814.5 204.5 L811.5 203.5 L808.5 203.5 L805.5 203.5 L804.5 203.5" stroke="#000" stroke-width="1.0" fill="none"/><path d="M931.5 213.5 L926.5 212.5 L926.5 216.5 L930.5 216.5 L930.5 218.5 L930.5 218.5 L928.5 219.5 L925.5 219.5 L922.5 220.5 L919.5 220.5 L916.5 221.5 L913.5 222.5 L910.5 222.5 L907.5 223.5 L904.5 223.5 L901.5 224.5 L898.5 224.5 L895.5 224.5 L892.5 225.5 L890.5 225.5 L887.5 225.5 L884.5 225.5 L881.5 225.5 L881.5 223.5 L881.5 223.5 L878.5 223.5 L875.5 223.5 L872.5 223.5 L871.5 223.5 L871.5 225.5 L869.5 225.5 L866.5 225.5 L863.5 225.5 L860.5 225.5 L857.5 225.5 L854.5 225.5 L852.5 225.5 L849.5 225.5 L846.5 225.5 L843.5 225.5 L840.5 225.5 L837.5 224.5 L834.5 224.5 L831.5 224.5 L828.5 224.5 L825.5 223.5 L822.5 223.5 L819.5 223.5 L816.5 223.5 L813.5 222.5 L811.5 222.5 L808.5 222.5 L808.5 225.5 L794.5 225.5 L794.5 220.5 L793.5 220.5 L790.5 220.5 L787.5 219.5 L784.5 219.5 L781.5 219.5 L778.5 218.5 L775.5 218.5 L773.5 217.5 L770.5 217.5 L767.5 216.5 L764.5 216.5 L761.5 216.5 L758.5 215.5 L755.5 215.5 L755.5 214.5 L758.5 214.5 L761.5 214.5 L764.5 214.5 L767.5 214.5 L770.5 214.5 L773.5 214.5 L775.5 214.5 L778.5 213.5 L781.5 213.5 L784.5 213.5 L787.5 213.5 L790.5 213.5 L793.5 213.5 L794.5 213.5 L796.5 213.5 L799.5 213.5 L802.5 213.5 L805.5 212.5 L808.5 212.5 L811.5 212.5 L814.5 212.5 L816.5 212.5 L819.5 212.5 L822.5 212.5 L825.5 212.5 L828.5 212.5 L831.5 212.5 L834.5 211.5 L837.5 211.5 L840.5 211.5 L843.5 211.5 L846.5 211.5 L849.5 211.5 L852.5 211.5 L854.5 211.5 L857.5 211.5 L860.5 210.5 L863.5 210.5 L866.5 210.5 L869.5 210.5 L871.5 210.5 L871.5 213.5 L881.5 213.5 L881.5 210.5 L884.5 210.5 L887.5 210.5 L890.5 210.5 L892.5 210.5 L895.5 210.5 L898.5 210.5 L901.5 210.5 L904.5 210.5 L907.5 211.5 L910.5 211.5 L913.5 211.5 L916.5 211.5 L919.5 211.5 L922.5 211.5 L925.5 211.5 L928.5 211.5 L931.5 211.5 L931.5 211.5Z M808.5 222.5 L805.5 221.5 L802.5 221.5 L799.5 221.5 L796.5 220.5 L794.5 220.5" stroke="#000" stroke-width="1.0" fill="none"/><path d="M920.5 231.5 L916.5 231.5 L916.5 235.5 L920.5 235.5 L920.5 236.5 L920.5 236.5 L917.5 237.5 L914.5 237.5 L911.5 238.5 L908.5 238.5 L905.5 239.5 L902.5 240.5 L900.5 240.5 L897.5 241.5 L894.5 241.5 L891.5 242.5 L888.5 242.5 L885.5 242.5 L882.5 243.5 L879.5 243.5 L877.5 243.5 L874.5 243.5 L871.5 243.5 L871.5 241.5 L871.5 241.5 L868.5 241.5 L865.5 241.5 L862.5 241.5 L861.5 241.5 L861.5 243.5 L859.5 243.5 L856.5 243.5 L854.5 243.5 L851.5 243.5 L848.5 243.5 L845.5 243.5 L842.5 243.5 L839.5 243.5 L836.5 243.5 L834.5 243.5 L831.5 243.5 L828.5 242.5 L825.5 242.5 L822.5 242.5 L819.5 242.5 L816.5 241.5 L813.5 241.5 L811.5 241.5 L808.5 241.5 L805.5 240.5 L802.5 240.5 L799.5 240.5 L799.5 243.5 L786.5 243.5 L786.5 238.5 L785.5 238.5 L782.5 238.5 L779.5 238.5 L776.5 237.5 L773.5 237.5 L770.5 236.5 L767.5 236.5 L765.5 236.5 L762.5 235.5 L759.5 235.5 L756.5 234.5 L753.5 234.5 L750.5 233.5 L747.5 233.5 L747.5 233.5 L750.5 232.5 L753.5 232.5 L756.5 232.5 L759.5 232.5 L762.5 232.5 L765.5 232.5 L767.5 232.5 L770.5 232.5 L773.5 231.5 L776.5 231.5 L779.5 231.5 L782.5 231.5 L785.5 231.5 L786.5 231.5 L788.5 231.5 L790.5 231.5 L793.5 231.5 L796.5 231.5 L799.5 231.5 L802.5 230.5 L805.5 230.5 L808.5 230.5 L811.5 230.5 L813.5 230.5 L816.5 230.5 L819.5 230.5 L822.5 230.5 L825.5 230.5 L828.5 229.5 L831.5 229.5 L834.5 229.5 L836.5 229.5 L839.5 229.5 L842.5 229.5 L845.5 229.5 L848.5 229.5 L851.5 229.5 L854.5 228.5 L856.5 228.5 L859.5 228.5 L861.5 228.5 L861.5 231.5 L871.5 231.5 L871.5 228.5 L874.5 228.5 L877.5 228.5 L879.5 228.5 L882.5 228.5 L885.5 228.5 L888.5 228.5 L891.5 228.5 L894.5 228.5 L897.5 229.5 L900.5 229.5 L902.5 229.5 L905.5 229.5 L908.5 229.5 L911.5 229.5 L914.5 229.5 L917.5 229.5 L920.5 229.5 L920.5 229.5Z M799.5 240.5 L796.5 239.5 L793.5 239.5 L790.5 239.5 L788.5 239.5 L786.5 238.5" stroke="#000" stroke-width="1.0" fill="none"/><path d="M907.5 250.5 L903.5 250.5 L903.5 254.5 L907.5 254.5 L907.5 256.5 L907.5 256.5 L904.5 256.5 L901.5 257.5 L898.5 257.5 L896.5 258.5 L893.5 258.5 L890.5 259.5 L887.5 260.5 L884.5 260.5 L882.5 261.5 L879.5 261.5 L876.5 261.5 L873.5 262.5 L870.5 262.5 L868.5 262.5 L865.5 263.5 L862.5 263.5 L860.5 263.5 L860.5 261.5 L859.5 261.5 L856.5 261.5 L854.5 261.5 L851.5 261.5 L850.5 261.5 L850.5 263.5 L848.5 263.5 L845.5 263.5 L842.5 263.5 L840.5 263.5 L837.5 263.5 L834.5 263.5 L831.5 263.5 L828.5 263.5 L826.5 263.5 L823.5 262.5 L820.5 262.5 L817.5 262.5 L814.5 262.5 L811.5 261.5 L809.5 261.5 L806.5 261.5 L803.5 261.5 L800.5 261.5 L797.5 260.5 L795.5 260.5 L792.5 260.5 L789.5 259.5 L789.5 263.5 L776.5 263.5 L776.5 258.5 L775.5 258.5 L772.5 258.5 L769.5 257.5 L767.5 257.5 L764.5 256.5 L761.5 256.5 L758.5 256.5 L755.5 255.5 L753.5 255.5 L750.5 254.5 L747.5 254.5 L744.5 254.5 L741.5 253.5 L739.5 253.5 L739.5 252.5 L741.5 252.5 L744.5 252.5 L747.5 252.5 L750.5 252.5 L753.5 252.5 L755.5 252.5 L758.5 251.5 L761.5 251.5 L764.5 251.5 L767.5 251.5 L769.5 251.5 L772.5 251.5 L775.5 251.5 L776.5 251.5 L778.5 251.5 L781.5 251.5 L783.5 250.5 L786.5 250.5 L789.5 250.5 L792.5 250.5 L795.5 250.5 L797.5 250.5 L800.5 250.5 L803.5 250.5 L806.5 250.5 L809.5 249.5 L811.5 249.5 L814.5 249.5 L817.5 249.5 L820.5 249.5 L823.5 249.5 L826.5 249.5 L828.5 249.5 L831.5 249.5 L834.5 248.5 L837.5 248.5 L840.5 248.5 L842.5 248.5 L845.5 248.5 L848.5 248.5 L850.5 248.5 L850.5 251.5 L860.5 251.5 L860.5 248.5 L862.5 248.5 L865.5 248.5 L868.5 248.5 L870.5 248.5 L873.5 248.5 L876.5 248.5 L879.5 248.5 L882.5 248.5 L884.5 248.5 L887.5 248.5 L890.5 248.5 L893.5 249.5 L896.5 249.5 L898.5 249.5 L901.5 249.5 L904.5 249.5 L907.5 248.5 L907.5 248.5Z M789.5 259.5 L786.5 259.5 L783.5 259.5 L781.5 259.5 L778.5 258.5 L776.5 258.5" stroke="#000" stroke-width="1.0" fill="none"/><path d="M902.5 269.5 L898.5 269.5 L898.5 273.5 L902.5 273.5 L902.5 275.5 L902.5 275.5 L899.5 275.5 L897.5 276.5 L894.5 276.5 L891.5 277.5 L888.5 278.5 L885.5 278.5 L883.5 279.5 L880.5 279.5 L877.5 280.5 L874.5 280.5 L872.5 281.5 L869.5 281.5 L866.5 281.5 L863.5 281.5 L860.5 282.5 L858.5 282.5 L855.5 282.5 L855.5 280.5 L855.5 280.5 L852.5 280.5 L849.5 280.5 L847.5 280.5 L845.5 280.5 L845.5 282.5 L844.5 282.5 L841.5 282.5 L838.5 282.5 L835.5 282.5 L833.5 282.5 L830.5 282.5 L827.5 282.5 L824.5 281.5 L821.5 281.5 L819.5 281.5 L816.5 281.5 L813.5 281.5 L810.5 280.5 L808.5 280.5 L805.5 280.5 L802.5 280.5 L799.5 279.5 L796.5 279.5 L794.5 279.5 L791.5 279.5 L788.5 278.5 L785.5 278.5 L785.5 282.5 L773.5 282.5 L773.5 277.5 L771.5 277.5 L769.5 276.5 L766.5 276.5 L763.5 275.5 L760.5 275.5 L757.5 275.5 L755.5 274.5 L752.5 274.5 L749.5 273.5 L746.5 273.5 L744.5 272.5 L741.5 272.5 L738.5 272.5 L735.5 271.5 L735.5 271.5 L738.5 271.5 L741.5 271.5 L744.5 270.5 L746.5 270.5 L749.5 270.5 L752.5 270.5 L755.5 270.5 L757.5 270.5 L760.5 270.5 L763.5 270.5 L766.5 270.5 L769.5 270.5 L771.5 269.5 L773.5 269.5 L774.5 269.5 L777.5 269.5 L780.5 269.5 L783.5 269.5 L785.5 269.5 L788.5 269.5 L791.5 269.5 L794.5 269.5 L796.5 269.5 L799.5 268.5 L802.5 268.5 L805.5 268.5 L808.5 268.5 L810.5 268.5 L813.5 268.5 L816.5 268.5 L819.5 268.5 L821.5 268.5 L824.5 268.5 L827.5 267.5 L830.5 267.5 L833.5 267.5 L835.5 267.5 L838.5 267.5 L841.5 267.5 L844.5 267.5 L845.5 267.5 L845.5 270.5 L855.5 270.5 L855.5 267.5 L858.5 267.5 L860.5 267.5 L863.5 267.5 L866.5 267.5 L869.5 267.5 L872.5 267.5 L874.5 267.5 L877.5 267.5 L880.5 267.5 L883.5 267.5 L886.5 268.5 L888.5 268.5 L891.5 268.5 L894.5 268.5 L897.5 268.5 L899.5 268.5 L902.5 268.5 L902.5 268.5Z M785.5 278.5 L783.5 278.5 L780.5 278.5 L777.5 277.5 L774.5 277.5 L773.5 277.5" stroke="#000" stroke-width="1.0" fill="none"/><path d="M905.5 287.5 L901.5 287.5 L901.5 291.5 L905.5 291.5 L905.5 292.5 L905.5 292.5 L902.5 293.5 L899.5 293.5 L897.5 294.5 L894.5 294.5 L891.5 295.5 L888.5 296.5 L886.5 296.5 L883.5 297.5 L880.5 297.5 L877.5 298.5 L874.5 298.5 L872.5 298.5 L869.5 299.5 L866.5 299.5 L863.5 299.5 L861.5 299.5 L858.5 299.5 L858.5 297.5 L858.5 297.5 L855.5 297.5 L852.5 297.5 L850.5 297.5 L849.5 297.5 L849.5 299.5 L847.5 299.5 L844.5 299.5 L841.5 299.5 L839.5 299.5 L836.5 299.5 L833.5 299.5 L830.5 299.5 L828.5 299.5 L825.5 299.5 L822.5 299.5 L819.5 298.5 L816.5 298.5 L814.5 298.5 L811.5 298.5 L808.5 297.5 L805.5 297.5 L803.5 297.5 L800.5 297.5 L797.5 296.5 L794.5 296.5 L792.5 296.5 L789.5 295.5 L789.5 299.5 L776.5 299.5 L776.5 294.5 L775.5 294.5 L772.5 294.5 L770.5 293.5 L767.5 293.5 L764.5 292.5 L761.5 292.5 L759.5 292.5 L756.5 291.5 L753.5 291.5 L750.5 290.5 L747.5 290.5 L745.5 289.5 L742.5 289.5 L739.5 288.5 L739.5 288.5 L742.5 288.5 L745.5 288.5 L747.5 288.5 L750.5 288.5 L753.5 288.5 L756.5 288.5 L759.5 287.5 L761.5 287.5 L764.5 287.5 L767.5 287.5 L770.5 287.5 L772.5 287.5 L775.5 287.5 L776.5 287.5 L778.5 287.5 L781.5 287.5 L783.5 287.5 L786.5 286.5 L789.5 286.5 L792.5 286.5 L794.5 286.5 L797.5 286.5 L800.5 286.5 L803.5 286.5 L805.5 286.5 L808.5 286.5 L811.5 286.5 L814.5 286.5 L817.5 285.5 L819.5 285.5 L822.5 285.5 L825.5 285.5 L828.5 285.5 L830.5 285.5 L833.5 285.5 L836.5 285.5 L839.5 285.5 L841.5 285.5 L844.5 284.5 L847.5 284.5 L849.5 284.5 L849.5 287.5 L859.5 287.5 L859.5 284.5 L861.5 284.5 L863.5 284.5 L866.5 284.5 L869.5 284.5 L872.5 284.5 L875.5 285.5 L877.5 285.5 L880.5 285.5 L883.5 285.5 L886.5 285.5 L888.5 285.5 L891.5 285.5 L894.5 286.5 L897.5 286.5 L899.5 286.5 L902.5 285.5 L905.5 285.5 L905.5 285.5Z M789.5 295.5 L786.5 295.5 L783.5 295.5 L781.5 295.5 L778.5 294.5 L776.5 294.5" stroke="#000" stroke-width="1.0" fill="none"/><path d="M942.5 214.5 L944.5 208.5 L946.5 204.5 L949.5 201.5 L951.5 198.5 L953.5 195.5 L956.5 193.5 L958.5 191.5 L960.5 189.5 L963.5 187.5 L965.5 186.5 L967.5 184.5 L969.5 183.5 L972.5 182.5 L974.5 181.5 L976.5 180.5 L979.5 179.5 L981.5 178.5 L983.5 177.5 L986.5 177.5 L988.5 176.5 L990.5 175.5 L993.5 175.5 L995.5 175.5 L997.5 174.5 L999.5 174.5 L1002.5 174.5 L1004.5 173.5 L1006.5 173.5 L1009.5 173.5 L1011.5 173.5 L1013.5 173.5 L1016.5 173.5 L1018.5 173.5 L1020.5 173.5 L1022.5 173.5 L1025.5 173.5 L1027.5 173.5 L1029.5 173.5 L1032.5 173.5 L1034.5 173.5 L1036.5 173.5 L1039.5 173.5 L1041.5 173.5 L1043.5 173.5 L1046.5 173.5 L1048.5 173.5 L1050.5 173.5 L1052.5 173.5 L1055.5 173.5 L1057.5 173.5 L1059.5 173.5 L1062.5 173.5 L1064.5 173.5 L1066.5 174.5 L1069.5 174.5 L1071.5 174.5 L1073.5 175.5 L1075.5 175.5 L1078.5 175.5 L1080.5 176.5 L1082.5 177.5 L1085.5 177.5 L1087.5 178.5 L1089.5 179.5 L1092.5 180.5 L1094.5 181.5 L1096.5 182.5 L1099.5 183.5 L1101.5 184.5 L1103.5 186.5 L1105.5 187.5 L1108.5 189.5 L1110.5 191.5 L1112.5 193.5 L1115.5 195.5 L1117.5 198.5 L1119.5 201.5 L1122.5 204.5 L1124.5 208.5 L1126.5 214.5Z" stroke="#f00" stroke-width="1.0" fill="none"/><path d="M938.5 219.5 L940.5 225.5 L942.5 228.5 L945.5 232.5 L947.5 235.5 L949.5 237.5 L951.5 240.5 L954.5 242.5 L956.5 244.5 L958.5 245.5 L961.5 247.5 L963.5 248.5 L965.5 250.5 L968.5 251.5 L970.5 252.5 L972.5 253.5 L975.5 254.5 L977.5 255.5 L979.5 255.5 L982.5 256.5 L984.5 257.5 L986.5 257.5 L988.5 258.5 L991.5 258.5 L993.5 258.5 L995.5 259.5 L998.5 259.5 L1000.5 259.5 L1002.5 259.5 L1005.5 260.5 L1007.5 260.5 L1009.5 260.5 L1012.5 260.5 L1014.5 260.5 L1016.5 260.5 L1018.5 260.5 L1021.5 260.5 L1023.5 260.5 L1025.5 260.5 L1028.5 260.5 L1030.5 260.5 L1032.5 260.5 L1035.5 260.5 L1037.5 260.5 L1039.5 260.5 L1042.5 260.5 L1044.5 260.5 L1046.5 260.5 L1049.5 260.5 L1051.5 260.5 L1053.5 260.5 L1055.5 260.5 L1058.5 259.5 L1060.5 259.5 L1062.5 259.5 L1065.5 259.5 L1067.5 258.5 L1069.5 258.5 L1072.5 258.5 L1074.5 257.5 L1076.5 257.5 L1079.5 256.5 L1081.5 255.5 L1083.5 255.5 L1086.5 254.5 L1088.5 253.5 L1090.5 252.5 L1092.5 251.5 L1095.5 250.5 L1097.5 248.5 L1099.5 247.5 L1102.5 245.5 L1104.5 244.5 L1106.5 242.5 L1109.5 240.5 L1111.5 237.5 L1113.5 235.5 L1116.5 232.5 L1118.5 228.5 L1120.5 225.5 L1123.5 219.5Z" stroke="#f00" stroke-width="1.0" fill="none"/><path d="M1110.5 176.5 L1112.5 182.5 L1114.5 186.5 L1116.5 189.5 L1119.5 192.5 L1121.5 194.5 L1123.5 197.5 L1126.5 199.5 L1128.5 201.5 L1130.5 203.5 L1133.5 204.5 L1135.5 206.5 L1137.5 207.5 L1139.5 208.5 L1142.5 209.5 L1144.5 210.5 L1146.5 211.5 L1149.5 212.5 L1151.5 213.5 L1153.5 214.5 L1156.5 214.5 L1158.5 215.5 L1160.5 215.5 L1162.5 216.5 L1165.5 216.5 L1167.5 216.5 L1169.5 216.5 L1172.5 217.5 L1174.5 217.5 L1176.5 217.5 L1179.5 217.5 L1181.5 217.5 L1183.5 217.5 L1185.5 217.5 L1188.5 217.5 L1190.5 217.5 L1192.5 217.5 L1195.5 217.5 L1197.5 217.5 L1199.5 217.5 L1202.5 218.5 L1204.5 217.5 L1206.5 217.5 L1208.5 217.5 L1211.5 217.5 L1213.5 217.5 L1215.5 217.5 L1218.5 217.5 L1220.5 217.5 L1222.5 217.5 L1225.5 217.5 L1227.5 217.5 L1229.5 217.5 L1231.5 217.5 L1234.5 216.5 L1236.5 216.5 L1238.5 216.5 L1241.5 216.5 L1243.5 215.5 L1245.5 215.5 L1248.5 214.5 L1250.5 214.5 L1252.5 213.5 L1254.5 212.5 L1257.5 211.5 L1259.5 210.5 L1261.5 209.5 L1264.5 208.5 L1266.5 207.5 L1268.5 206.5 L1271.5 204.5 L1273.5 203.5 L1275.5 201.5 L1277.5 199.5 L1280.5 197.5 L1282.5 194.5 L1284.5 192.5 L1287.5 189.5 L1289.5 186.5 L1291.5 182.5 L1294.5 176.5Z" stroke="#f00" stroke-width="1.0" fill="none"/><path d="M1105.5 261.5 L1107.5 255.5 L1109.5 251.5 L1111.5 248.5 L1114.5 245.5 L1116.5 242.5 L1118.5 240.5 L1121.5 238.5 L1123.5 236.5 L1125.5 234.5 L1128.5 233.5 L1130.5 231.5 L1132.5 230.5 L1134.5 229.5 L1137.5 227.5 L1139.5 226.5 L1141.5 226.5 L1144.5 225.5 L1146.5 224.5 L1148.5 223.5 L1151.5 223.5 L1153.5 222.5 L1155.5 222.5 L1157.5 221.5 L1160.5 221.5 L1162.5 221.5 L1164.5 221.5 L1167.5 220.5 L1169.5 220.5 L1171.5 220.5 L1174.5 220.5 L1176.5 220.5 L1178.5 220.5 L1180.5 220.5 L1183.5 220.5 L1185.5 220.5 L1187.5 220.5 L1190.5 220.5 L1192.5 220.5 L1194.5 220.5 L1197.5 220.5 L1199.5 220.5 L1201.5 220.5 L1203.5 220.5 L1206.5 220.5 L1208.5 220.5 L1210.5 220.5 L1213.5 220.5 L1215.5 220.5 L1217.5 220.5 L1220.5 220.5 L1222.5 220.5 L1224.5 220.5 L1226.5 220.5 L1229.5 221.5 L1231.5 221.5 L1233.5 221.5 L1236.5 221.5 L1238.5 222.5 L1240.5 222.5 L1243.5 223.5 L1245.5 223.5 L1247.5 224.5 L1249.5 225.5 L1252.5 226.5 L1254.5 226.5 L1256.5 227.5 L1259.5 229.5 L1261.5 230.5 L1263.5 231.5 L1266.5 233.5 L1268.5 234.5 L1270.5 236.5 L1272.5 238.5 L1275.5 240.5 L1277.5 242.5 L1279.5 245.5 L1282.5 248.5 L1284.5 251.5 L1286.5 255.5 L1289.5 261.5Z" stroke="#f00" stroke-width="1.0" fill="none"/><path d="M1278.5 217.5 L1281.5 211.5 L1283.5 207.5 L1285.5 203.5 L1287.5 201.5 L1290.5 198.5 L1292.5 196.5 L1294.5 194.5 L1297.5 192.5 L1299.5 190.5 L1301.5 188.5 L1304.5 187.5 L1306.5 185.5 L1308.5 184.5 L1310.5 183.5 L1313.5 182.5 L1315.5 181.5 L1317.5 180.5 L1320.5 180.5 L1322.5 179.5 L1324.5 178.5 L1327.5 178.5 L1329.5 177.5 L1331.5 177.5 L1334.5 177.5 L1336.5 176.5 L1338.5 176.5 L1340.5 176.5 L1343.5 176.5 L1345.5 176.5 L1347.5 175.5 L1350.5 175.5 L1352.5 175.5 L1354.5 175.5 L1357.5 175.5 L1359.5 175.5 L1361.5 175.5 L1363.5 175.5 L1366.5 175.5 L1368.5 175.5 L1370.5 175.5 L1373.5 175.5 L1375.5 175.5 L1377.5 175.5 L1380.5 175.5 L1382.5 175.5 L1384.5 175.5 L1386.5 175.5 L1389.5 175.5 L1391.5 175.5 L1393.5 175.5 L1396.5 176.5 L1398.5 176.5 L1400.5 176.5 L1403.5 176.5 L1405.5 176.5 L1407.5 177.5 L1410.5 177.5 L1412.5 177.5 L1414.5 178.5 L1416.5 178.5 L1419.5 179.5 L1421.5 180.5 L1423.5 180.5 L1426.5 181.5 L1428.5 182.5 L1430.5 183.5 L1433.5 184.5 L1435.5 185.5 L1437.5 187.5 L1439.5 188.5 L1442.5 190.5 L1444.5 192.5 L1446.5 194.5 L1449.5 196.5 L1451.5 198.5 L1453.5 201.5 L1456.5 203.5 L1458.5 207.5 L1460.5 211.5 L1463.5 217.5Z" stroke="#f00" stroke-width="1.0" fill="none"/><path d="M1269.5 221.5 L1271.5 227.5 L1273.5 231.5 L1275.5 234.5 L1278.5 237.5 L1280.5 239.5 L1282.5 242.5 L1285.5 244.5 L1287.5 246.5 L1289.5 247.5 L1292.5 249.5 L1294.5 250.5 L1296.5 252.5 L1298.5 253.5 L1301.5 254.5 L1303.5 255.5 L1305.5 256.5 L1308.5 257.5 L1310.5 257.5 L1312.5 258.5 L1315.5 259.5 L1317.5 259.5 L1319.5 260.5 L1321.5 260.5 L1324.5 260.5 L1326.5 261.5 L1328.5 261.5 L1331.5 261.5 L1333.5 261.5 L1335.5 262.5 L1338.5 262.5 L1340.5 262.5 L1342.5 262.5 L1344.5 262.5 L1347.5 262.5 L1349.5 262.5 L1351.5 262.5 L1354.5 262.5 L1356.5 262.5 L1358.5 262.5 L1361.5 262.5 L1363.5 262.5 L1365.5 262.5 L1367.5 262.5 L1370.5 262.5 L1372.5 262.5 L1374.5 262.5 L1377.5 262.5 L1379.5 262.5 L1381.5 262.5 L1384.5 262.5 L1386.5 262.5 L1388.5 261.5 L1390.5 261.5 L1393.5 261.5 L1395.5 261.5 L1397.5 260.5 L1400.5 260.5 L1402.5 260.5 L1404.5 259.5 L1407.5 259.5 L1409.5 258.5 L1411.5 257.5 L1413.5 257.5 L1416.5 256.5 L1418.5 255.5 L1420.5 254.5 L1423.5 253.5 L1425.5 252.5 L1427.5 250.5 L1430.5 249.5 L1432.5 247.5 L1434.5 246.5 L1436.5 244.5 L1439.5 242.5 L1441.5 239.5 L1443.5 237.5 L1446.5 234.5 L1448.5 231.5 L1450.5 227.5 L1453.5 221.5Z" stroke="#f00" stroke-width="1.0" fill="none"/><text x="187" y="385.2" font-size="15" font-family="Liberation Sans" fill="#000">Sklejka lotnicza 2mm, offset 0.08</text><rect x="189.5" y="397.5" width="458" height="111" stroke="#000" stroke-width="1" fill="none"/><path d="M194.5 418.5 L199.5 418.5 L199.5 414.5 L195.5 414.5 L195.5 413.5 L195.5 413.5 L199.5 411.5 L203.5 410.5 L207.5 409.5 L211.5 408.5 L215.5 407.5 L219.5 406.5 L223.5 405.5 L227.5 405.5 L231.5 404.5 L235.5 403.5 L239.5 403.5 L243.5 402.5 L247.5 402.5 L251.5 401.5 L255.5 401.5 L260.5 401.5 L264.5 401.5 L265.5 401.5 L265.5 403.5 L268.5 403.5 L272.5 403.5 L275.5 403.5 L275.5 401.5 L276.5 401.5 L280.5 401.5 L284.5 401.5 L288.5 401.5 L292.5 401.5 L296.5 401.5 L300.5 401.5 L304.5 401.5 L308.5 401.5 L312.5 402.5 L316.5 402.5 L320.5 402.5 L325.5 402.5 L329.5 403.5 L333.5 403.5 L337.5 404.5 L341.5 404.5 L345.5 404.5 L349.5 405.5 L353.5 405.5 L357.5 405.5 L361.5 406.5 L365.5 406.5 L369.5 407.5 L373.5 407.5 L377.5 408.5 L380.5 408.5 L380.5 401.5 L394.5 401.5 L394.5 410.5 L398.5 410.5 L402.5 411.5 L406.5 411.5 L410.5 412.5 L414.5 413.5 L418.5 413.5 L422.5 414.5 L426.5 415.5 L430.5 415.5 L434.5 416.5 L438.5 417.5 L438.5 417.5 L434.5 417.5 L430.5 417.5 L426.5 417.5 L422.5 418.5 L418.5 418.5 L414.5 418.5 L410.5 418.5 L406.5 418.5 L402.5 418.5 L398.5 419.5 L394.5 419.5 L394.5 419.5 L389.5 419.5 L385.5 419.5 L381.5 419.5 L380.5 419.5 L377.5 419.5 L373.5 419.5 L369.5 420.5 L365.5 420.5 L361.5 420.5 L357.5 420.5 L353.5 420.5 L349.5 420.5 L345.5 420.5 L341.5 421.5 L337.5 421.5 L333.5 421.5 L329.5 421.5 L324.5 421.5 L320.5 421.5 L316.5 421.5 L312.5 422.5 L308.5 422.5 L304.5 422.5 L300.5 422.5 L296.5 422.5 L292.5 422.5 L288.5 423.5 L284.5 423.5 L280.5 423.5 L276.5 423.5 L275.5 423.5 L275.5 420.5 L265.5 420.5 L265.5 423.5 L264.5 423.5 L259.5 423.5 L255.5 423.5 L251.5 423.5 L247.5 423.5 L243.5 423.5 L239.5 423.5 L235.5 423.5 L231.5 422.5 L227.5 422.5 L223.5 422.5 L219.5 422.5 L215.5 421.5 L211.5 421.5 L207.5 421.5 L203.5 421.5 L199.5 420.5 L194.5 420.5 L194.5 420.5Z M380.5 408.5 L381.5 408.5 L385.5 409.5 L390.5 409.5 L394.5 410.5 L394.5 410.5" stroke="#000" stroke-width="1.0" fill="none"/><circle cx="270.57" cy="413.39" r="7" stroke="#f00" stroke-width="1.1" fill="none"/><rect x="281.55" y="407.61" width="34" height="11.2" rx="2" stroke="#f00" stroke-width="1.1" fill="none"/><circle cx="209.63" cy="414.44" r="1.9" stroke="#f00" stroke-width="1.1" fill="none"/><ellipse cx="391.23" cy="414.58" rx="2.3" ry="1.9" stroke="#f00" stroke-width="1.1" fill="none"/><path d="M194.5 444.5 L198.5 444.5 L198.5 440.5 L194.5 440.5 L194.5 438.5 L194.5 438.5 L198.5 437.5 L202.5 436.5 L206.5 435.5 L210.5 434.5 L214.5 433.5 L218.5 432.5 L222.5 431.5 L226.5 430.5 L229.5 430.5 L233.5 429.5 L237.5 429.5 L241.5 428.5 L245.5 428.5 L249.5 427.5 L253.5 427.5 L257.5 427.5 L261.5 427.5 L262.5 427.5 L262.5 429.5 L265.5 429.5 L269.5 429.5 L272.5 429.5 L272.5 427.5 L273.5 427.5 L277.5 427.5 L280.5 427.5 L284.5 427.5 L288.5 427.5 L292.5 427.5 L296.5 427.5 L300.5 427.5 L304.5 428.5 L308.5 428.5 L312.5 428.5 L316.5 428.5 L320.5 429.5 L324.5 429.5 L328.5 430.5 L331.5 430.5 L335.5 430.5 L339.5 431.5 L343.5 431.5 L347.5 432.5 L351.5 432.5 L355.5 432.5 L359.5 433.5 L363.5 433.5 L367.5 434.5 L371.5 434.5 L373.5 435.5 L373.5 428.5 L387.5 428.5 L387.5 437.5 L390.5 437.5 L394.5 438.5 L398.5 438.5 L402.5 439.5 L406.5 439.5 L410.5 440.5 L414.5 441.5 L418.5 441.5 L422.5 442.5 L426.5 443.5 L430.5 444.5 L430.5 444.5 L426.5 444.5 L422.5 444.5 L418.5 444.5 L414.5 445.5 L410.5 445.5 L406.5 445.5 L402.5 445.5 L398.5 445.5 L394.5 445.5 L390.5 445.5 L387.5 445.5 L386.5 445.5 L382.5 446.5 L378.5 446.5 L375.5 446.5 L373.5 446.5 L371.5 446.5 L367.5 446.5 L363.5 446.5 L359.5 446.5 L355.5 446.5 L351.5 447.5 L347.5 447.5 L343.5 447.5 L339.5 447.5 L335.5 447.5 L331.5 447.5 L327.5 447.5 L323.5 447.5 L320.5 448.5 L316.5 448.5 L312.5 448.5 L308.5 448.5 L304.5 448.5 L300.5 448.5 L296.5 448.5 L292.5 448.5 L288.5 449.5 L284.5 449.5 L280.5 449.5 L276.5 449.5 L272.5 449.5 L272.5 449.5 L272.5 446.5 L262.5 446.5 L262.5 449.5 L261.5 449.5 L257.5 449.5 L253.5 449.5 L249.5 449.5 L245.5 449.5 L241.5 449.5 L237.5 448.5 L233.5 448.5 L229.5 448.5 L225.5 448.5 L221.5 448.5 L218.5 447.5 L214.5 447.5 L210.5 447.5 L206.5 446.5 L202.5 446.5 L198.5 446.5 L194.5 446.5 L194.5 446.5Z M373.5 435.5 L375.5 435.5 L379.5 435.5 L382.5 436.5 L386.5 436.5 L387.5 437.5" stroke="#000" stroke-width="1.0" fill="none"/><circle cx="267.54" cy="439.42" r="7" stroke="#f00" stroke-width="1.1" fill="none"/><ellipse cx="291.09" cy="439.62" rx="14.5" ry="5.8" stroke="#000" stroke-width="1.1" fill="none"/><path d="M193.5 469.5 L197.5 469.5 L197.5 465.5 L193.5 465.5 L193.5 464.5 L193.5 464.5 L197.5 462.5 L201.5 461.5 L205.5 460.5 L209.5 459.5 L213.5 458.5 L217.5 457.5 L221.5 457.5 L225.5 456.5 L230.5 455.5 L234.5 455.5 L238.5 454.5 L242.5 454.5 L246.5 453.5 L250.5 453.5 L254.5 453.5 L258.5 452.5 L262.5 452.5 L264.5 452.5 L264.5 454.5 L266.5 454.5 L270.5 454.5 L273.5 454.5 L273.5 452.5 L274.5 452.5 L278.5 452.5 L282.5 452.5 L286.5 452.5 L290.5 452.5 L294.5 453.5 L298.5 453.5 L302.5 453.5 L306.5 453.5 L310.5 453.5 L315.5 454.5 L319.5 454.5 L323.5 454.5 L327.5 455.5 L331.5 455.5 L335.5 455.5 L339.5 456.5 L343.5 456.5 L347.5 457.5 L351.5 457.5 L355.5 457.5 L359.5 458.5 L363.5 458.5 L367.5 459.5 L371.5 459.5 L375.5 460.5 L378.5 460.5 L378.5 453.5 L392.5 453.5 L392.5 462.5 L395.5 462.5 L399.5 463.5 L403.5 464.5 L407.5 464.5 L412.5 465.5 L416.5 466.5 L420.5 466.5 L424.5 467.5 L428.5 468.5 L432.5 468.5 L436.5 469.5 L436.5 470.5 L432.5 470.5 L428.5 470.5 L424.5 470.5 L420.5 470.5 L416.5 470.5 L411.5 470.5 L407.5 470.5 L403.5 471.5 L399.5 471.5 L395.5 471.5 L392.5 471.5 L391.5 471.5 L387.5 471.5 L383.5 471.5 L379.5 471.5 L377.5 471.5 L375.5 471.5 L371.5 472.5 L367.5 472.5 L363.5 472.5 L359.5 472.5 L355.5 472.5 L351.5 472.5 L347.5 472.5 L343.5 472.5 L339.5 472.5 L335.5 473.5 L331.5 473.5 L326.5 473.5 L322.5 473.5 L318.5 473.5 L314.5 473.5 L310.5 473.5 L306.5 474.5 L302.5 474.5 L298.5 474.5 L294.5 474.5 L290.5 474.5 L286.5 474.5 L282.5 474.5 L278.5 474.5 L274.5 474.5 L273.5 474.5 L273.5 471.5 L263.5 472.5 L263.5 475.5 L262.5 475.5 L258.5 474.5 L254.5 474.5 L250.5 474.5 L246.5 474.5 L241.5 474.5 L237.5 474.5 L233.5 474.5 L229.5 474.5 L225.5 473.5 L221.5 473.5 L217.5 473.5 L213.5 472.5 L209.5 472.5 L205.5 472.5 L201.5 472.5 L197.5 471.5 L193.5 471.5 L193.5 471.5Z M378.5 460.5 L379.5 460.5 L383.5 461.5 L387.5 461.5 L391.5 462.5 L392.5 462.5" stroke="#000" stroke-width="1.0" fill="none"/><circle cx="268.78" cy="464.85" r="7" stroke="#f00" stroke-width="1.1" fill="none"/><rect x="279.76" y="459.15" width="34" height="11.2" rx="2" stroke="#f00" stroke-width="1.1" fill="none"/><circle cx="208.09" cy="465.53" r="1.9" stroke="#f00" stroke-width="1.1" fill="none"/><ellipse cx="388.94" cy="466.79" rx="2.3" ry="1.9" stroke="#f00" stroke-width="1.1" fill="none"/><path d="M193.5 496.5 L197.5 496.5 L197.5 492.5 L193.5 492.5 L193.5 491.5 L193.5 491.5 L197.5 489.5 L201.5 488.5 L205.5 487.5 L209.5 486.5 L213.5 485.5 L216.5 484.5 L220.5 483.5 L224.5 483.5 L228.5 482.5 L232.5 481.5 L236.5 481.5 L240.5 480.5 L244.5 480.5 L248.5 480.5 L252.5 479.5 L256.5 479.5 L259.5 479.5 L261.5 479.5 L261.5 481.5 L263.5 481.5 L267.5 481.5 L270.5 481.5 L270.5 479.5 L271.5 479.5 L275.5 479.5 L279.5 479.5 L283.5 479.5 L287.5 479.5 L291.5 479.5 L295.5 480.5 L298.5 480.5 L302.5 480.5 L306.5 480.5 L310.5 480.5 L314.5 481.5 L318.5 481.5 L322.5 481.5 L326.5 482.5 L330.5 482.5 L334.5 483.5 L337.5 483.5 L341.5 483.5 L345.5 484.5 L349.5 484.5 L353.5 485.5 L357.5 485.5 L361.5 486.5 L365.5 486.5 L369.5 487.5 L371.5 487.5 L371.5 480.5 L385.5 480.5 L385.5 489.5 L388.5 489.5 L392.5 490.5 L396.5 490.5 L400.5 491.5 L404.5 492.5 L408.5 492.5 L411.5 493.5 L415.5 494.5 L419.5 494.5 L423.5 495.5 L427.5 496.5 L427.5 496.5 L423.5 496.5 L419.5 497.5 L415.5 497.5 L411.5 497.5 L407.5 497.5 L404.5 497.5 L400.5 497.5 L396.5 497.5 L392.5 497.5 L388.5 498.5 L385.5 498.5 L384.5 498.5 L380.5 498.5 L376.5 498.5 L372.5 498.5 L371.5 498.5 L368.5 498.5 L365.5 498.5 L361.5 498.5 L357.5 499.5 L353.5 499.5 L349.5 499.5 L345.5 499.5 L341.5 499.5 L337.5 499.5 L333.5 499.5 L329.5 499.5 L326.5 500.5 L322.5 500.5 L318.5 500.5 L314.5 500.5 L310.5 500.5 L306.5 500.5 L302.5 500.5 L298.5 500.5 L294.5 501.5 L290.5 501.5 L287.5 501.5 L283.5 501.5 L279.5 501.5 L275.5 501.5 L271.5 501.5 L270.5 501.5 L270.5 498.5 L261.5 498.5 L261.5 501.5 L259.5 501.5 L255.5 501.5 L251.5 501.5 L248.5 501.5 L244.5 501.5 L240.5 501.5 L236.5 501.5 L232.5 501.5 L228.5 501.5 L224.5 500.5 L220.5 500.5 L216.5 500.5 L212.5 499.5 L209.5 499.5 L205.5 499.5 L201.5 498.5 L197.5 498.5 L193.5 498.5 L193.5 498.5Z M371.5 487.5 L372.5 487.5 L376.5 488.5 L380.5 488.5 L384.5 489.5 L385.5 489.5" stroke="#000" stroke-width="1.0" fill="none"/><circle cx="266.07" cy="491.70" r="7" stroke="#f00" stroke-width="1.1" fill="none"/><ellipse cx="289.47" cy="491.90" rx="14.5" ry="5.8" stroke="#000" stroke-width="1.1" fill="none"/><path d="M443.5 410.5 L448.5 409.5 L452.5 408.5 L456.5 407.5 L460.5 406.5 L464.5 406.5 L468.5 405.5 L472.5 404.5 L476.5 404.5 L480.5 403.5 L483.5 403.5 L487.5 402.5 L491.5 402.5 L545.5 400.5 L547.5 413.5 L491.5 415.5 L487.5 415.5 L484.5 416.5 L480.5 416.5 L477.5 417.5 L473.5 417.5 L470.5 418.5 L466.5 419.5 L462.5 419.5 L458.5 420.5 L454.5 421.5 L450.5 422.5 L446.5 423.5Z" stroke="#f00" stroke-width="1.0" fill="none"/><path d="M542.5 418.5 L546.5 417.5 L551.5 416.5 L555.5 416.5 L559.5 415.5 L563.5 414.5 L567.5 413.5 L571.5 413.5 L575.5 412.5 L579.5 412.5 L582.5 411.5 L586.5 410.5 L590.5 410.5 L644.5 409.5 L644.5 422.5 L590.5 423.5 L586.5 423.5 L583.5 424.5 L580.5 425.5 L576.5 425.5 L572.5 426.5 L569.5 427.5 L565.5 427.5 L561.5 428.5 L557.5 429.5 L553.5 430.5 L549.5 431.5 L545.5 432.5Z" stroke="#f00" stroke-width="1.0" fill="none"/><path d="M433.5 430.5 L438.5 429.5 L442.5 428.5 L447.5 427.5 L452.5 427.5 L456.5 426.5 L461.5 425.5 L465.5 424.5 L469.5 424.5 L474.5 423.5 L478.5 423.5 L482.5 422.5 L486.5 422.5 L535.5 420.5 L535.5 433.5 L486.5 435.5 L482.5 435.5 L478.5 435.5 L474.5 436.5 L470.5 437.5 L466.5 437.5 L462.5 438.5 L458.5 438.5 L453.5 439.5 L449.5 440.5 L444.5 441.5 L440.5 442.5 L435.5 443.5Z" stroke="#f00" stroke-width="1.0" fill="none"/><path d="M440.5 447.5 L445.5 446.5 L450.5 445.5 L455.5 445.5 L460.5 444.5 L464.5 443.5 L469.5 443.5 L473.5 442.5 L478.5 441.5 L482.5 441.5 L486.5 440.5 L490.5 440.5 L495.5 440.5 L543.5 438.5 L543.5 451.5 L495.5 453.5 L491.5 453.5 L487.5 453.5 L483.5 454.5 L479.5 454.5 L475.5 455.5 L470.5 456.5 L466.5 456.5 L462.5 457.5 L457.5 458.5 L453.5 458.5 L448.5 459.5 L443.5 460.5Z" stroke="#f00" stroke-width="1.0" fill="none"/><path d="M442.5 467.5 L447.5 466.5 L452.5 465.5 L456.5 464.5 L461.5 463.5 L465.5 462.5 L470.5 462.5 L474.5 461.5 L478.5 460.5 L483.5 460.5 L487.5 459.5 L491.5 458.5 L495.5 458.5 L544.5 458.5 L545.5 470.5 L495.5 471.5 L491.5 472.5 L487.5 472.5 L483.5 473.5 L479.5 473.5 L475.5 474.5 L471.5 475.5 L466.5 476.5 L462.5 476.5 L458.5 477.5 L453.5 478.5 L448.5 479.5 L444.5 480.5Z" stroke="#f00" stroke-width="1.0" fill="none"/><path d="M444.5 487.5 L449.5 486.5 L453.5 485.5 L458.5 484.5 L462.5 483.5 L466.5 482.5 L471.5 482.5 L475.5 481.5 L479.5 480.5 L483.5 480.5 L487.5 479.5 L491.5 478.5 L495.5 478.5 L547.5 477.5 L547.5 490.5 L495.5 491.5 L491.5 491.5 L487.5 492.5 L484.5 493.5 L480.5 493.5 L476.5 494.5 L472.5 495.5 L468.5 495.5 L464.5 496.5 L460.5 497.5 L456.5 498.5 L451.5 499.5 L447.5 500.5Z" stroke="#f00" stroke-width="1.0" fill="none"/><text x="187" y="538.7" font-size="15" font-family="Liberation Sans" fill="#000">Balsosklejka 3mm, offset 0.08</text><rect x="183.5" y="541.5" width="556" height="401" stroke="#000" stroke-width="1" fill="none"/><path d="M188.5 547.5 L252.5 547.5 L252.5 550.5 L279.5 550.5 L279.5 547.5 L332.5 547.5 L332.5 550.5 L358.5 550.5 L358.5 547.5 L451.5 547.5 L451.5 550.5 L477.5 550.5 L477.5 547.5 L530.5 547.5 L530.5 550.5 L556.5 550.5 L556.5 547.5 L583.5 547.5 L583.5 849.5 L556.5 849.5 L556.5 845.5 L530.5 845.5 L530.5 849.5 L477.5 849.5 L477.5 845.5 L451.5 845.5 L451.5 849.5 L358.5 849.5 L358.5 845.5 L332.5 845.5 L332.5 849.5 L279.5 849.5 L279.5 845.5 L252.5 845.5 L252.5 849.5 L188.5 849.5Z" stroke="#f00" stroke-width="1.0" fill="none"/><path d="M599.5 547.5 L657.5 547.5 L667.5 936.5 L656.5 872.5 L652.5 871.5 L648.5 847.5 L651.5 844.5 L642.5 794.5 L638.5 793.5 L634.5 768.5 L638.5 765.5 L633.5 740.5 L622.5 677.5 L618.5 676.5 L613.5 651.5 L617.5 649.5 L608.5 598.5 L603.5 597.5 L599.5 572.5 L603.5 571.5Z" stroke="#f00" stroke-width="1.0" fill="none"/><path d="M661.5 547.5 L720.5 547.5 L730.5 936.5 L719.5 872.5 L714.5 871.5 L710.5 847.5 L714.5 844.5 L705.5 794.5 L700.5 793.5 L696.5 768.5 L700.5 765.5 L696.5 740.5 L684.5 677.5 L680.5 676.5 L675.5 651.5 L679.5 649.5 L670.5 598.5 L666.5 597.5 L662.5 572.5 L666.5 571.5Z" stroke="#f00" stroke-width="1.0" fill="none"/><path d="M189.5 863.5 L193.5 863.5 L193.5 866.5 L189.5 866.5 L189.5 873.5 L191.5 874.5 L201.5 875.5 L219.5 876.5 L252.5 876.5 L253.5 875.5 L253.5 857.5 L252.5 856.5 L234.5 856.5 L219.5 856.5 L204.5 858.5 L194.5 861.5 L189.5 862.5Z" stroke="#0000ff" stroke-width="1.0" fill="none"/><path d="M261.5 856.5 L288.5 856.5 L315.5 859.5 L353.5 861.5 L353.5 856.5 L366.5 856.5 L366.5 863.5 L409.5 870.5 L369.5 873.5 L329.5 875.5 L280.5 876.5 L262.5 876.5 L260.5 875.5 L260.5 857.5Z" stroke="#0000ff" stroke-width="1.0" fill="none"/><ellipse cx="278" cy="866.30" rx="12.3" ry="4.8" stroke="#000" stroke-width="1.1" fill="none"/><path d="M189.5 885.5 L193.5 885.5 L193.5 889.5 L189.5 889.5 L189.5 895.5 L191.5 897.5 L201.5 898.5 L219.5 899.5 L252.5 899.5 L253.5 898.5 L253.5 880.5 L252.5 878.5 L234.5 878.5 L219.5 879.5 L204.5 881.5 L194.5 883.5 L189.5 885.5Z" stroke="#0000ff" stroke-width="1.0" fill="none"/><path d="M261.5 878.5 L288.5 879.5 L315.5 881.5 L353.5 884.5 L353.5 878.5 L366.5 878.5 L366.5 886.5 L409.5 893.5 L369.5 896.5 L329.5 898.5 L280.5 899.5 L262.5 899.5 L260.5 897.5 L260.5 880.5Z" stroke="#0000ff" stroke-width="1.0" fill="none"/><ellipse cx="278" cy="888.90" rx="12.3" ry="4.8" stroke="#000" stroke-width="1.1" fill="none"/><path d="M189.5 908.5 L193.5 908.5 L193.5 912.5 L189.5 912.5 L189.5 918.5 L191.5 920.5 L201.5 921.5 L219.5 922.5 L252.5 922.5 L253.5 921.5 L253.5 903.5 L252.5 901.5 L234.5 901.5 L219.5 902.5 L204.5 904.5 L194.5 906.5 L189.5 908.5Z" stroke="#0000ff" stroke-width="1.0" fill="none"/><path d="M261.5 901.5 L288.5 902.5 L315.5 904.5 L353.5 907.5 L353.5 901.5 L366.5 901.5 L366.5 909.5 L409.5 916.5 L369.5 919.5 L329.5 921.5 L280.5 922.5 L262.5 922.5 L260.5 920.5 L260.5 903.5Z" stroke="#0000ff" stroke-width="1.0" fill="none"/><ellipse cx="278" cy="911.50" rx="12.3" ry="4.8" stroke="#000" stroke-width="1.1" fill="none"/><path d="M416.5 863.5 L420.5 863.5 L420.5 866.5 L416.5 866.5 L416.5 873.5 L418.5 874.5 L428.5 875.5 L446.5 876.5 L479.5 876.5 L480.5 875.5 L480.5 857.5 L479.5 856.5 L461.5 856.5 L446.5 856.5 L431.5 858.5 L421.5 861.5 L416.5 862.5Z" stroke="#0000ff" stroke-width="1.0" fill="none"/><path d="M489.5 856.5 L516.5 856.5 L543.5 859.5 L580.5 861.5 L580.5 856.5 L593.5 856.5 L593.5 863.5 L637.5 870.5 L597.5 873.5 L557.5 875.5 L508.5 876.5 L490.5 876.5 L488.5 875.5 L488.5 857.5Z" stroke="#0000ff" stroke-width="1.0" fill="none"/><ellipse cx="505" cy="866.3" rx="12.3" ry="4.8" stroke="#000" stroke-width="1.1" fill="none"/><g shape-rendering="auto"><path d="M71 908v15.8" stroke="#0f0" stroke-width="2" fill="none"/><path d="M72 922.7h15" stroke="#f00" stroke-width="2" fill="none"/><path d="M74 904.5l4 4 4-4M78 908.5v4" stroke="#0f0" stroke-width="1.8" fill="none"/><path d="M73.5 918.5h8l-7.5 8.5h8" stroke="#00f" stroke-width="1.8" fill="none"/><path d="M88.5 919.5l8 8M96.5 919.5l-8 8" stroke="#f00" stroke-width="1.8" fill="none"/></g></g></svg>
<div style="position:absolute;left:1637px;top:142px;width:22px;height:810px;background:#f0f0f0"></div>
<div style="position:absolute;left:1637px;top:144px;width:1px;height:808px;background:#e0e0e0"></div>
<svg style="position:absolute;left:1641px;top:148px;" width="10" height="7" viewBox="0 0 10 7"><path d="M1 6l4-4 4 4" stroke="#555" stroke-width="1.8" fill="none" /></svg>
<svg style="position:absolute;left:1641px;top:940px;" width="10" height="7" viewBox="0 0 10 7"><path d="M1 1l4 4 4-4" stroke="#555" stroke-width="1.8" fill="none" /></svg>
<div style="position:absolute;left:1639px;top:476px;width:15px;height:127px;background:#cdcdcd"></div>
<div style="position:absolute;left:41px;top:951px;width:1596px;height:1px;background:#dcdcdc"></div>
<div style="position:absolute;left:44px;top:954px;width:1593px;height:1px;background:#e8e8e8"></div>
<div style="position:absolute;left:0px;top:955px;width:1659px;height:18px;background:#f0f0f0"></div>
<div style="position:absolute;left:958px;top:956px;width:189px;height:15px;background:#cdcdcd"></div>
<div style="position:absolute;left:0px;top:973px;width:1920px;height:1px;background:#e6ebf0"></div>
<svg style="position:absolute;left:1624px;top:958px;" width="7" height="10" viewBox="0 0 7 10"><path d="M1.5 1l4 4-4 4" stroke="#555" stroke-width="1.6" fill="none" /></svg>
<div style="position:absolute;left:26px;top:951px;width:1px;height:4px;background:#a0a0a0"></div>
<div style="position:absolute;left:47px;top:953px;width:5px;height:1px;background:#555"></div>
<div style="position:absolute;left:116px;top:953px;width:101px;height:1px;background:#555"></div>
<div style="position:absolute;left:52px;top:953px;width:64px;height:19px;background:#f4f4f4;border-left:1px solid #c8c8c8;border-right:1px solid #333;border-bottom:2px solid #222;border-radius:0 0 4px 4px;box-sizing:border-box"></div>
<svg style="position:absolute;left:57px;top:955px;" width="16" height="16" viewBox="0 0 16 16"><circle cx="6" cy="7" r="4.5" fill="#ddd" stroke="#333" stroke-width="1.1" /><circle cx="10" cy="10" r="4.5" fill="#888" stroke="#333" stroke-width="1.1" /><circle cx="9" cy="9" r="1.5" fill="#fff" stroke="none" stroke-width="0" /></svg>
<div style="position:absolute;left:73px;top:957.34px;font-size:12px;line-height:12px;color:#111;white-space:nowrap;">Model</div>
<div style="position:absolute;left:118px;top:954px;width:75px;height:16px;background:#dcdcdc;border:1px solid #d0d0d0;border-top:none;border-radius:0 0 3px 3px;box-sizing:border-box"></div>
<svg style="position:absolute;left:122px;top:955px;" width="14" height="15" viewBox="0 0 14 15"><path d="M2.5 1.5h6l3 3v9h-9z" stroke="#222" stroke-width="1" fill="#fff" /><text x="6.5" y="12" font-size="7" font-family="Liberation Sans" fill="#22c" text-anchor="middle">1</text></svg>
<div style="position:absolute;left:139px;top:956.84px;font-size:12px;line-height:12px;color:#8a8a8a;white-space:nowrap;">Layout 1</div>
<div style="position:absolute;left:220px;top:953px;width:1px;height:20px;background:#555"></div>
<svg style="position:absolute;left:226px;top:958px;" width="7" height="10" viewBox="0 0 7 10"><path d="M5.5 1l-4 4 4 4" stroke="#555" stroke-width="1.6" fill="none" /></svg>
<div style="position:absolute;left:0px;top:974px;width:1920px;height:39px;background:#f0f0f0"></div>
<div style="position:absolute;left:4px;top:976px;width:2px;height:2px;background:#b4b4b4"></div>
<div style="position:absolute;left:4px;top:980px;width:2px;height:2px;background:#b4b4b4"></div>
<div style="position:absolute;left:4px;top:984px;width:2px;height:2px;background:#b4b4b4"></div>
<div style="position:absolute;left:4px;top:988px;width:2px;height:2px;background:#b4b4b4"></div>
<div style="position:absolute;left:4px;top:992px;width:2px;height:2px;background:#b4b4b4"></div>
<div style="position:absolute;left:4px;top:996px;width:2px;height:2px;background:#b4b4b4"></div>
<div style="position:absolute;left:4px;top:1000px;width:2px;height:2px;background:#b4b4b4"></div>
<div style="position:absolute;left:4px;top:1004px;width:2px;height:2px;background:#b4b4b4"></div>
<div style="position:absolute;left:4px;top:1008px;width:2px;height:2px;background:#b4b4b4"></div>
<svg style="position:absolute;left:13px;top:987px;" width="14" height="14" viewBox="0 0 14 14"><path d="M2 2l10 10M12 2L2 12" stroke="#aaa" stroke-width="2.6" fill="none" /></svg>
<svg style="position:absolute;left:35px;top:987px;" width="17" height="15" viewBox="0 0 17 15"><rect x="1" y="1" width="14" height="12" fill="#fff" stroke="#33a" stroke-width="1.1" /><rect x="1" y="1" width="14" height="3" fill="#33a" stroke="none" stroke-width="0" /><path d="M3 6.5h10" stroke="#33a" stroke-width="0.8" fill="none" /><path d="M3 9h10" stroke="#33a" stroke-width="0.8" fill="none" /><path d="M3 11.5h10" stroke="#33a" stroke-width="0.8" fill="none" /><path d="M5.5 4v9" stroke="#33a" stroke-width="0.8" fill="none" /><path d="M8.5 4v9" stroke="#33a" stroke-width="0.8" fill="none" /><path d="M11.5 4v9" stroke="#33a" stroke-width="0.8" fill="none" /></svg>
<div style="position:absolute;left:56px;top:980px;width:1px;height:29px;background:#9a9a9a"></div>
<svg style="position:absolute;left:61px;top:983px;" width="9" height="10" viewBox="0 0 9 10"><path d="M2 5V3q0-2 2-2t2 2" stroke="#0a0a80" stroke-width="1.3" fill="none" /><rect x="1" y="5" width="6" height="4.5" fill="#0a0a80" stroke="none" stroke-width="0" /></svg>
<div style="position:absolute;left:72px;top:979.84px;font-size:12px;line-height:12px;color:#111;white-space:nowrap;">Length</div>
<svg style="position:absolute;left:117px;top:983px;" width="9" height="10" viewBox="0 0 9 10"><path d="M2 5V3q0-2 2-2t2 2" stroke="#0a0a80" stroke-width="1.3" fill="none" /><rect x="1" y="5" width="6" height="4.5" fill="#0a0a80" stroke="none" stroke-width="0" /></svg>
<div style="position:absolute;left:127px;top:979.84px;font-size:12px;line-height:12px;color:#111;white-space:nowrap;">Angle</div>
<div style="position:absolute;left:61px;top:994px;width:52px;height:15px;background:#fff;border-top:1px solid #c9c9c9;border-left:1px solid #e0e0e0;box-sizing:border-box"></div>
<div style="position:absolute;left:65px;top:995.84px;font-size:12px;line-height:12px;color:#111;white-space:nowrap;">0 mm</div>
<div style="position:absolute;left:116px;top:994px;width:38px;height:15px;background:#fff;border-top:1px solid #c9c9c9;border-left:1px solid #e0e0e0;box-sizing:border-box"></div>
<div style="position:absolute;left:120px;top:995.84px;font-size:12px;line-height:12px;color:#111;white-space:nowrap;">0</div>
<div style="position:absolute;left:155px;top:995px;width:12px;height:14px;background:#f0f0f0;border:1px solid #c9c9c9;box-sizing:border-box"></div>
<svg style="position:absolute;left:157px;top:996px;" width="8" height="12" viewBox="0 0 8 12"><path d="M1 4.5l3-3 3 3z" stroke="#222" stroke-width="0" fill="#222" /><path d="M1 7.5l3 3 3-3z" stroke="#222" stroke-width="0" fill="#222" /></svg>
<div style="position:absolute;left:0px;top:1013px;width:1920px;height:1px;background:#d9d9d9"></div>
<div style="position:absolute;left:0px;top:1014px;width:1920px;height:26px;background:#f0f0f0"></div>
<div style="position:absolute;left:9px;top:1019.84px;font-size:12px;line-height:12px;color:#1a1a1a;white-space:nowrap;">Define the start point of the line</div>
<div style="position:absolute;left:1441px;top:1021.52px;font-size:11.2px;line-height:11.2px;color:#111;white-space:nowrap;">SNAP</div>
<div style="position:absolute;left:1473px;top:1017px;width:1px;height:20px;background:#d0d0d0"></div>
<div style="position:absolute;left:1479px;top:1021.52px;font-size:11.2px;line-height:11.2px;color:#111;white-space:nowrap;">GEO</div>
<div style="position:absolute;left:1504px;top:1017px;width:1px;height:20px;background:#d0d0d0"></div>
<svg style="position:absolute;left:1521px;top:1018px;" width="10" height="20" viewBox="0 0 10 20"><rect x="2.5" y="0.5" width="5" height="5" fill="#fff" stroke="#333" stroke-width="1" /><text x="4" y="18" font-size="11" font-family="Liberation Sans" fill="#222" text-anchor="middle">X</text></svg>
<div style="position:absolute;left:1532px;top:1019px;width:73px;height:19px;background:#fff;border:1px solid #222;box-sizing:border-box"></div>
<div style="position:absolute;left:1534px;top:1023.27px;font-size:11.5px;line-height:11.5px;color:#000;white-space:nowrap;letter-spacing:-0.35px">774,351769 m</div>
<svg style="position:absolute;left:1617px;top:1018px;" width="10" height="20" viewBox="0 0 10 20"><rect x="2.5" y="0.5" width="5" height="5" fill="#fff" stroke="#333" stroke-width="1" /><text x="4" y="18" font-size="11" font-family="Liberation Sans" fill="#222" text-anchor="middle">Y</text></svg>
<div style="position:absolute;left:1628px;top:1019px;width:73px;height:19px;background:#fff;border:1px solid #222;box-sizing:border-box"></div>
<div style="position:absolute;left:1630px;top:1023.27px;font-size:11.5px;line-height:11.5px;color:#000;white-space:nowrap;letter-spacing:-0.35px">166,309333 m</div>
<svg style="position:absolute;left:1714px;top:1018px;" width="10" height="20" viewBox="0 0 10 20"><rect x="2.5" y="0.5" width="5" height="5" fill="#fff" stroke="#333" stroke-width="1" /><text x="4" y="18" font-size="11" font-family="Liberation Sans" fill="#222" text-anchor="middle">Z</text></svg>
<div style="position:absolute;left:1724px;top:1019px;width:73px;height:19px;background:#fff;border:1px solid #222;box-sizing:border-box"></div>
<div style="position:absolute;left:1726px;top:1023.27px;font-size:11.5px;line-height:11.5px;color:#999;white-space:nowrap;letter-spacing:-0.35px">0 mm</div>
<div style="position:absolute;left:1803px;top:1017px;width:1px;height:20px;background:#d0d0d0"></div>
<div style="position:absolute;left:1807px;top:1019.84px;font-size:12px;line-height:12px;color:#111;white-space:nowrap;">35%</div>
<div style="position:absolute;left:1860px;top:1017px;width:1px;height:20px;background:#d0d0d0"></div>
<div style="position:absolute;left:1863px;top:1019.84px;font-size:12px;line-height:12px;color:#111;white-space:nowrap;">21:41</div>
<div style="position:absolute;left:1659px;top:126px;width:261px;height:827px;background:#f0f0f0"></div>
<div style="position:absolute;left:1659px;top:126px;width:261px;height:23px;background:linear-gradient(#c3d2e3,#dfe8f2);border-top:1px solid #4a4a4a;border-left:1px solid #4a4a4a;box-sizing:border-box"></div>
<div style="position:absolute;left:1664px;top:131.00px;font-size:13px;line-height:13px;color:#444;white-space:nowrap;">Tools</div>
<div style="position:absolute;left:1919px;top:126px;width:1px;height:23px;background:#333"></div>
<div style="position:absolute;left:1919px;top:149px;width:1px;height:31px;background:#b0b0b0"></div>
<svg style="position:absolute;left:1882px;top:129px;" width="17" height="17" viewBox="0 0 17 17"><defs><radialGradient id="pg" cx="0.4" cy="0.4" r="0.7"><stop offset="0" stop-color="#fff"/><stop offset="1" stop-color="#999"/></radialGradient></defs><path d="M2 16l4-4" stroke="#888" stroke-width="1.3" fill="none" /><circle cx="8.6" cy="9.3" r="5.8" fill="url(#pg)" stroke="#888" stroke-width="0.8" /><circle cx="12.6" cy="5.4" r="3.6" fill="url(#pg)" stroke="#888" stroke-width="0.8" /></svg>
<div style="position:absolute;left:1902px;top:129px;width:16px;height:16px;background:#a9a9a9;border:1px solid #fff;border-radius:1px;box-sizing:border-box"></div>
<svg style="position:absolute;left:1904px;top:131px;" width="12" height="12" viewBox="0 0 12 12"><path d="M3 3l6 6M9 3l-6 6" stroke="#fff" stroke-width="2" fill="none" /></svg>
<div style="position:absolute;left:1659px;top:149px;width:261px;height:31px;background:#f5f6f7"></div>
<div style="position:absolute;left:1659px;top:179px;width:261px;height:1px;background:#c9c9c9"></div>
<svg style="position:absolute;left:1664px;top:157px;" width="16" height="16" viewBox="0 0 16 16"><path d="M4 1v11l3-3 3 5 2-1-3-5h4z" stroke="#222" stroke-width="1" fill="#fff" /></svg>
<svg style="position:absolute;left:1686px;top:157px;" width="16" height="16" viewBox="0 0 16 16"><path d="M1 12q2-6 6-9" stroke="#333" stroke-width="1" fill="none" /><rect x="4" y="3" width="4" height="4" fill="#44f" stroke="none" stroke-width="0" /><path d="M7 6v9l2-2 2 3 1.5-1-2-3h3z" stroke="#222" stroke-width="1" fill="#fff" /></svg>
<svg style="position:absolute;left:1707px;top:157px;" width="16" height="16" viewBox="0 0 16 16"><circle cx="7" cy="8" r="6.5" fill="#3a8" stroke="#236" stroke-width="1" /><path d="M3 4q4 2 3 6t5 2" stroke="#36f" stroke-width="2" fill="none" /><path d="M13 2v12" stroke="#333" stroke-width="1.2" fill="none" /></svg>
<div style="position:absolute;left:1729px;top:155px;width:1px;height:21px;background:#9a9a9a"></div>
<div style="position:absolute;left:1733px;top:153px;width:100px;height:24px;background:#fff;border:1px solid #bdbdbd;box-sizing:border-box"></div>
<div style="position:absolute;left:1814px;top:154px;width:18px;height:22px;background:#e6e6e6;border-left:1px solid #cfcfcf;box-sizing:border-box"></div>
<svg style="position:absolute;left:1818px;top:162px;" width="9" height="6" viewBox="0 0 9 6"><path d="M1 1l3.5 3.5L8 1" stroke="#555" stroke-width="1.6" fill="none"/></svg>
<div style="position:absolute;left:1736px;top:159.34px;font-size:12px;line-height:12px;color:#000;white-space:nowrap;">Sketch</div>
<svg style="position:absolute;left:1836px;top:157px;" width="16" height="16" viewBox="0 0 16 16"><path d="M1 8l5-3 7 3v7l-7-3z" stroke="#222" stroke-width="1" fill="#e00" /><path d="M3 2l8 6" stroke="#333" stroke-width="2" fill="none" /><rect x="9" y="5" width="5" height="4" fill="#fff" stroke="#333" stroke-width="1" /><path d="M16 11V16H11z" fill="#111"/></svg>
<div style="position:absolute;left:1659px;top:180px;width:261px;height:520px;background:#eef1f5"></div>
<div style="position:absolute;left:1904px;top:180px;width:15px;height:520px;background:#f0f0f0"></div>
<svg style="position:absolute;left:1906px;top:186px;" width="10" height="7" viewBox="0 0 10 7"><path d="M1 6l4-4 4 4" stroke="#555" stroke-width="1.6" fill="none" /></svg>
<svg style="position:absolute;left:1906px;top:688px;" width="10" height="7" viewBox="0 0 10 7"><path d="M1 1l4 4 4-4" stroke="#555" stroke-width="1.6" fill="none" /></svg>
<div style="position:absolute;left:1904px;top:198px;width:15px;height:310px;background:#cdcdcd"></div>
<div style="position:absolute;left:1661px;top:182px;width:241px;height:127px;background:#f2f4f8;border:1px solid #d3dde8;border-radius:5px 5px 0 0;box-sizing:border-box"></div>
<div style="position:absolute;left:1662px;top:183px;width:239px;height:25px;background:linear-gradient(90deg,#fbfcfd,#e9eef4);border-radius:5px 5px 0 0"></div>
<div style="position:absolute;left:1674px;top:189.92px;font-size:12.5px;line-height:12.5px;color:#1d6fc8;white-space:nowrap;font-weight:bold;letter-spacing:-0.45px">Snap Modes</div>
<svg style="position:absolute;left:1879px;top:185px;" width="17" height="17" viewBox="0 0 17 17"><circle cx="8.5" cy="8.5" r="7.5" fill="#fff" stroke="#bfd0e4" stroke-width="1" /><path d="M5.5 8.5l3-3 3 3M5.5 12l3-3 3 3" stroke="#2a6cc0" stroke-width="1.4" fill="none" /></svg>
<div style="position:absolute;left:1661px;top:311px;width:241px;height:97px;background:#f2f4f8;border:1px solid #d3dde8;border-radius:5px 5px 0 0;box-sizing:border-box"></div>
<div style="position:absolute;left:1662px;top:312px;width:239px;height:25px;background:linear-gradient(90deg,#fbfcfd,#e9eef4);border-radius:5px 5px 0 0"></div>
<div style="position:absolute;left:1674px;top:318.92px;font-size:12.5px;line-height:12.5px;color:#1d6fc8;white-space:nowrap;font-weight:bold;letter-spacing:-0.45px">Line</div>
<svg style="position:absolute;left:1879px;top:314px;" width="17" height="17" viewBox="0 0 17 17"><circle cx="8.5" cy="8.5" r="7.5" fill="#fff" stroke="#bfd0e4" stroke-width="1" /><path d="M5.5 8.5l3-3 3 3M5.5 12l3-3 3 3" stroke="#2a6cc0" stroke-width="1.4" fill="none" /></svg>
<div style="position:absolute;left:1661px;top:411px;width:241px;height:97px;background:#f2f4f8;border:1px solid #d3dde8;border-radius:5px 5px 0 0;box-sizing:border-box"></div>
<div style="position:absolute;left:1662px;top:412px;width:239px;height:25px;background:linear-gradient(90deg,#fbfcfd,#e9eef4);border-radius:5px 5px 0 0"></div>
<div style="position:absolute;left:1674px;top:418.92px;font-size:12.5px;line-height:12.5px;color:#1d6fc8;white-space:nowrap;font-weight:bold;letter-spacing:-0.45px">Circle/Ellipse</div>
<svg style="position:absolute;left:1879px;top:414px;" width="17" height="17" viewBox="0 0 17 17"><circle cx="8.5" cy="8.5" r="7.5" fill="#fff" stroke="#bfd0e4" stroke-width="1" /><path d="M5.5 8.5l3-3 3 3M5.5 12l3-3 3 3" stroke="#2a6cc0" stroke-width="1.4" fill="none" /></svg>
<div style="position:absolute;left:1661px;top:511px;width:241px;height:97px;background:#f2f4f8;border:1px solid #d3dde8;border-radius:5px 5px 0 0;box-sizing:border-box"></div>
<div style="position:absolute;left:1662px;top:512px;width:239px;height:25px;background:linear-gradient(90deg,#fbfcfd,#e9eef4);border-radius:5px 5px 0 0"></div>
<div style="position:absolute;left:1674px;top:518.92px;font-size:12.5px;line-height:12.5px;color:#1d6fc8;white-space:nowrap;font-weight:bold;letter-spacing:-0.45px">Arc</div>
<svg style="position:absolute;left:1879px;top:514px;" width="17" height="17" viewBox="0 0 17 17"><circle cx="8.5" cy="8.5" r="7.5" fill="#fff" stroke="#bfd0e4" stroke-width="1" /><path d="M5.5 8.5l3-3 3 3M5.5 12l3-3 3 3" stroke="#2a6cc0" stroke-width="1.4" fill="none" /></svg>
<div style="position:absolute;left:1661px;top:611px;width:241px;height:89px;background:#f2f4f8;border:1px solid #d3dde8;border-radius:5px 5px 0 0;box-sizing:border-box"></div>
<div style="position:absolute;left:1662px;top:612px;width:239px;height:25px;background:linear-gradient(90deg,#fbfcfd,#e9eef4);border-radius:5px 5px 0 0"></div>
<div style="position:absolute;left:1674px;top:618.92px;font-size:12.5px;line-height:12.5px;color:#1d6fc8;white-space:nowrap;font-weight:bold;letter-spacing:-0.45px">Curve</div>
<svg style="position:absolute;left:1879px;top:614px;" width="17" height="17" viewBox="0 0 17 17"><circle cx="8.5" cy="8.5" r="7.5" fill="#fff" stroke="#bfd0e4" stroke-width="1" /><path d="M5.5 8.5l3-3 3 3M5.5 12l3-3 3 3" stroke="#2a6cc0" stroke-width="1.4" fill="none" /></svg>
<svg style="position:absolute;left:1675.7px;top:219px;overflow:visible" width="20" height="20" viewBox="0 0 18 18"><path d="M4 6l7 2 2 5-3 3-5-2z" stroke="#333" stroke-width="1" fill="#fff" /><path d="M1 15l2 2M3 15l-2 2M14 1l1 1.5 1-1.5" stroke="#e00" stroke-width="0.8" fill="none" /></svg>
<div style="position:absolute;left:1699.8px;top:215.5px;width:28px;height:27px;background:#f9bf7a;border:1.5px solid #1e1e6e;box-sizing:border-box"></div>
<svg style="position:absolute;left:1703.8px;top:219px;overflow:visible" width="20" height="20" viewBox="0 0 18 18"><rect x="2" y="8" width="2.5" height="2.5" fill="#fff" stroke="#888" stroke-width="0.8" /><path d="M6 9.5h7M11 7l2.5 2.5-2.5 2.5" stroke="#111" stroke-width="1.1" fill="none" /><rect x="13.5" y="8.0" width="3" height="3" fill="#fff" stroke="#e00" stroke-width="1" /></svg>
<div style="position:absolute;left:1727.7px;top:215.5px;width:28px;height:27px;background:#f9bf7a;border:1.5px solid #1e1e6e;box-sizing:border-box"></div>
<svg style="position:absolute;left:1731.7px;top:219px;overflow:visible" width="20" height="20" viewBox="0 0 18 18"><path d="M2 14l7-8 6 8" stroke="#111" stroke-width="1" fill="none" /><path d="M9 6l6 8" stroke="#fff" stroke-width="1" fill="none" stroke-dasharray="1.5 1.5"/><rect x="7.5" y="4.5" width="3" height="3" fill="#fff" stroke="#e00" stroke-width="1" /><rect x="12" y="2" width="3" height="3" fill="#fff" stroke="#333" stroke-width="0.8" /></svg>
<svg style="position:absolute;left:1759.6px;top:219px;overflow:visible" width="20" height="20" viewBox="0 0 18 18"><path d="M3 15L15 3" stroke="#111" stroke-width="1" fill="none" /><rect x="4.5" y="10.5" width="3" height="3" fill="#fff" stroke="#e00" stroke-width="1" /><rect x="10.5" y="4.5" width="3" height="3" fill="#fff" stroke="#e00" stroke-width="1" /></svg>
<div style="position:absolute;left:1783.8px;top:215.5px;width:28px;height:27px;background:#f9bf7a;border:1.5px solid #1e1e6e;box-sizing:border-box"></div>
<svg style="position:absolute;left:1787.8px;top:219px;overflow:visible" width="20" height="20" viewBox="0 0 18 18"><path d="M4 14q-3-8 4-10t6 6" stroke="#111" stroke-width="1.2" fill="none" /><rect x="7.5" y="8.5" width="3" height="3" fill="#fff" stroke="#e00" stroke-width="1" /></svg>
<svg style="position:absolute;left:1815.9px;top:219px;overflow:visible" width="20" height="20" viewBox="0 0 18 18"><path d="M2.5 5.5h8v9h-8z" stroke="#111" stroke-width="1.2" fill="#fff" /><path d="M2.5 5.5l3-3h8l-3 3z" stroke="#111" stroke-width="1.2" fill="#fff" /><path d="M10.5 5.5l3-3v9l-3 3z" stroke="#111" stroke-width="1.2" fill="#fff" /><rect x="5.5" y="8.5" width="3" height="3" fill="#fff" stroke="#e00" stroke-width="1" /></svg>
<svg style="position:absolute;left:1843.4px;top:219px;overflow:visible" width="20" height="20" viewBox="0 0 18 18"><circle cx="9" cy="9" r="7" fill="none" stroke="#111" stroke-width="1" stroke-dasharray="1.5 1.5"/><path d="M9 2v14M2 9h14" stroke="#111" stroke-width="0.6" fill="none" stroke-dasharray="1.5 1.5"/><path d="M7 2l2 2 2-2M7 16l2-2 2 2M2 7l2 2-2 2M16 7l-2 2 2 2" stroke="#e00" stroke-width="1" fill="none" /></svg>
<div style="position:absolute;left:1671.7px;top:243.7px;width:28px;height:27px;background:#f9bf7a;border:1.5px solid #1e1e6e;box-sizing:border-box"></div>
<svg style="position:absolute;left:1675.7px;top:247.2px;overflow:visible" width="20" height="20" viewBox="0 0 18 18"><path d="M2 3l14 12M16 3L2 15" stroke="#111" stroke-width="1" fill="none" /><rect x="7.5" y="7.5" width="3" height="3" fill="#fff" stroke="#e00" stroke-width="1" /></svg>
<svg style="position:absolute;left:1703.8px;top:247.2px;overflow:visible" width="20" height="20" viewBox="0 0 18 18"><rect x="2" y="2" width="1" height="1" fill="#111" stroke="none" stroke-width="0" /><rect x="2" y="5" width="1" height="1" fill="#111" stroke="none" stroke-width="0" /><rect x="2" y="8" width="1" height="1" fill="#111" stroke="none" stroke-width="0" /><rect x="2" y="11" width="1" height="1" fill="#111" stroke="none" stroke-width="0" /><rect x="2" y="14" width="1" height="1" fill="#111" stroke="none" stroke-width="0" /><rect x="5" y="2" width="1" height="1" fill="#111" stroke="none" stroke-width="0" /><rect x="5" y="5" width="1" height="1" fill="#111" stroke="none" stroke-width="0" /><rect x="5" y="8" width="1" height="1" fill="#111" stroke="none" stroke-width="0" /><rect x="5" y="11" width="1" height="1" fill="#111" stroke="none" stroke-width="0" /><rect x="5" y="14" width="1" height="1" fill="#111" stroke="none" stroke-width="0" /><rect x="8" y="2" width="1" height="1" fill="#111" stroke="none" stroke-width="0" /><rect x="8" y="5" width="1" height="1" fill="#111" stroke="none" stroke-width="0" /><rect x="8" y="8" width="1" height="1" fill="#111" stroke="none" stroke-width="0" /><rect x="8" y="11" width="1" height="1" fill="#111" stroke="none" stroke-width="0" /><rect x="8" y="14" width="1" height="1" fill="#111" stroke="none" stroke-width="0" /><rect x="11" y="2" width="1" height="1" fill="#111" stroke="none" stroke-width="0" /><rect x="11" y="5" width="1" height="1" fill="#111" stroke="none" stroke-width="0" /><rect x="11" y="8" width="1" height="1" fill="#111" stroke="none" stroke-width="0" /><rect x="11" y="11" width="1" height="1" fill="#111" stroke="none" stroke-width="0" /><rect x="11" y="14" width="1" height="1" fill="#111" stroke="none" stroke-width="0" /><rect x="14" y="2" width="1" height="1" fill="#111" stroke="none" stroke-width="0" /><rect x="14" y="5" width="1" height="1" fill="#111" stroke="none" stroke-width="0" /><rect x="14" y="8" width="1" height="1" fill="#111" stroke="none" stroke-width="0" /><rect x="14" y="11" width="1" height="1" fill="#111" stroke="none" stroke-width="0" /><rect x="13" y="13" width="3" height="3" fill="#fff" stroke="#e00" stroke-width="1" /></svg>
<svg style="position:absolute;left:1731.7px;top:247.2px;overflow:visible" width="20" height="20" viewBox="0 0 18 18"><path d="M2 9l5-4 4 5-5 4z" stroke="#111" stroke-width="1" fill="none" /><rect x="4.5" y="7.5" width="3" height="3" fill="#fff" stroke="#e00" stroke-width="1" /><rect x="12" y="3" width="3" height="3" fill="#fff" stroke="#555" stroke-width="0.8" /><path d="M10 10l4 4" stroke="#888" stroke-width="0.6" fill="none" /></svg>
<svg style="position:absolute;left:1759.6px;top:247.2px;overflow:visible" width="20" height="20" viewBox="0 0 18 18"><path d="M3 14l3-10h6l3 10z" stroke="#111" stroke-width="1.2" fill="none" /><rect x="7.5" y="8.5" width="3" height="3" fill="#fff" stroke="#e00" stroke-width="1" /></svg>
<svg style="position:absolute;left:1787.8px;top:247.2px;overflow:visible" width="20" height="20" viewBox="0 0 18 18"><path d="M4 17q2-8 12-11" stroke="#111" stroke-width="1" fill="none" /><path d="M2 12l9-4" stroke="#111" stroke-width="1" fill="none" /><rect x="6.5" y="7.5" width="3" height="3" fill="#fff" stroke="#e00" stroke-width="1" /></svg>
<svg style="position:absolute;left:1815.9px;top:247.2px;overflow:visible" width="20" height="20" viewBox="0 0 18 18"><path d="M2 14h14M9 5v9" stroke="#111" stroke-width="1.1" fill="none" /><path d="M7 2l4 4M11 2L7 6" stroke="#e00" stroke-width="1.2" fill="none" /><rect x="7.5" y="12.5" width="3" height="3" fill="#fff" stroke="#e00" stroke-width="1" /></svg>
<svg style="position:absolute;left:1843.4px;top:247.2px;overflow:visible" width="20" height="20" viewBox="0 0 18 18"><path d="M2 9h14M9 4v11" stroke="#111" stroke-width="1.1" fill="none" /><path d="M7 1l4 4M11 1L7 5" stroke="#e00" stroke-width="1.2" fill="none" /><rect x="7.5" y="13.5" width="3" height="3" fill="#fff" stroke="#e00" stroke-width="1" /></svg>
<svg style="position:absolute;left:1675.7px;top:275.3px;overflow:visible" width="20" height="20" viewBox="0 0 18 18"><path d="M9 2v14M2 9h14M4 4l10 10M14 4L4 14" stroke="#777" stroke-width="0.8" fill="none" /><path d="M14 2l1.5 1.5 1.5-1.5" stroke="#e00" stroke-width="0.8" fill="none" /></svg>
<svg style="position:absolute;left:1703.8px;top:275.3px;overflow:visible" width="20" height="20" viewBox="0 0 18 18"><path d="M3 15l6-12 6 12z" stroke="#111" stroke-width="0.8" fill="#bbb" /><path d="M2 15h13" stroke="#666" stroke-width="1.5" fill="none" /><rect x="7.5" y="9.5" width="3" height="3" fill="#fff" stroke="#e00" stroke-width="1" /><path d="M4 13l10-8" stroke="#111" stroke-width="0.6" fill="none" /></svg>
<div style="position:absolute;left:1727.7px;top:271.8px;width:28px;height:27px;background:#f9bf7a;border:1.5px solid #1e1e6e;box-sizing:border-box"></div>
<svg style="position:absolute;left:1731.7px;top:275.3px;overflow:visible" width="20" height="20" viewBox="0 0 18 18"><path d="M4 13V7q0-5 5-5t5 5v6" stroke="#111" stroke-width="3" fill="none" /><path d="M3 16l3-3 3 3 3-3 3 3" stroke="#111" stroke-width="0.8" fill="none" /><rect x="7.5" y="12.5" width="3" height="3" fill="#fff" stroke="#e00" stroke-width="1" /></svg>
<div style="position:absolute;left:1755.6px;top:271.8px;width:28px;height:27px;background:#f9bf7a;border:1.5px solid #1e1e6e;box-sizing:border-box"></div>
<svg style="position:absolute;left:1759.6px;top:275.3px;overflow:visible" width="20" height="20" viewBox="0 0 18 18"><path d="M4 2v14M4 2h9v6" stroke="#111" stroke-width="1" fill="none" stroke-dasharray="1.5 1.5"/><path d="M10 11l4 4" stroke="#111" stroke-width="1" fill="none" /><rect x="2.5" y="1.5" width="3" height="3" fill="#fff" stroke="#e00" stroke-width="1" /><rect x="9.5" y="9.5" width="3" height="3" fill="#fff" stroke="#e00" stroke-width="1" /></svg>
<svg style="position:absolute;left:1787.8px;top:275.3px;overflow:visible" width="20" height="20" viewBox="0 0 18 18"><path d="M3 16L9 2l6 14" stroke="#111" stroke-width="1" fill="none" stroke-dasharray="1.5 1.5"/><rect x="4.5" y="8.5" width="3" height="3" fill="#fff" stroke="#e00" stroke-width="1" /><rect x="10.5" y="8.5" width="3" height="3" fill="#fff" stroke="#e00" stroke-width="1" /></svg>
<div style="position:absolute;left:1671.7px;top:344.5px;width:28px;height:27px;background:#f9bf7a;border:1.5px solid #1e1e6e;box-sizing:border-box"></div>
<svg style="position:absolute;left:1675.7px;top:348px;overflow:visible" width="20" height="20" viewBox="0 0 18 18"><path d="M4 14L14 4" stroke="#111" stroke-width="1" fill="none" /><rect x="2.5" y="12.5" width="3" height="3" fill="#fff" stroke="#2b2bff" stroke-width="1" /><rect x="12.5" y="2.5" width="3" height="3" fill="#fff" stroke="#2b2bff" stroke-width="1" /></svg>
<svg style="position:absolute;left:1703.8px;top:348px;overflow:visible" width="20" height="20" viewBox="0 0 18 18"><path d="M3 10l6-6 4 4-5 5 3 3" stroke="#111" stroke-width="1" fill="none" /><rect x="1.5" y="8.5" width="3" height="3" fill="#fff" stroke="#2b2bff" stroke-width="1" /><rect x="7.5" y="2.5" width="3" height="3" fill="#fff" stroke="#2b2bff" stroke-width="1" /><rect x="11.5" y="6.5" width="3" height="3" fill="#fff" stroke="#2b2bff" stroke-width="1" /><rect x="9.5" y="14.5" width="3" height="3" fill="#fff" stroke="#2b2bff" stroke-width="1" /></svg>
<svg style="position:absolute;left:1731.7px;top:348px;overflow:visible" width="20" height="20" viewBox="0 0 18 18"><path d="M6 3h6l3 3v6l-3 3H6l-3-3V6z" stroke="#111" stroke-width="1.2" fill="none" /><path d="M6 15h6" stroke="#111" stroke-width="2" fill="none" /><rect x="7.5" y="7.5" width="3" height="3" fill="#fff" stroke="#2b2bff" stroke-width="1" /><rect x="2.5" y="2.5" width="3" height="3" fill="#fff" stroke="#2b2bff" stroke-width="1" /></svg>
<svg style="position:absolute;left:1759.6px;top:348px;overflow:visible" width="20" height="20" viewBox="0 0 18 18"><path d="M3 3l12 6-5 7z" stroke="#111" stroke-width="1.1" fill="none" /><rect x="1.5" y="1.5" width="3" height="3" fill="#fff" stroke="#2b2bff" stroke-width="1" /><rect x="13.5" y="7.5" width="3" height="3" fill="#fff" stroke="#2b2bff" stroke-width="1" /><rect x="8.5" y="14.5" width="3" height="3" fill="#fff" stroke="#2b2bff" stroke-width="1" /></svg>
<svg style="position:absolute;left:1787.8px;top:348px;overflow:visible" width="20" height="20" viewBox="0 0 18 18"><rect x="3.5" y="3.5" width="11" height="11" fill="none" stroke="#111" stroke-width="1.3" /><rect x="1.5" y="1.5" width="3" height="3" fill="#fff" stroke="#2b2bff" stroke-width="1" /><rect x="13.5" y="13.5" width="3" height="3" fill="#fff" stroke="#2b2bff" stroke-width="1" /></svg>
<svg style="position:absolute;left:1815.9px;top:348px;overflow:visible" width="20" height="20" viewBox="0 0 18 18"><path d="M3 9l6-6 6 6-6 6z" stroke="#111" stroke-width="1" fill="none" /><rect x="7.5" y="1.5" width="3" height="3" fill="#fff" stroke="#2b2bff" stroke-width="1" /><rect x="7.5" y="13.5" width="3" height="3" fill="#fff" stroke="#2b2bff" stroke-width="1" /><path d="M13 11l2 2M13 11v2h2" stroke="#22f" stroke-width="1" fill="none" /></svg>
<svg style="position:absolute;left:1843.4px;top:348px;overflow:visible" width="20" height="20" viewBox="0 0 18 18"><path d="M2 12l7-7 6 7M9 5l5-4" stroke="#111" stroke-width="1" fill="none" /><rect x="7.5" y="4.5" width="3" height="3" fill="#fff" stroke="#2b2bff" stroke-width="1" /><rect x="13.5" y="12.5" width="3" height="3" fill="#fff" stroke="#2b2bff" stroke-width="1" /></svg>
<svg style="position:absolute;left:1675.7px;top:376.8px;overflow:visible" width="20" height="20" viewBox="0 0 18 18"><path d="M2 12L11 3M6 16l9-9" stroke="#111" stroke-width="1" fill="none" /><rect x="4.5" y="6.5" width="3" height="3" fill="#fff" stroke="#2b2bff" stroke-width="1" /><rect x="8.5" y="10.5" width="3" height="3" fill="#fff" stroke="#2b2bff" stroke-width="1" /></svg>
<svg style="position:absolute;left:1703.8px;top:376.8px;overflow:visible" width="20" height="20" viewBox="0 0 18 18"><path d="M6 4h5l3 3v5l-3 3H6l-3-3V7z" stroke="#111" stroke-width="1.1" fill="none" /><path d="M6 15h5" stroke="#111" stroke-width="2" fill="none" /><path d="M5 1l11 12" stroke="#111" stroke-width="1" fill="none" /><rect x="8.5" y="4.5" width="3" height="3" fill="#fff" stroke="#2b2bff" stroke-width="1" /></svg>
<svg style="position:absolute;left:1731.7px;top:376.8px;overflow:visible" width="20" height="20" viewBox="0 0 18 18"><path d="M2 2q4 0 6 4M8 6q1 5-2 9" stroke="#111" stroke-width="1" fill="none" /><path d="M8 6l6 7" stroke="#111" stroke-width="1" fill="none" /><rect x="6.5" y="3.5" width="3" height="3" fill="#fff" stroke="#e00" stroke-width="1" /><rect x="12.5" y="11.5" width="3" height="3" fill="#fff" stroke="#2b2bff" stroke-width="1" /><path d="M5 15h2" stroke="#111" stroke-width="2" fill="none" /></svg>
<svg style="position:absolute;left:1759.6px;top:376.8px;overflow:visible" width="20" height="20" viewBox="0 0 18 18"><path d="M4 2q5 1 5 7t-5 7" stroke="#111" stroke-width="1.2" fill="none" /><path d="M9 7l6 6" stroke="#111" stroke-width="1" fill="none" /><rect x="7.5" y="3.5" width="3" height="3" fill="#fff" stroke="#2b2bff" stroke-width="1" /><rect x="13.5" y="11.5" width="3" height="3" fill="#fff" stroke="#e00" stroke-width="1" /><path d="M4 15h2" stroke="#111" stroke-width="2" fill="none" /></svg>
<svg style="position:absolute;left:1787.8px;top:376.8px;overflow:visible" width="20" height="20" viewBox="0 0 18 18"><path d="M2 2h4M2 9h4M5 2q5 0 5 7v7M11 9q2 0 2 3v4M6 2l7 8" stroke="#111" stroke-width="1" fill="none" /><rect x="4.5" y="1.5" width="3" height="3" fill="#fff" stroke="#2b2bff" stroke-width="1" /><rect x="11.5" y="8.5" width="3" height="3" fill="#fff" stroke="#2b2bff" stroke-width="1" /></svg>
<svg style="position:absolute;left:1815.9px;top:376.8px;overflow:visible" width="20" height="20" viewBox="0 0 18 18"><path d="M2 12l7-4h5M9 8l-3 8M11 1l-2 7" stroke="#111" stroke-width="1" fill="none" /><rect x="4.5" y="9.5" width="3" height="3" fill="#fff" stroke="#2b2bff" stroke-width="1" /><rect x="10.5" y="3.5" width="3" height="3" fill="#fff" stroke="#2b2bff" stroke-width="1" /></svg>
<svg style="position:absolute;left:1843.4px;top:376.8px;overflow:visible" width="20" height="20" viewBox="0 0 18 18"><path d="M9 2v14M9 16L3 10M9 16l6-6" stroke="#111" stroke-width="1.2" fill="none" /><rect x="7.5" y="0.5" width="3" height="3" fill="#fff" stroke="#2b2bff" stroke-width="1" /><rect x="1.5" y="7.5" width="3" height="3" fill="#fff" stroke="#2b2bff" stroke-width="1" /><rect x="13.5" y="7.5" width="3" height="3" fill="#fff" stroke="#2b2bff" stroke-width="1" /><rect x="7.5" y="13.5" width="3" height="3" fill="#fff" stroke="#2b2bff" stroke-width="1" /></svg>
<svg style="position:absolute;left:1675.7px;top:447.7px;overflow:visible" width="20" height="20" viewBox="0 0 18 18"><circle cx="9" cy="9" r="6" fill="none" stroke="#111" stroke-width="1.2" /><rect x="7.5" y="7.5" width="3" height="3" fill="#fff" stroke="#2b2bff" stroke-width="1" /><rect x="13.5" y="7.5" width="3" height="3" fill="#fff" stroke="#2b2bff" stroke-width="1" /><path d="M6 15h6" stroke="#111" stroke-width="2" fill="none" /></svg>
<svg style="position:absolute;left:1703.8px;top:447.7px;overflow:visible" width="20" height="20" viewBox="0 0 18 18"><circle cx="9" cy="9" r="6" fill="none" stroke="#111" stroke-width="1.2" /><circle cx="9" cy="9" r="3.5" fill="none" stroke="#111" stroke-width="1" /><rect x="7.5" y="7.5" width="3" height="3" fill="#fff" stroke="#2b2bff" stroke-width="1" /><rect x="10.5" y="7.5" width="3" height="3" fill="#fff" stroke="#2b2bff" stroke-width="1" /><rect x="13.5" y="7.5" width="3" height="3" fill="#fff" stroke="#2b2bff" stroke-width="1" /></svg>
<svg style="position:absolute;left:1731.7px;top:447.7px;overflow:visible" width="20" height="20" viewBox="0 0 18 18"><circle cx="9" cy="9" r="6" fill="none" stroke="#111" stroke-width="1.2" /><rect x="1.5" y="7.5" width="3" height="3" fill="#fff" stroke="#2b2bff" stroke-width="1" /><rect x="13.5" y="7.5" width="3" height="3" fill="#fff" stroke="#2b2bff" stroke-width="1" /></svg>
<svg style="position:absolute;left:1759.6px;top:447.7px;overflow:visible" width="20" height="20" viewBox="0 0 18 18"><circle cx="9" cy="9" r="6" fill="none" stroke="#111" stroke-width="1.2" /><rect x="4.5" y="1.5" width="3" height="3" fill="#fff" stroke="#2b2bff" stroke-width="1" /><rect x="11.5" y="10.5" width="3" height="3" fill="#fff" stroke="#2b2bff" stroke-width="1" /></svg>
<svg style="position:absolute;left:1787.8px;top:447.7px;overflow:visible" width="20" height="20" viewBox="0 0 18 18"><circle cx="9" cy="9" r="6" fill="none" stroke="#111" stroke-width="1.2" /><path d="M2 3h14" stroke="#111" stroke-width="1.2" fill="none" /><path d="M9 3v12" stroke="#666" stroke-width="0.6" fill="none" stroke-dasharray="1.5 1.5"/><rect x="7.5" y="13.5" width="3" height="3" fill="#fff" stroke="#2b2bff" stroke-width="1" /><rect x="13.5" y="7.5" width="3" height="3" fill="#fff" stroke="#2b2bff" stroke-width="1" /></svg>
<svg style="position:absolute;left:1815.9px;top:447.7px;overflow:visible" width="20" height="20" viewBox="0 0 18 18"><circle cx="9" cy="9" r="6" fill="none" stroke="#111" stroke-width="1.2" /><rect x="3.5" y="2.5" width="3" height="3" fill="#fff" stroke="#2b2bff" stroke-width="1" /><rect x="11.5" y="2.5" width="3" height="3" fill="#fff" stroke="#2b2bff" stroke-width="1" /><rect x="7.5" y="13.5" width="3" height="3" fill="#fff" stroke="#2b2bff" stroke-width="1" /></svg>
<svg style="position:absolute;left:1843.4px;top:447.7px;overflow:visible" width="20" height="20" viewBox="0 0 18 18"><circle cx="9" cy="9" r="6" fill="none" stroke="#111" stroke-width="1.2" /><path d="M1 6l8 11" stroke="#111" stroke-width="0.8" fill="none" /><rect x="7.5" y="1.5" width="3" height="3" fill="#fff" stroke="#2b2bff" stroke-width="1" /><rect x="2.5" y="7.5" width="3" height="3" fill="#fff" stroke="#2b2bff" stroke-width="1" /><rect x="12.5" y="10.5" width="3" height="3" fill="#fff" stroke="#2b2bff" stroke-width="1" /></svg>
<svg style="position:absolute;left:1675.7px;top:476px;overflow:visible" width="20" height="20" viewBox="0 0 18 18"><path d="M2 15L14 3" stroke="#111" stroke-width="1" fill="none" /><circle cx="9" cy="11" r="4" fill="none" stroke="#111" stroke-width="1" /><rect x="7.5" y="5.5" width="3" height="3" fill="#fff" stroke="#2b2bff" stroke-width="1" /><rect x="4.5" y="12.5" width="3" height="3" fill="#fff" stroke="#2b2bff" stroke-width="1" /><rect x="10.5" y="12.5" width="3" height="3" fill="#fff" stroke="#2b2bff" stroke-width="1" /></svg>
<svg style="position:absolute;left:1703.8px;top:476px;overflow:visible" width="20" height="20" viewBox="0 0 18 18"><ellipse cx="9" cy="9" rx="7" ry="3.5" fill="none" stroke="#111" stroke-width="1.2" /><rect x="7.5" y="7.5" width="3" height="3" fill="#fff" stroke="#2b2bff" stroke-width="1" /><rect x="14.5" y="10.5" width="3" height="3" fill="#fff" stroke="#2b2bff" stroke-width="1" /></svg>
<svg style="position:absolute;left:1731.7px;top:476px;overflow:visible" width="20" height="20" viewBox="0 0 18 18"><ellipse cx="9" cy="9" rx="7" ry="3.5" fill="none" stroke="#111" stroke-width="1.2" transform="rotate(-45 9 9)"/><rect x="2.5" y="12.5" width="3" height="3" fill="#fff" stroke="#2b2bff" stroke-width="1" /><rect x="7.5" y="7.5" width="3" height="3" fill="#fff" stroke="#2b2bff" stroke-width="1" /><rect x="12.5" y="2.5" width="3" height="3" fill="#fff" stroke="#2b2bff" stroke-width="1" /></svg>
<svg style="position:absolute;left:1759.6px;top:476px;overflow:visible" width="20" height="20" viewBox="0 0 18 18"><text x="9" y="6" font-size="6" font-family="Liberation Sans" fill="#22c" text-anchor="middle">a:b</text><ellipse cx="9" cy="12" rx="7" ry="3.5" fill="none" stroke="#111" stroke-width="1.2" /></svg>
<svg style="position:absolute;left:1675.7px;top:547.2px;overflow:visible" width="20" height="20" viewBox="0 0 18 18"><path d="M3 14q0-10 6-10t6 8" stroke="#111" stroke-width="1" fill="none" /><rect x="1.5" y="12.5" width="3" height="3" fill="#fff" stroke="#2b2bff" stroke-width="1" /><rect x="7.5" y="7.5" width="3" height="3" fill="#fff" stroke="#2b2bff" stroke-width="1" /><rect x="13.5" y="8.5" width="3" height="3" fill="#fff" stroke="#2b2bff" stroke-width="1" /></svg>
<svg style="position:absolute;left:1703.8px;top:547.2px;overflow:visible" width="20" height="20" viewBox="0 0 18 18"><path d="M3 14q0-10 6-10t6 8M6 14q0-6 3-6t3 4" stroke="#111" stroke-width="1" fill="none" /><rect x="1.5" y="12.5" width="3" height="3" fill="#fff" stroke="#2b2bff" stroke-width="1" /><rect x="7.5" y="8.5" width="3" height="3" fill="#fff" stroke="#2b2bff" stroke-width="1" /><rect x="13.5" y="8.5" width="3" height="3" fill="#fff" stroke="#2b2bff" stroke-width="1" /></svg>
<svg style="position:absolute;left:1731.7px;top:547.2px;overflow:visible" width="20" height="20" viewBox="0 0 18 18"><path d="M3 5q0 10 6 10t6-10" stroke="#111" stroke-width="1" fill="none" /><rect x="1.5" y="3.5" width="3" height="3" fill="#fff" stroke="#2b2bff" stroke-width="1" /><rect x="13.5" y="0.5" width="3" height="3" fill="#fff" stroke="#2b2bff" stroke-width="1" /><path d="M3 5l6 4" stroke="#666" stroke-width="0.5" fill="none" stroke-dasharray="1.5 1.5"/></svg>
<svg style="position:absolute;left:1759.6px;top:547.2px;overflow:visible" width="20" height="20" viewBox="0 0 18 18"><path d="M3 15q0-10 6-10t6 8" stroke="#111" stroke-width="1" fill="none" /><rect x="1.5" y="13.5" width="3" height="3" fill="#fff" stroke="#2b2bff" stroke-width="1" /><rect x="4.5" y="2.5" width="3" height="3" fill="#fff" stroke="#2b2bff" stroke-width="1" /><rect x="12.5" y="11.5" width="3" height="3" fill="#fff" stroke="#2b2bff" stroke-width="1" /></svg>
<svg style="position:absolute;left:1787.8px;top:547.2px;overflow:visible" width="20" height="20" viewBox="0 0 18 18"><path d="M2 14L14 2" stroke="#111" stroke-width="0.8" fill="none" stroke-dasharray="1.5 1.5"/><path d="M4 12q2-6 8-2" stroke="#111" stroke-width="1" fill="none" /><rect x="9.5" y="8.5" width="3" height="3" fill="#fff" stroke="#2b2bff" stroke-width="1" /><rect x="11.5" y="11.5" width="3" height="3" fill="#fff" stroke="#2b2bff" stroke-width="1" /></svg>
<svg style="position:absolute;left:1815.9px;top:547.2px;overflow:visible" width="20" height="20" viewBox="0 0 18 18"><text x="2" y="7" font-size="6" font-family="Liberation Sans" fill="#111">1</text><text x="2" y="16" font-size="6" font-family="Liberation Sans" fill="#111">3</text><text x="8" y="12" font-size="6" font-family="Liberation Sans" fill="#111">2</text><path d="M6 3q8 0 8 6t-8 6" stroke="#111" stroke-width="1" fill="none" /><rect x="12.5" y="7.5" width="3" height="3" fill="#fff" stroke="#2b2bff" stroke-width="1" /><rect x="6.5" y="13.5" width="3" height="3" fill="#fff" stroke="#2b2bff" stroke-width="1" /></svg>
<svg style="position:absolute;left:1843.4px;top:547.2px;overflow:visible" width="20" height="20" viewBox="0 0 18 18"><text x="2" y="7" font-size="6" font-family="Liberation Sans" fill="#111">1</text><text x="2" y="16" font-size="6" font-family="Liberation Sans" fill="#111">2</text><text x="8" y="12" font-size="6" font-family="Liberation Sans" fill="#111">3</text><path d="M6 3q8 0 8 6t-8 6" stroke="#111" stroke-width="1" fill="none" /><rect x="12.5" y="7.5" width="3" height="3" fill="#fff" stroke="#2b2bff" stroke-width="1" /><rect x="6.5" y="13.5" width="3" height="3" fill="#fff" stroke="#2b2bff" stroke-width="1" /></svg>
<svg style="position:absolute;left:1675.7px;top:575.5px;overflow:visible" width="20" height="20" viewBox="0 0 18 18"><path d="M3 9q0-6 6-6t6 6-6 6" stroke="#111" stroke-width="1" fill="none" /><path d="M1 5l8 5" stroke="#111" stroke-width="0.6" fill="none" /><rect x="2.5" y="7.5" width="3" height="3" fill="#fff" stroke="#2b2bff" stroke-width="1" /><rect x="12.5" y="10.5" width="3" height="3" fill="#fff" stroke="#2b2bff" stroke-width="1" /><rect x="7.5" y="1.5" width="3" height="3" fill="#fff" stroke="#2b2bff" stroke-width="1" /></svg>
<svg style="position:absolute;left:1703.8px;top:575.5px;overflow:visible" width="20" height="20" viewBox="0 0 18 18"><path d="M2 15L14 3" stroke="#111" stroke-width="1" fill="none" /><path d="M5 15q0-8 4-8t4 8" stroke="#111" stroke-width="1" fill="none" /><rect x="7.5" y="5.5" width="3" height="3" fill="#fff" stroke="#2b2bff" stroke-width="1" /><rect x="4.5" y="12.5" width="3" height="3" fill="#fff" stroke="#2b2bff" stroke-width="1" /><rect x="10.5" y="12.5" width="3" height="3" fill="#fff" stroke="#2b2bff" stroke-width="1" /></svg>
<svg style="position:absolute;left:1731.7px;top:575.5px;overflow:visible" width="20" height="20" viewBox="0 0 18 18"><path d="M2 15L14 3" stroke="#111" stroke-width="1" fill="none" /><path d="M5 15q0-8 4-8t4 8" stroke="#111" stroke-width="1" fill="none" /><rect x="7.5" y="6.5" width="3" height="3" fill="#fff" stroke="#2b2bff" stroke-width="1" /><rect x="4.5" y="12.5" width="3" height="3" fill="#fff" stroke="#2b2bff" stroke-width="1" /></svg>
<svg style="position:absolute;left:1759.6px;top:575.5px;overflow:visible" width="20" height="20" viewBox="0 0 18 18"><ellipse cx="9" cy="9" rx="7" ry="3.5" fill="none" stroke="#111" stroke-width="1.1" /><rect x="1.5" y="3.5" width="3" height="3" fill="#fff" stroke="#2b2bff" stroke-width="1" /><rect x="6.5" y="3.5" width="3" height="3" fill="#fff" stroke="#2b2bff" stroke-width="1" /><rect x="12.5" y="8.5" width="3" height="3" fill="#fff" stroke="#2b2bff" stroke-width="1" /></svg>
<svg style="position:absolute;left:1787.8px;top:575.5px;overflow:visible" width="20" height="20" viewBox="0 0 18 18"><ellipse cx="9" cy="9" rx="7" ry="3.5" fill="none" stroke="#111" stroke-width="1.1" transform="rotate(-45 9 9)"/><rect x="1.5" y="13.5" width="3" height="3" fill="#fff" stroke="#2b2bff" stroke-width="1" /><rect x="7.5" y="7.5" width="3" height="3" fill="#fff" stroke="#2b2bff" stroke-width="1" /><rect x="13.5" y="1.5" width="3" height="3" fill="#fff" stroke="#2b2bff" stroke-width="1" /></svg>
<svg style="position:absolute;left:1815.9px;top:575.5px;overflow:visible" width="20" height="20" viewBox="0 0 18 18"><text x="9" y="6" font-size="6" font-family="Liberation Sans" fill="#22c" text-anchor="middle">a:b</text><path d="M2 14q7-8 14 0" stroke="#111" stroke-width="1.2" fill="none" /></svg>
<svg style="position:absolute;left:1675.7px;top:646.7px;overflow:visible" width="20" height="20" viewBox="0 0 18 18"><path d="M3 15q6-18 12 0" stroke="#111" stroke-width="1" fill="none" /><rect x="1.5" y="13.5" width="3" height="3" fill="#fff" stroke="#2b2bff" stroke-width="1" /><rect x="13.5" y="13.5" width="3" height="3" fill="#fff" stroke="#2b2bff" stroke-width="1" /><rect x="3.5" y="1.5" width="3" height="3" fill="#fff" stroke="#2b2bff" stroke-width="1" /><rect x="11.5" y="1.5" width="3" height="3" fill="#fff" stroke="#2b2bff" stroke-width="1" /></svg>
<svg style="position:absolute;left:1703.8px;top:646.7px;overflow:visible" width="20" height="20" viewBox="0 0 18 18"><path d="M3 14l7-4-5-3 8-3" stroke="#111" stroke-width="1" fill="none" /><rect x="1.5" y="12.5" width="3" height="3" fill="#fff" stroke="#2b2bff" stroke-width="1" /><rect x="11.5" y="2.5" width="3" height="3" fill="#fff" stroke="#2b2bff" stroke-width="1" /><rect x="7.5" y="7.5" width="3" height="3" fill="#fff" stroke="#2b2bff" stroke-width="1" /></svg>
<svg style="position:absolute;left:1731.7px;top:646.7px;overflow:visible" width="20" height="20" viewBox="0 0 18 18"><path d="M3 15q1-12 6-12t6 12" stroke="#111" stroke-width="1" fill="none" /><rect x="1.5" y="13.5" width="3" height="3" fill="#fff" stroke="#2b2bff" stroke-width="1" /><rect x="13.5" y="13.5" width="3" height="3" fill="#fff" stroke="#2b2bff" stroke-width="1" /><rect x="4.5" y="1.5" width="3" height="3" fill="#fff" stroke="#2b2bff" stroke-width="1" /><rect x="10.5" y="1.5" width="3" height="3" fill="#fff" stroke="#2b2bff" stroke-width="1" /></svg>
<svg style="position:absolute;left:1759.6px;top:646.7px;overflow:visible" width="20" height="20" viewBox="0 0 18 18"><path d="M3 14q-1-10 6-10t4 6-6 1" stroke="#111" stroke-width="1" fill="none" /><rect x="1.5" y="12.5" width="3" height="3" fill="#fff" stroke="#2b2bff" stroke-width="1" /><rect x="7.5" y="6.5" width="3" height="3" fill="#fff" stroke="#2b2bff" stroke-width="1" /></svg>
<svg style="position:absolute;left:1787.8px;top:646.7px;overflow:visible" width="20" height="20" viewBox="0 0 18 18"><path d="M3 14q-1-10 6-10t4 6-6 1" stroke="#111" stroke-width="1" fill="none" /><rect x="1.5" y="12.5" width="3" height="3" fill="#fff" stroke="#2b2bff" stroke-width="1" /><rect x="6.5" y="7.5" width="3" height="3" fill="#fff" stroke="#2b2bff" stroke-width="1" /></svg>
<svg style="position:absolute;left:1815.9px;top:646.7px;overflow:visible" width="20" height="20" viewBox="0 0 18 18"><path d="M4 9q-3-6 3-6q3-2 5 2q5 2 2 7q-2 4-6 3q-5 0-4-6" stroke="#111" stroke-width="1" fill="none" /><rect x="6.5" y="12.5" width="3" height="3" fill="#fff" stroke="#2b2bff" stroke-width="1" /><rect x="9.5" y="12.5" width="3" height="3" fill="#fff" stroke="#2b2bff" stroke-width="1" /></svg>
<svg style="position:absolute;left:1843.4px;top:646.7px;overflow:visible" width="20" height="20" viewBox="0 0 18 18"><path d="M3 15l6-8 6-5" stroke="#111" stroke-width="1" fill="none" /><path d="M3 15l4-10 4 8 4-11" stroke="#333" stroke-width="0.6" fill="none" stroke-dasharray="1.5 1.5"/><rect x="1.5" y="8.5" width="3" height="3" fill="#fff" stroke="#2b2bff" stroke-width="1" /><rect x="7.5" y="8.5" width="3" height="3" fill="#fff" stroke="#2b2bff" stroke-width="1" /><rect x="12.5" y="1.5" width="3" height="3" fill="#fff" stroke="#2b2bff" stroke-width="1" /><rect x="7" y="1" width="3" height="3" fill="#fff" stroke="#111" stroke-width="0.8" /></svg>
<svg style="position:absolute;left:1675.7px;top:675.5px;overflow:visible" width="20" height="20" viewBox="0 0 18 18"><path d="M3 14q6-12 12 0" stroke="#aaa" stroke-width="1.2" fill="none" /><path d="M4 13q5-10 10 0" stroke="#ccc" stroke-width="0.6" fill="none" /></svg>
<div style="position:absolute;left:1659px;top:180px;width:2px;height:520px;background:#c8d4e2"></div>
<div style="position:absolute;left:1659px;top:700px;width:261px;height:30px;background:#f0f0f0"></div>
<div style="position:absolute;left:1659px;top:700px;width:245px;height:1px;background:#b8c4d0"></div>
<div style="position:absolute;left:1660px;top:703px;width:59px;height:23px;background:#fff;border:1px solid #aab;border-top:none;box-sizing:border-box"></div>
<svg style="position:absolute;left:1664px;top:706px;" width="16" height="16" viewBox="0 0 16 16"><path d="M1 8l5-3 7 3v7l-7-3z" stroke="#222" stroke-width="1" fill="#e00" /><path d="M3 2l8 6" stroke="#333" stroke-width="2" fill="none" /><rect x="9" y="5" width="5" height="4" fill="#fff" stroke="#333" stroke-width="1" /></svg>
<div style="position:absolute;left:1683px;top:709.34px;font-size:12px;line-height:12px;color:#111;white-space:nowrap;">Tools</div>
<div style="position:absolute;left:1719px;top:703px;width:65px;height:22px;background:#ececec;border:1px solid #b8b8b8;border-top:none;box-sizing:border-box"></div>
<svg style="position:absolute;left:1725px;top:706px;" width="16" height="16" viewBox="0 0 16 16"><path d="M2 1v12l3-3 3 5 2-1-3-5h4z" stroke="#22a" stroke-width="0.5" fill="#22a" /><rect x="12" y="5" width="1.5" height="1.5" fill="#22a" stroke="none" stroke-width="0" /><rect x="12" y="10" width="1.5" height="1.5" fill="#22a" stroke="none" stroke-width="0" /></svg>
<div style="position:absolute;left:1742px;top:708.34px;font-size:12px;line-height:12px;color:#111;white-space:nowrap;">Selec...</div>
<div style="position:absolute;left:1784px;top:703px;width:62px;height:22px;background:#ececec;border:1px solid #b8b8b8;border-top:none;box-sizing:border-box"></div>
<svg style="position:absolute;left:1790px;top:706px;" width="16" height="16" viewBox="0 0 16 16"><rect x="1.5" y="5.5" width="8" height="9" fill="#fff" stroke="#222" stroke-width="1" /><rect x="5.5" y="1.5" width="9" height="9" fill="#fff" stroke="#22a" stroke-width="1" /></svg>
<div style="position:absolute;left:1807px;top:708.34px;font-size:12px;line-height:12px;color:#111;white-space:nowrap;">Blocks</div>
<div style="position:absolute;left:1846px;top:703px;width:65px;height:22px;background:#ececec;border:1px solid #b8b8b8;border-top:none;box-sizing:border-box"></div>
<svg style="position:absolute;left:1852px;top:706px;" width="16" height="16" viewBox="0 0 16 16"><rect x="1" y="3" width="14" height="10" fill="#3a7" stroke="#124" stroke-width="1" /><rect x="3" y="5" width="10" height="3" fill="#cff" stroke="none" stroke-width="0" /></svg>
<div style="position:absolute;left:1869px;top:708.34px;font-size:12px;line-height:12px;color:#111;white-space:nowrap;">Varia...</div>
<div style="position:absolute;left:1659px;top:731px;width:261px;height:23px;background:linear-gradient(#c3d2e3,#dfe8f2);border-top:1px solid #4a4a4a;border-left:1px solid #4a4a4a;box-sizing:border-box"></div>
<div style="position:absolute;left:1664px;top:736.00px;font-size:13px;line-height:13px;color:#555;white-space:nowrap;">Measurement Info</div>
<svg style="position:absolute;left:1882px;top:734px;" width="17" height="17" viewBox="0 0 17 17"><defs><radialGradient id="pg" cx="0.4" cy="0.4" r="0.7"><stop offset="0" stop-color="#fff"/><stop offset="1" stop-color="#999"/></radialGradient></defs><path d="M2 16l4-4" stroke="#888" stroke-width="1.3" fill="none" /><circle cx="8.6" cy="9.3" r="5.8" fill="url(#pg2)" stroke="#888" stroke-width="0.8" /><circle cx="12.6" cy="5.4" r="3.6" fill="url(#pg2)" stroke="#888" stroke-width="0.8" /></svg>
<div style="position:absolute;left:1902px;top:734px;width:16px;height:16px;background:#a9a9a9;border:1px solid #fff;border-radius:1px;box-sizing:border-box"></div>
<svg style="position:absolute;left:1904px;top:736px;" width="12" height="12" viewBox="0 0 12 12"><path d="M3 3l6 6M9 3l-6 6" stroke="#fff" stroke-width="2" fill="none" /></svg>
<div style="position:absolute;left:1659px;top:754px;width:261px;height:259px;background:#f0f0f0"></div>
<div style="position:absolute;left:1664px;top:761px;width:23px;height:23px;background:#f7f7f7;border-left:1px solid #ddd;border-top:1px solid #ddd;box-sizing:border-box"></div>
<svg style="position:absolute;left:1668px;top:765px;" width="14" height="14" viewBox="0 0 14 14"><rect x="1.5" y="1.5" width="11" height="11" fill="#fff" stroke="#222" stroke-width="1" /><path d="M4 4.5h6" stroke="#222" stroke-width="1" fill="none" /><path d="M4 7h6" stroke="#222" stroke-width="1" fill="none" /><path d="M4 9.5h6" stroke="#222" stroke-width="1" fill="none" /></svg>
<svg style="position:absolute;left:1692px;top:766px;" width="12" height="12" viewBox="0 0 12 12"><path d="M1.5 1.5l9 9M10.5 1.5l-9 9" stroke="#222" stroke-width="1.8" fill="none" /></svg>
<div style="position:absolute;left:1663px;top:786px;width:253px;height:166px;background:#fff;border:1px solid #b0b0b0;box-sizing:border-box"></div>
<div style="position:absolute;left:1898px;top:787px;width:17px;height:164px;background:#f4f4f4"></div>
<svg style="position:absolute;left:1902px;top:795px;" width="10" height="7" viewBox="0 0 10 7"><path d="M1 6l4-4 4 4" stroke="#ccc" stroke-width="1.4" fill="none" /></svg>
<svg style="position:absolute;left:1902px;top:937px;" width="10" height="7" viewBox="0 0 10 7"><path d="M1 1l4 4 4-4" stroke="#ccc" stroke-width="1.4" fill="none" /></svg></body></html>
